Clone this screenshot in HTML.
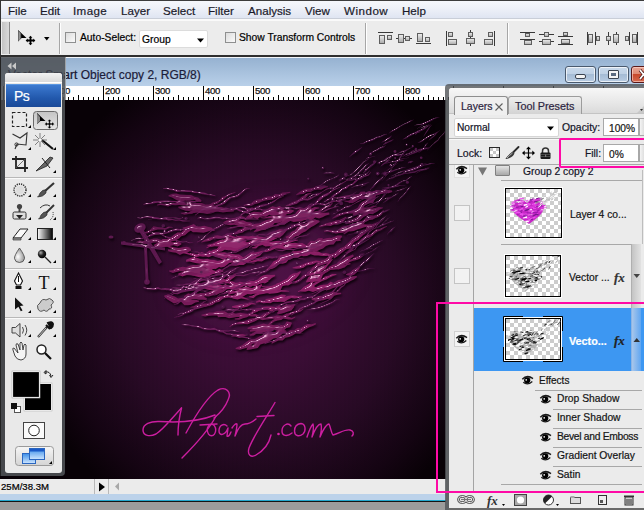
<!DOCTYPE html>
<html><head><meta charset="utf-8">
<style>
*{margin:0;padding:0;box-sizing:border-box}
html,body{width:644px;height:510px;overflow:hidden;background:#9c9c9c;font-family:"Liberation Sans",sans-serif;color:#000}
.a{position:absolute}
.t{position:absolute;white-space:nowrap;line-height:1;-webkit-text-stroke:0.2px currentColor}
/* menu */
#menu{left:0;top:0;width:644px;height:21px;background:linear-gradient(#3c3c3c 0,#3c3c3c 1px,#f5f7fb 1px,#eef1f8 8px,#dfe5f2 18px,#c9ced8 18px,#c9ced8 19px,#fafafa 19px,#fafafa 21px)}
#menu .t{font-size:11.6px;top:5px;color:#1a1a2a}
/* options */
#opts{left:0;top:21px;width:644px;height:36px;background:linear-gradient(#ececec 0,#ececec 34px,#2e2e2e 34px,#2e2e2e 36px)}
#opts .t{font-size:10.3px;color:#111}
.sep{position:absolute;top:23px;width:2px;height:31px;border-left:1px solid #a6a6a6;border-right:1px solid #fff}
.cb{position:absolute;width:11px;height:11px;border:1px solid #8e8f8f;background:linear-gradient(135deg,#dcdcdc,#fafafa)}
/* doc window */
#title{left:0;top:57px;width:644px;height:29px;background:linear-gradient(#f2f5f9 0,#f2f5f9 1px,#96b2d1 1px,#b9d0e9 29px)}
#ruler{left:0;top:86px;width:644px;height:14px;background:#fff}
#canvas{left:0;top:100px;width:446px;height:379px;background:repeating-linear-gradient(90deg,rgba(0,0,0,0.025) 0 2px,rgba(0,0,0,0) 2px 4px),radial-gradient(ellipse 235px 245px at 258px 200px,#440e3e 0%,#3a0d35 30%,#280a25 60%,#140412 86%,#080106 100%)}
#status{left:0;top:479px;width:446px;height:15px;background:#ebebeb}
#frameb{left:0;top:494px;width:446px;height:8px;background:linear-gradient(#bcd2ea 0,#bcd2ea 6px,#22a6cc 6px,#22a6cc 7px,#151515 7px)}
/* tools */
#tools{left:0;top:57px;width:65px;height:419px;background:rgba(78,82,86,0.88);border-left:1px solid #222;border-radius:0 0 4px 0}
#toolsbody{left:5px;top:73px;width:57px;height:400px;background:#e9e9e9;border-radius:3px}
/* layers panel */
#lp{left:445px;top:84px;width:210px;height:430px;background:rgba(80,84,88,0.8);border-radius:4px 0 0 0}
#lpbody{left:449px;top:88px;width:200px;height:430px;background:#ebebeb;border-radius:3px 0 0 0}
.lt{position:absolute;white-space:nowrap;line-height:1;font-size:10.3px;color:#111;-webkit-text-stroke:0.2px currentColor}
.pink{position:absolute;border:2px solid #ff0aa6}
</style></head><body>

<!-- MENU -->
<div id="menu" class="a">
  <div class="t" style="left:8px">File</div>
  <div class="t" style="left:40px">Edit</div>
  <div class="t" style="left:73px;letter-spacing:0.4px">Image</div>
  <div class="t" style="left:121px">Layer</div>
  <div class="t" style="left:163px">Select</div>
  <div class="t" style="left:208px">Filter</div>
  <div class="t" style="left:248px">Analysis</div>
  <div class="t" style="left:305px">View</div>
  <div class="t" style="left:344px;letter-spacing:0.5px">Window</div>
  <div class="t" style="left:402px">Help</div>
  <div class="a" style="left:0;top:0;width:1px;height:21px;background:#333"></div>
</div>

<!-- OPTIONS BAR -->
<div id="opts" class="a">
  <div class="a" style="left:0;top:0;width:1px;height:34px;background:#333"></div>
  <div class="a" style="left:2px;top:1px;width:8px;height:32px;background:linear-gradient(90deg,#c4c4c4,#dadada);border-right:1px solid #8a8a8a"></div>
</div>
<div class="sep" style="left:59px"></div>
<div class="cb" style="left:65px;top:32px"></div>
<div class="t" style="left:80px;top:33px;font-size:10.3px">Auto-Select:</div>
<div class="a" style="left:139px;top:30px;width:69px;height:18px;background:#fff;border:1px solid #dcdcdc;border-radius:2px"></div>
<div class="t" style="left:142px;top:35px;font-size:10.3px">Group</div>
<svg class="a" style="left:0;top:0" width="644" height="57" viewBox="0 0 644 57"><defs><linearGradient id="g1" x1="0" y1="0" x2="0" y2="1"><stop offset="0" stop-color="#f0f0f0"/><stop offset="1" stop-color="#a8a8a8"/></linearGradient></defs><line x1="378" y1="32.5" x2="393" y2="32.5" stroke="#3a3a3a" stroke-width="1"/><rect x="379.5" y="35.5" width="5" height="8" fill="url(#g1)" stroke="#5e5e5e" stroke-width="1"/><rect x="387.5" y="35.5" width="4" height="4" fill="url(#g1)" stroke="#5e5e5e" stroke-width="1"/><line x1="396" y1="38.5" x2="412" y2="38.5" stroke="#3a3a3a" stroke-width="1"/><rect x="398.5" y="34.5" width="5" height="8" fill="url(#g1)" stroke="#5e5e5e" stroke-width="1"/><rect x="405.5" y="36.5" width="4" height="4" fill="url(#g1)" stroke="#5e5e5e" stroke-width="1"/><line x1="416" y1="43.5" x2="431" y2="43.5" stroke="#3a3a3a" stroke-width="1"/><rect x="417.5" y="33.5" width="5" height="8" fill="url(#g1)" stroke="#5e5e5e" stroke-width="1"/><rect x="425.5" y="37.5" width="4" height="4" fill="url(#g1)" stroke="#5e5e5e" stroke-width="1"/><line x1="446.5" y1="31" x2="446.5" y2="46" stroke="#3a3a3a" stroke-width="1"/><rect x="448.5" y="32.5" width="4" height="4" fill="url(#g1)" stroke="#5e5e5e" stroke-width="1"/><rect x="448.5" y="39.5" width="8" height="5" fill="url(#g1)" stroke="#5e5e5e" stroke-width="1"/><line x1="470.5" y1="30" x2="470.5" y2="46" stroke="#3a3a3a" stroke-width="1"/><rect x="468.5" y="32.5" width="4" height="4" fill="url(#g1)" stroke="#5e5e5e" stroke-width="1"/><rect x="466.5" y="38.5" width="8" height="5" fill="url(#g1)" stroke="#5e5e5e" stroke-width="1"/><line x1="494.5" y1="31" x2="494.5" y2="46" stroke="#3a3a3a" stroke-width="1"/><rect x="488.5" y="32.5" width="4" height="4" fill="url(#g1)" stroke="#5e5e5e" stroke-width="1"/><rect x="484.5" y="39.5" width="8" height="5" fill="url(#g1)" stroke="#5e5e5e" stroke-width="1"/><line x1="520" y1="32.5" x2="535" y2="32.5" stroke="#3a3a3a" stroke-width="1"/><rect x="525.5" y="33.5" width="4" height="3" fill="url(#g1)" stroke="#5e5e5e" stroke-width="1"/><line x1="520" y1="39.5" x2="535" y2="39.5" stroke="#3a3a3a" stroke-width="1"/><rect x="524.5" y="40.5" width="7" height="4" fill="url(#g1)" stroke="#5e5e5e" stroke-width="1"/><line x1="539" y1="34.5" x2="554" y2="34.5" stroke="#3a3a3a" stroke-width="1"/><rect x="544.5" y="32.5" width="4" height="4" fill="url(#g1)" stroke="#5e5e5e" stroke-width="1"/><line x1="539" y1="41.5" x2="554" y2="41.5" stroke="#3a3a3a" stroke-width="1"/><rect x="542.5" y="39.5" width="8" height="5" fill="url(#g1)" stroke="#5e5e5e" stroke-width="1"/><rect x="563.5" y="32.5" width="4" height="3" fill="url(#g1)" stroke="#5e5e5e" stroke-width="1"/><line x1="558" y1="36.5" x2="573" y2="36.5" stroke="#3a3a3a" stroke-width="1"/><rect x="561.5" y="39.5" width="8" height="4" fill="url(#g1)" stroke="#5e5e5e" stroke-width="1"/><line x1="558" y1="44.5" x2="573" y2="44.5" stroke="#3a3a3a" stroke-width="1"/><line x1="587.5" y1="32" x2="587.5" y2="45" stroke="#3a3a3a" stroke-width="1"/><rect x="588.5" y="34.5" width="4" height="8" fill="url(#g1)" stroke="#5e5e5e" stroke-width="1"/><line x1="595.5" y1="32" x2="595.5" y2="45" stroke="#3a3a3a" stroke-width="1"/><rect x="596.5" y="36.5" width="3" height="4" fill="url(#g1)" stroke="#5e5e5e" stroke-width="1"/><line x1="608.5" y1="32" x2="608.5" y2="45" stroke="#3a3a3a" stroke-width="1"/><rect x="606.5" y="36.5" width="4" height="4" fill="url(#g1)" stroke="#5e5e5e" stroke-width="1"/><line x1="616.5" y1="32" x2="616.5" y2="45" stroke="#3a3a3a" stroke-width="1"/><rect x="613.5" y="34.5" width="5" height="8" fill="url(#g1)" stroke="#5e5e5e" stroke-width="1"/><rect x="625.5" y="36.5" width="3" height="4" fill="url(#g1)" stroke="#5e5e5e" stroke-width="1"/><line x1="629.5" y1="32" x2="629.5" y2="45" stroke="#3a3a3a" stroke-width="1"/><rect x="632.5" y="34.5" width="4" height="8" fill="url(#g1)" stroke="#5e5e5e" stroke-width="1"/><line x1="637.5" y1="32" x2="637.5" y2="45" stroke="#3a3a3a" stroke-width="1"/></svg><svg class="a" style="left:0;top:0" width="60" height="57" viewBox="0 0 60 57">
<defs><linearGradient id="mg" x1="0" y1="0" x2="1" y2="0"><stop offset="0" stop-color="#555"/><stop offset="0.5" stop-color="#a0a0a0"/><stop offset="1" stop-color="#222"/></linearGradient></defs>
<path d="M18 30 L26.5 38 L21.5 38 L18 41.5 Z" fill="#000"/>
<path d="M18 30.5 L21.5 34 L21.5 38 L18 41.5 Z" fill="url(#mg)"/>
<g transform="translate(30.5,40.5) scale(0.88)" fill="#000"><path d="M0 -5.5 L2.2 -3.2 L1 -3.2 L1 -1 L3.2 -1 L3.2 -2.2 L5.5 0 L3.2 2.2 L3.2 1 L1 1 L1 3.2 L2.2 3.2 L0 5.5 L-2.2 3.2 L-1 3.2 L-1 1 L-3.2 1 L-3.2 2.2 L-5.5 0 L-3.2 -2.2 L-3.2 -1 L-1 -1 L-1 -3.2 L-2.2 -3.2Z"/></g>
<path d="M44 37 L49.5 37 L46.75 40.5 Z" fill="#000"/>
</svg>
<svg class="a" style="left:196px;top:37px" width="9" height="6" viewBox="0 0 9 6"><path d="M1 1.5 L8 1.5 L4.5 5.5Z" fill="#000"/></svg>
<div class="sep" style="left:365px"></div>
<div class="sep" style="left:507px"></div>
<div class="cb" style="left:225px;top:32px"></div>
<div class="t" style="left:239px;top:33px;font-size:10.3px">Show Transform Controls</div>

<!-- DOCUMENT -->
<div id="title" class="a"></div>
<div class="t" style="left:8px;top:69px;font-size:12px;color:#1c1c3a">Vector Smart Object copy 2, RGB/8)</div>
<div id="ruler" class="a"></div>
<svg class="a" style="left:0;top:86px" width="644" height="14" viewBox="0 0 644 14"><g font-family="Liberation Sans" font-size="9.6" letter-spacing="-0.3" fill="#111" stroke="#111" stroke-width="0.25"><text x="5" y="8.3">0</text><text x="55" y="8.3">100</text><text x="105" y="8.3">200</text><text x="155" y="8.3">300</text><text x="205" y="8.3">400</text><text x="255" y="8.3">500</text><text x="305" y="8.3">600</text><text x="355" y="8.3">700</text><text x="405" y="8.3">800</text><text x="455" y="8.3">900</text><text x="505" y="8.3">1000</text><text x="555" y="8.3">1100</text><text x="605" y="8.3">1200</text></g><g fill="#000"><rect x="3" y="0" width="1" height="14"/><rect x="8" y="11" width="1" height="3"/><rect x="13" y="11" width="1" height="3"/><rect x="18" y="11" width="1" height="3"/><rect x="23" y="11" width="1" height="3"/><rect x="28" y="9" width="1" height="5"/><rect x="33" y="11" width="1" height="3"/><rect x="38" y="11" width="1" height="3"/><rect x="43" y="11" width="1" height="3"/><rect x="48" y="11" width="1" height="3"/><rect x="53" y="0" width="1" height="14"/><rect x="58" y="11" width="1" height="3"/><rect x="63" y="11" width="1" height="3"/><rect x="68" y="11" width="1" height="3"/><rect x="73" y="11" width="1" height="3"/><rect x="78" y="9" width="1" height="5"/><rect x="83" y="11" width="1" height="3"/><rect x="88" y="11" width="1" height="3"/><rect x="93" y="11" width="1" height="3"/><rect x="98" y="11" width="1" height="3"/><rect x="103" y="0" width="1" height="14"/><rect x="108" y="11" width="1" height="3"/><rect x="113" y="11" width="1" height="3"/><rect x="118" y="11" width="1" height="3"/><rect x="123" y="11" width="1" height="3"/><rect x="128" y="9" width="1" height="5"/><rect x="133" y="11" width="1" height="3"/><rect x="138" y="11" width="1" height="3"/><rect x="143" y="11" width="1" height="3"/><rect x="148" y="11" width="1" height="3"/><rect x="153" y="0" width="1" height="14"/><rect x="158" y="11" width="1" height="3"/><rect x="163" y="11" width="1" height="3"/><rect x="168" y="11" width="1" height="3"/><rect x="173" y="11" width="1" height="3"/><rect x="178" y="9" width="1" height="5"/><rect x="183" y="11" width="1" height="3"/><rect x="188" y="11" width="1" height="3"/><rect x="193" y="11" width="1" height="3"/><rect x="198" y="11" width="1" height="3"/><rect x="203" y="0" width="1" height="14"/><rect x="208" y="11" width="1" height="3"/><rect x="213" y="11" width="1" height="3"/><rect x="218" y="11" width="1" height="3"/><rect x="223" y="11" width="1" height="3"/><rect x="228" y="9" width="1" height="5"/><rect x="233" y="11" width="1" height="3"/><rect x="238" y="11" width="1" height="3"/><rect x="243" y="11" width="1" height="3"/><rect x="248" y="11" width="1" height="3"/><rect x="253" y="0" width="1" height="14"/><rect x="258" y="11" width="1" height="3"/><rect x="263" y="11" width="1" height="3"/><rect x="268" y="11" width="1" height="3"/><rect x="273" y="11" width="1" height="3"/><rect x="278" y="9" width="1" height="5"/><rect x="283" y="11" width="1" height="3"/><rect x="288" y="11" width="1" height="3"/><rect x="293" y="11" width="1" height="3"/><rect x="298" y="11" width="1" height="3"/><rect x="303" y="0" width="1" height="14"/><rect x="308" y="11" width="1" height="3"/><rect x="313" y="11" width="1" height="3"/><rect x="318" y="11" width="1" height="3"/><rect x="323" y="11" width="1" height="3"/><rect x="328" y="9" width="1" height="5"/><rect x="333" y="11" width="1" height="3"/><rect x="338" y="11" width="1" height="3"/><rect x="343" y="11" width="1" height="3"/><rect x="348" y="11" width="1" height="3"/><rect x="353" y="0" width="1" height="14"/><rect x="358" y="11" width="1" height="3"/><rect x="363" y="11" width="1" height="3"/><rect x="368" y="11" width="1" height="3"/><rect x="373" y="11" width="1" height="3"/><rect x="378" y="9" width="1" height="5"/><rect x="383" y="11" width="1" height="3"/><rect x="388" y="11" width="1" height="3"/><rect x="393" y="11" width="1" height="3"/><rect x="398" y="11" width="1" height="3"/><rect x="403" y="0" width="1" height="14"/><rect x="408" y="11" width="1" height="3"/><rect x="413" y="11" width="1" height="3"/><rect x="418" y="11" width="1" height="3"/><rect x="423" y="11" width="1" height="3"/><rect x="428" y="9" width="1" height="5"/><rect x="433" y="11" width="1" height="3"/><rect x="438" y="11" width="1" height="3"/><rect x="443" y="11" width="1" height="3"/><rect x="448" y="11" width="1" height="3"/><rect x="453" y="0" width="1" height="14"/><rect x="458" y="11" width="1" height="3"/><rect x="463" y="11" width="1" height="3"/><rect x="468" y="11" width="1" height="3"/><rect x="473" y="11" width="1" height="3"/><rect x="478" y="9" width="1" height="5"/><rect x="483" y="11" width="1" height="3"/><rect x="488" y="11" width="1" height="3"/><rect x="493" y="11" width="1" height="3"/><rect x="498" y="11" width="1" height="3"/><rect x="503" y="0" width="1" height="14"/><rect x="508" y="11" width="1" height="3"/><rect x="513" y="11" width="1" height="3"/><rect x="518" y="11" width="1" height="3"/><rect x="523" y="11" width="1" height="3"/><rect x="528" y="9" width="1" height="5"/><rect x="533" y="11" width="1" height="3"/><rect x="538" y="11" width="1" height="3"/><rect x="543" y="11" width="1" height="3"/><rect x="548" y="11" width="1" height="3"/><rect x="553" y="0" width="1" height="14"/><rect x="558" y="11" width="1" height="3"/><rect x="563" y="11" width="1" height="3"/><rect x="568" y="11" width="1" height="3"/><rect x="573" y="11" width="1" height="3"/><rect x="578" y="9" width="1" height="5"/><rect x="583" y="11" width="1" height="3"/><rect x="588" y="11" width="1" height="3"/><rect x="593" y="11" width="1" height="3"/><rect x="598" y="11" width="1" height="3"/><rect x="603" y="0" width="1" height="14"/><rect x="608" y="11" width="1" height="3"/><rect x="613" y="11" width="1" height="3"/><rect x="618" y="11" width="1" height="3"/><rect x="623" y="11" width="1" height="3"/><rect x="628" y="9" width="1" height="5"/><rect x="633" y="11" width="1" height="3"/><rect x="638" y="11" width="1" height="3"/><rect x="643" y="11" width="1" height="3"/></g></svg>
<div class="a" style="left:565px;top:66px;width:31px;height:17px;border:1px solid #4a5a6e;border-radius:3px;box-shadow:inset 0 0 0 1px rgba(255,255,255,.7);background:linear-gradient(#c9d9eb 0,#bfd1e5 45%,#a5bcd5 50%,#b8cce3 100%)"></div>
<div class="a" style="left:575px;top:74px;width:11px;height:5px;border:1px solid #3a4350;border-radius:2px;background:#f4f4f4"></div>
<div class="a" style="left:598px;top:66px;width:31px;height:17px;border:1px solid #4a5a6e;border-radius:3px;box-shadow:inset 0 0 0 1px rgba(255,255,255,.7);background:linear-gradient(#c9d9eb 0,#bfd1e5 45%,#a5bcd5 50%,#b8cce3 100%)"></div>
<div class="a" style="left:608px;top:70px;width:11px;height:9px;border:1px solid #3a4350;border-radius:1px;background:#f4f4f4"></div>
<div class="a" style="left:611px;top:73px;width:5px;height:3px;background:#5a6a80"></div>
<div class="a" style="left:631px;top:66px;width:40px;height:17px;border:1px solid #5a1818;border-radius:3px;box-shadow:inset 0 0 0 1px rgba(255,220,210,.6);background:linear-gradient(#e9a595 0,#de8a74 45%,#c8482c 50%,#d66a50 100%)"></div>
<svg class="a" style="left:638px;top:68px" width="6" height="13" viewBox="0 0 6 13"><path d="M2 2 L9 11 M9 2 L2 11" stroke="#4a1a1a" stroke-width="3.2"/><path d="M2 2 L9 11 M9 2 L2 11" stroke="#fff" stroke-width="1.8"/></svg>

<div id="canvas" class="a"></div>
<svg id="art" class="a" style="left:0;top:100px" width="446" height="379" viewBox="0 100 446 379">
<defs>
<filter id="bl" x="-50%" y="-50%" width="200%" height="200%"><feGaussianBlur stdDeviation="16"/></filter>
<filter id="gloss" x="-10%" y="-10%" width="120%" height="120%" color-interpolation-filters="sRGB">
<feGaussianBlur in="SourceAlpha" stdDeviation="0.9" result="b"/>
<feSpecularLighting in="b" surfaceScale="4" specularConstant="1.0" specularExponent="35" lighting-color="#f2c0e0" result="spec"><feDistantLight azimuth="240" elevation="45"/></feSpecularLighting>
<feComposite in="spec" in2="SourceAlpha" operator="in" result="specIn"/>
<feOffset in="SourceAlpha" dx="1" dy="1.5" result="off"/><feGaussianBlur in="off" stdDeviation="1" result="offb"/>
<feFlood flood-color="#0a0008" flood-opacity="0.9"/><feComposite in2="offb" operator="in" result="shadow"/>
<feMerge><feMergeNode in="shadow"/><feMergeNode in="SourceGraphic"/><feMergeNode in="specIn"/></feMerge>
</filter>
</defs>
<ellipse cx="262" cy="268" rx="80" ry="52" transform="rotate(-15 262 268)" fill="#5a1450" opacity="0.5" filter="url(#bl)"/>
<g filter="url(#gloss)"><g><path d="M266.5 271.2L269.5 269.3L273.1 268.6L276.1 266.7L278.7 263.6L282.7 263.8L286.1 262.7L288.6 259.7L292.0 258.6L295.3 257.2L297.8 254.1L301.2 253.0L304.7 252.2L304.2 250.9L300.2 250.9L296.5 251.3L292.5 251.2L289.8 253.8L287.1 256.5L282.9 256.0L279.3 256.7L276.9 259.9L273.6 261.2L271.2 264.5L268.6 267.5L265.9 269.9Z" fill="#8a1e64"/><path d="M255.7 242.1L259.4 242.4L263.4 243.5L266.9 242.6L270.3 241.6L273.5 239.3L277.0 238.8L276.9 238.3L273.1 237.7L269.7 239.1L266.2 239.8L262.7 240.6L259.1 241.1L255.5 241.6Z" fill="#8a1e64"/><path d="M218.1 245.1L221.8 245.3L225.6 246.1L229.2 245.9L232.7 245.1L236.4 245.5L239.7 243.9L243.0 242.2L246.5 241.5L246.2 240.1L242.2 238.4L238.9 239.9L235.1 239.1L231.7 240.2L227.9 239.5L224.5 240.7L220.8 240.3L217.9 244.1Z" fill="#8a1e64"/><path d="M269.6 237.4L274.6 237.8L279.5 237.7L283.0 235.0L285.9 231.4L285.2 230.0L279.8 229.0L275.8 230.8L272.0 232.8L269.0 236.3Z" fill="#761a58"/><path d="M333.6 268.5L338.5 269.4L342.4 268.3L344.8 264.4L348.1 262.2L350.6 258.5L353.9 256.2L353.0 254.5L349.3 255.9L345.7 257.6L342.6 260.1L339.1 262.0L336.0 264.6L333.2 267.7Z" fill="#761a58"/><path d="M231.9 220.8L235.4 223.6L239.0 225.2L242.7 225.6L246.4 226.4L250.1 226.7L253.8 227.1L257.3 229.4L261.2 227.2L264.9 226.9L265.1 225.2L261.5 223.5L257.8 223.4L254.0 224.1L250.4 222.4L246.7 222.0L243.1 220.3L239.4 220.5L235.8 219.4L232.0 219.7Z" fill="#761a58"/><path d="M250.1 230.4L253.5 228.8L257.2 228.0L261.5 229.1L264.7 227.0L268.2 225.5L271.5 223.5L275.2 222.9L279.0 222.7L282.5 221.2L286.3 221.0L289.6 218.9L293.1 217.5L296.7 216.6L296.4 215.5L292.4 215.4L288.8 216.4L284.5 215.0L280.6 215.0L277.2 216.8L273.6 217.7L270.2 219.3L266.4 219.9L263.0 221.5L259.8 223.6L256.3 225.0L252.9 226.7L249.8 229.4Z" fill="#761a58"/><path d="M290.9 225.4L294.8 226.2L298.5 225.9L302.3 226.2L306.1 226.1L309.9 226.3L313.4 224.6L316.9 223.4L316.8 222.7L313.0 222.7L309.4 223.5L305.7 223.8L302.0 224.6L298.1 223.8L294.5 224.8L290.8 224.9Z" fill="#761a58"/><path d="M345.1 253.1L348.9 252.5L351.9 250.5L354.3 247.6L357.2 245.6L360.0 243.3L362.4 240.5L365.5 238.8L369.1 237.8L372.2 236.0L374.7 233.4L377.7 231.5L381.1 230.2L384.1 228.3L387.2 226.6L386.8 225.9L383.3 227.0L380.4 229.1L376.4 229.5L373.5 231.5L370.8 234.0L367.3 235.0L364.3 237.0L361.4 239.1L358.7 241.4L355.8 243.5L352.9 245.6L350.8 248.8L348.0 251.0L344.9 252.7Z" fill="#64164e"/><path d="M301.2 291.5L305.1 291.7L308.8 290.8L313.0 292.0L316.6 290.8L320.5 290.3L324.1 288.8L327.8 288.0L331.8 288.1L335.4 286.6L338.8 284.1L338.4 282.1L334.7 283.2L330.6 281.8L327.2 284.5L323.3 284.8L319.5 285.4L316.0 287.3L311.6 284.8L307.9 285.7L304.2 286.9L300.8 289.9Z" fill="#8a1e64"/><path d="M284.7 222.5L288.1 221.0L292.0 220.6L295.8 219.8L299.4 218.9L303.3 218.4L306.3 215.9L309.7 214.3L312.7 211.9L315.7 209.2L319.3 208.2L319.0 207.5L314.7 207.0L311.3 208.5L308.2 210.7L304.4 211.5L300.6 212.0L297.8 215.1L294.4 216.6L290.8 217.8L287.1 218.6L284.0 220.9Z" fill="#761a58"/><path d="M271.8 301.5L276.1 301.8L279.1 299.1L283.2 299.1L285.9 295.7L285.6 295.0L281.3 294.6L277.8 296.1L274.0 297.1L271.4 300.6Z" fill="#8a1e64"/><path d="M168.2 251.2L172.1 252.3L175.9 252.8L179.9 254.9L183.6 253.2L187.4 252.4L191.1 250.6L191.0 249.0L187.0 247.1L183.3 249.3L179.4 248.1L175.7 249.3L171.9 249.8L168.0 249.3Z" fill="#761a58"/><path d="M234.9 319.5L239.3 319.7L243.1 318.2L247.0 317.2L250.6 315.1L254.2 313.0L258.0 311.5L257.7 310.5L253.5 310.3L250.0 313.0L246.2 314.5L242.0 314.8L238.7 318.0L234.6 318.5Z" fill="#761a58"/><path d="M215.2 299.2L218.8 298.2L222.6 298.6L226.2 297.8L229.9 297.2L233.7 298.7L237.4 299.5L241.1 298.5L244.8 299.1L248.6 299.7L248.5 298.9L244.8 297.4L241.0 296.0L237.3 296.8L233.6 295.6L229.9 295.4L226.2 295.0L222.5 296.3L218.8 296.8L215.1 298.7Z" fill="#8a1e64"/><path d="M261.9 286.7L265.8 287.7L269.6 288.6L273.4 288.5L277.1 287.8L280.8 286.4L284.4 285.2L288.2 285.4L291.8 283.5L295.6 283.2L299.1 280.9L299.0 280.1L295.4 281.3L291.7 282.1L288.0 283.1L284.1 282.3L280.5 283.7L276.9 285.3L273.1 285.4L269.4 286.2L265.6 286.4L261.8 286.0Z" fill="#8a1e64"/><path d="M168.4 196.2L172.0 197.4L175.4 199.5L178.9 200.9L182.8 200.4L186.4 200.8L190.2 200.7L194.1 199.8L197.5 201.7L201.2 202.0L201.5 200.2L198.2 197.6L194.6 196.7L191.1 194.9L187.3 194.9L183.6 194.8L179.9 194.6L176.3 193.5L172.6 193.7L168.6 195.2Z" fill="#64164e"/><path d="M207.6 256.3L210.8 254.1L215.0 254.1L218.0 251.5L222.0 250.8L225.1 248.6L228.6 246.9L232.1 245.4L235.9 244.4L238.7 241.5L242.3 240.1L241.6 238.8L237.7 239.4L233.9 240.4L229.9 240.9L226.3 242.3L223.1 244.5L219.4 245.6L216.8 249.0L213.0 249.9L209.8 252.0L206.9 254.8Z" fill="#8a1e64"/><path d="M332.4 218.8L335.8 217.6L339.1 216.3L342.4 214.7L345.9 214.0L349.5 213.6L353.1 213.4L356.6 213.1L359.8 211.2L363.3 210.2L366.6 208.8L370.3 209.3L373.5 207.3L376.9 206.3L376.8 205.7L373.1 205.7L369.9 207.3L366.3 207.4L362.7 207.6L359.4 209.5L356.1 210.9L352.6 211.3L349.0 211.7L345.4 211.7L342.1 213.1L338.7 214.2L335.4 215.8L332.3 218.1Z" fill="#64164e"/><path d="M235.8 348.9L239.9 349.7L243.5 348.8L247.1 347.8L250.3 345.4L253.6 343.5L257.4 343.3L260.6 340.8L264.2 339.9L267.5 337.8L270.8 335.9L270.6 335.1L266.8 335.3L262.9 335.3L259.4 336.5L256.0 338.4L252.6 339.8L248.8 340.2L245.6 342.5L242.4 345.0L239.0 346.4L235.5 347.9Z" fill="#761a58"/><path d="M156.9 205.6L160.6 204.9L164.3 205.6L168.1 206.6L171.8 205.1L175.5 205.2L179.2 204.9L183.0 205.6L186.7 205.3L190.4 204.9L194.1 205.8L197.9 206.1L201.6 205.9L201.6 204.9L197.8 204.9L194.1 203.8L190.3 202.6L186.6 203.5L182.9 202.4L179.1 201.5L175.5 203.1L171.7 202.8L168.0 203.8L164.3 203.8L160.6 203.2L156.9 204.8Z" fill="#64164e"/><path d="M298.2 292.0L301.8 291.0L304.5 288.4L308.1 287.3L311.2 285.4L313.5 282.1L316.1 279.3L319.9 278.5L322.3 275.4L325.1 272.9L327.9 270.5L331.0 268.7L334.0 266.5L337.1 264.5L336.8 264.0L333.2 265.1L329.8 266.6L327.0 269.1L323.7 270.6L321.3 273.6L318.4 275.9L315.0 277.4L312.5 280.3L309.8 282.9L306.9 285.2L303.7 287.0L301.1 289.7L297.8 291.3Z" fill="#8a1e64"/><path d="M252.0 248.2L256.1 248.5L258.9 246.1L262.4 245.1L265.4 243.1L268.4 240.9L271.7 239.4L274.7 237.4L277.7 235.3L281.1 234.1L280.7 233.2L276.8 233.1L273.7 235.0L270.1 235.8L266.9 237.4L263.9 239.5L260.7 241.2L258.2 244.5L255.2 246.5L251.7 247.6Z" fill="#8a1e64"/><path d="M226.5 235.9L230.1 237.3L233.8 238.2L237.5 239.5L241.2 240.1L245.0 238.7L248.7 239.1L252.4 239.1L256.1 239.5L259.8 240.4L263.5 240.7L267.2 240.4L271.0 240.0L271.0 239.3L267.3 238.7L263.6 238.1L259.9 237.2L256.2 236.3L252.5 235.7L248.8 236.8L245.1 236.2L241.3 236.4L237.6 237.4L233.9 236.5L230.2 235.0L226.5 235.1Z" fill="#8a1e64"/><path d="M227.5 295.1L231.2 294.0L235.1 293.3L239.0 292.6L242.7 291.4L246.2 289.4L245.9 288.3L242.0 289.0L238.2 290.1L234.4 291.0L230.4 291.1L227.3 294.5Z" fill="#8a1e64"/><path d="M223.5 248.1L227.4 249.9L231.2 250.5L235.1 251.7L238.8 249.5L242.6 249.7L242.6 248.9L238.7 246.9L234.9 247.0L231.1 247.4L227.3 247.5L223.5 246.9Z" fill="#8a1e64"/><path d="M265.2 327.2L268.4 325.7L271.3 323.6L274.3 321.4L277.7 320.5L281.3 319.9L284.3 317.8L287.5 316.4L290.5 314.4L293.8 313.1L297.4 312.6L300.8 311.6L303.6 309.1L303.4 308.6L300.2 310.2L296.6 310.7L293.1 311.5L289.8 312.9L286.3 313.7L283.2 315.3L280.4 317.7L276.7 318.0L273.5 319.6L270.5 321.7L268.0 324.7L265.0 326.8Z" fill="#761a58"/><path d="M182.1 253.1L185.6 253.7L189.1 254.7L192.6 256.1L196.0 257.2L199.7 256.3L203.2 256.8L206.9 255.9L210.5 255.4L214.1 255.5L217.7 255.4L221.2 256.4L224.8 255.6L228.3 256.7L231.8 256.8L231.9 256.2L228.4 255.3L225.0 253.1L221.4 254.1L217.8 253.7L214.2 254.0L210.8 252.2L207.1 253.2L203.5 253.5L200.0 253.4L196.3 254.2L192.8 253.2L189.2 253.3L185.8 252.1L182.2 252.3Z" fill="#8a1e64"/><path d="M258.9 253.5L262.3 251.8L266.3 252.1L269.9 251.1L273.3 249.5L276.9 248.3L280.5 247.2L283.8 245.2L287.2 243.5L290.8 242.5L294.4 241.3L298.0 240.5L297.8 239.7L293.9 239.6L290.0 239.7L286.5 241.3L283.1 243.1L279.9 245.4L276.3 246.3L272.6 247.1L269.2 248.9L265.8 250.5L261.9 250.7L258.6 252.6Z" fill="#8a1e64"/><path d="M192.9 285.8L196.6 286.3L200.3 287.9L204.1 288.5L207.8 289.7L211.6 290.3L215.3 289.8L219.0 290.0L222.8 289.5L226.6 287.1L226.6 286.0L222.8 285.6L219.1 284.2L215.4 285.7L211.6 285.2L207.9 285.3L204.1 285.1L200.4 283.4L196.7 282.3L192.9 284.0Z" fill="#8a1e64"/><path d="M347.0 223.7L350.7 223.2L354.1 222.0L357.8 221.5L360.9 219.6L363.6 216.9L366.8 215.4L369.9 213.5L373.8 213.4L377.0 211.8L379.9 209.6L383.2 208.1L382.9 207.5L378.7 207.1L375.2 207.9L371.6 208.7L367.9 209.2L365.2 211.8L362.4 214.5L358.8 215.2L355.9 217.5L352.7 219.1L349.8 221.3L346.4 222.3Z" fill="#64164e"/><path d="M206.6 248.2L210.1 246.7L213.8 246.0L217.2 244.5L220.6 242.6L224.4 242.3L227.8 240.3L231.5 239.7L235.2 239.3L235.1 238.7L231.1 238.2L227.1 237.5L223.7 239.7L220.0 240.0L216.5 241.7L213.1 243.5L209.8 245.5L206.4 247.4Z" fill="#8a1e64"/><path d="M159.5 245.2L163.3 246.5L167.2 246.8L170.9 248.5L174.8 249.3L178.7 249.7L182.6 249.0L186.7 248.2L190.5 248.6L190.6 248.0L186.8 246.7L182.8 247.3L178.8 248.0L174.9 247.5L171.1 246.5L167.4 244.9L163.5 244.7L159.5 244.8Z" fill="#761a58"/><path d="M307.7 273.8L310.9 271.9L314.0 270.0L316.6 267.2L320.0 265.7L323.7 264.5L327.3 263.4L330.0 260.8L332.4 257.7L335.2 255.4L338.1 253.0L341.3 251.2L340.7 250.4L337.0 251.4L333.8 253.3L329.9 254.2L327.7 257.3L324.6 259.4L321.0 260.6L317.6 262.2L315.2 265.3L312.3 267.5L309.8 270.4L306.9 272.6Z" fill="#761a58"/><path d="M297.4 254.6L301.7 255.1L304.8 253.0L308.6 252.2L312.3 251.4L316.5 251.6L319.7 249.7L323.1 248.4L326.0 245.9L329.5 244.7L333.6 244.5L336.1 241.3L339.5 239.7L342.2 236.7L341.5 235.4L337.5 235.4L334.1 236.9L330.7 238.3L327.9 241.1L324.0 241.6L320.9 243.6L316.5 243.0L313.1 244.4L309.6 245.7L307.1 249.1L303.0 249.2L300.0 251.3L296.9 253.4Z" fill="#761a58"/><path d="M223.3 222.8L227.2 222.8L231.0 222.6L234.8 222.4L238.1 220.4L241.4 218.7L245.0 217.7L244.7 216.9L240.5 215.9L237.2 217.6L234.1 220.1L230.1 219.8L226.5 220.6L223.1 222.3Z" fill="#761a58"/><path d="M319.5 227.0L323.0 226.3L326.5 225.4L330.5 226.0L333.8 224.6L337.5 224.3L340.9 223.2L343.8 221.0L346.4 217.7L345.9 216.7L342.8 218.5L339.6 220.1L336.0 220.4L332.6 221.7L329.2 222.6L325.6 223.4L322.4 224.9L319.1 226.1Z" fill="#761a58"/><path d="M190.5 307.6L194.4 307.8L198.0 307.1L201.7 306.8L205.5 306.7L209.0 305.8L212.5 304.9L215.5 302.6L219.0 301.9L222.0 299.5L224.8 296.8L224.6 296.3L221.3 297.6L218.0 299.1L214.5 300.1L211.3 301.6L208.1 303.4L204.3 303.4L200.9 304.8L197.0 304.4L193.8 306.2L190.3 307.0Z" fill="#761a58"/><path d="M224.2 293.3L227.9 292.9L231.4 291.3L235.0 290.1L238.7 289.8L242.6 291.1L246.2 290.2L249.9 290.1L253.7 290.4L257.3 289.8L261.1 290.5L264.8 289.5L268.5 289.8L272.3 290.0L272.2 289.4L268.4 288.6L264.6 287.9L260.9 288.4L257.1 287.4L253.5 288.4L249.6 287.6L245.8 286.3L242.2 288.0L238.5 287.7L234.7 287.4L231.2 289.6L227.6 290.7L224.1 292.6Z" fill="#8a1e64"/><path d="M250.0 335.8L253.9 335.6L257.0 333.2L261.0 333.3L264.5 332.1L268.4 331.7L272.1 331.0L275.2 328.8L278.5 327.1L282.2 326.2L281.8 325.1L277.7 325.0L273.8 325.2L270.0 325.5L266.7 327.3L263.2 328.8L259.2 328.7L256.1 330.9L252.9 333.0L249.6 334.7Z" fill="#761a58"/><path d="M223.6 223.6L227.1 224.7L230.7 225.2L234.3 224.7L237.8 225.8L241.3 226.6L244.8 227.6L248.2 228.8L248.3 228.1L244.9 226.0L241.4 224.6L237.9 223.7L234.4 223.0L230.9 222.8L227.2 223.6L223.7 223.1Z" fill="#761a58"/><path d="M292.7 268.2L296.5 268.8L300.0 268.5L303.5 267.7L306.5 265.2L310.0 264.9L313.4 263.9L316.7 262.3L320.1 261.7L320.0 261.0L316.2 260.4L312.8 261.3L309.3 261.9L305.9 262.9L302.7 264.4L299.3 265.5L296.0 266.6L292.5 267.5Z" fill="#8a1e64"/><path d="M222.6 290.2L226.5 289.3L230.7 289.0L233.7 286.4L237.3 284.8L237.0 284.0L232.6 283.9L229.3 286.0L225.9 287.9L222.4 289.6Z" fill="#8a1e64"/><path d="M249.3 297.3L253.4 298.2L256.2 295.7L259.6 294.6L263.1 293.9L266.6 293.3L269.9 291.9L273.3 291.0L276.2 288.7L279.4 287.2L282.4 285.0L285.8 284.1L289.2 283.1L288.9 282.2L285.3 282.4L281.5 282.2L278.5 284.4L274.8 284.5L271.7 286.4L268.6 288.2L265.5 290.1L262.2 291.4L258.7 291.9L255.6 293.8L252.5 295.8L249.0 296.3Z" fill="#8a1e64"/><path d="M186.1 261.7L189.6 261.6L193.1 262.5L196.6 263.2L200.1 263.8L203.6 263.3L207.1 263.2L210.6 263.8L214.1 266.0L217.6 264.8L221.1 265.4L224.7 264.8L228.2 263.2L231.7 261.7L231.8 260.4L228.3 260.0L224.8 259.0L221.2 260.2L217.7 261.0L214.2 259.9L210.7 259.7L207.2 258.8L203.7 259.4L200.2 259.1L196.7 257.7L193.2 257.0L189.7 258.2L186.1 259.8Z" fill="#8a1e64"/><path d="M136.1 242.5L139.6 242.7L143.2 243.7L146.7 243.9L150.2 243.2L153.8 242.4L157.3 242.4L160.8 243.3L164.4 243.7L167.9 244.5L167.9 243.6L164.3 241.9L160.8 239.7L157.2 238.6L153.7 238.5L150.2 239.5L146.7 240.1L143.1 240.9L139.6 240.5L136.1 241.9Z" fill="#64164e"/><path d="M197.8 254.9L201.5 255.8L205.2 256.2L208.8 257.2L212.7 255.4L216.4 255.9L219.9 258.2L223.5 259.7L227.5 257.4L231.0 259.3L234.8 258.7L238.4 260.1L242.1 261.1L245.8 261.2L245.9 260.2L242.5 256.8L239.0 254.6L235.2 254.6L231.6 253.7L227.9 253.2L224.3 252.2L220.5 252.4L216.8 252.2L213.0 252.1L209.5 250.6L205.4 253.6L201.8 252.1L197.9 253.9Z" fill="#8a1e64"/><path d="M169.2 271.4L172.9 273.1L176.3 272.1L179.8 271.3L183.3 271.4L186.6 269.8L190.3 270.8L193.8 270.1L197.1 268.7L200.5 267.6L204.1 268.1L207.5 267.4L210.8 265.3L214.3 264.8L217.6 263.1L217.4 261.8L214.0 262.7L210.5 262.7L207.0 263.4L203.4 263.1L200.1 264.5L196.6 265.1L193.1 265.0L189.6 265.7L186.3 267.3L182.7 266.7L179.2 267.4L175.8 268.2L172.6 270.2L169.1 270.6Z" fill="#761a58"/><path d="M357.5 238.2L361.2 236.9L364.0 234.4L367.0 231.9L370.1 229.8L373.7 228.3L376.0 225.0L378.8 222.3L378.4 221.7L374.8 223.2L371.0 224.4L367.0 225.3L365.4 229.7L361.4 230.6L358.8 233.4L357.0 237.6Z" fill="#64164e"/><path d="M246.0 262.2L250.1 262.6L254.1 262.4L257.7 261.3L261.9 261.6L265.1 259.6L268.9 258.7L268.7 258.3L264.6 257.9L260.9 258.9L257.0 259.3L253.3 260.3L249.7 261.5L245.8 261.8Z" fill="#8a1e64"/><path d="M326.2 290.6L329.8 289.5L333.2 288.1L336.8 287.0L340.5 286.1L343.7 284.0L347.3 283.0L350.6 281.1L353.9 279.4L357.1 277.1L356.6 275.9L352.7 276.3L349.1 277.3L345.4 277.9L342.0 279.6L338.2 280.1L334.9 282.0L331.6 283.9L328.9 287.3L325.8 289.7Z" fill="#761a58"/><path d="M344.4 201.4L348.3 202.2L352.4 203.3L355.9 201.5L359.3 199.3L363.0 199.0L366.9 199.2L370.6 198.4L373.9 196.1L377.6 195.2L381.2 194.0L384.9 193.3L388.7 193.2L392.3 191.9L392.0 190.5L388.1 190.1L384.2 189.5L380.6 190.7L376.7 190.3L373.0 191.2L369.5 193.0L366.1 195.1L362.4 195.7L358.8 196.8L355.2 197.9L351.7 199.7L348.1 200.8L344.2 200.4Z" fill="#64164e"/><path d="M194.6 289.5L198.3 289.6L201.8 288.4L205.3 287.4L208.9 287.2L212.3 285.6L216.0 285.7L219.2 283.2L222.8 282.7L226.3 281.9L229.8 280.8L232.9 278.3L236.0 275.7L235.6 274.1L232.0 274.9L228.8 276.7L225.7 279.6L221.7 278.2L218.3 279.6L214.7 280.3L210.9 279.8L207.7 282.0L204.6 284.6L201.2 286.2L197.9 287.6L194.2 288.0Z" fill="#8a1e64"/><path d="M224.7 283.5L228.4 283.2L232.0 285.2L235.7 285.7L239.3 285.0L243.0 285.9L246.6 285.0L250.3 286.4L253.9 284.0L257.6 283.8L261.2 282.5L264.9 283.5L268.5 281.4L268.5 280.7L264.9 280.4L261.2 280.3L257.6 279.8L253.9 281.0L250.3 280.9L246.6 282.6L243.0 283.4L239.3 282.5L235.7 282.7L232.0 281.3L228.4 281.2L224.7 282.3Z" fill="#8a1e64"/><path d="M279.9 311.2L284.1 310.9L287.8 308.7L291.8 307.6L295.4 305.3L295.0 304.0L290.9 304.8L286.4 304.4L282.5 305.9L279.6 310.5Z" fill="#761a58"/><path d="M244.8 220.0L248.3 219.1L251.7 218.2L255.0 216.5L258.7 216.8L262.2 216.4L266.0 216.8L269.2 214.8L273.0 215.4L276.6 215.6L280.2 215.2L284.0 216.1L287.2 214.0L290.8 213.6L293.9 211.2L293.7 210.2L289.8 209.3L286.4 210.4L282.7 209.8L279.4 211.7L275.7 211.0L271.9 210.5L268.3 210.6L264.6 210.3L261.4 212.5L257.7 212.1L254.0 211.8L250.6 212.8L247.6 216.0L244.6 219.1Z" fill="#761a58"/><path d="M246.8 350.0L250.6 349.6L254.2 348.8L257.8 348.0L260.4 344.6L263.9 343.6L267.4 342.6L270.5 340.5L273.7 338.6L277.3 337.9L280.4 335.7L283.2 333.0L286.5 331.3L286.1 330.4L281.9 329.5L278.1 329.8L275.1 332.1L271.7 333.6L267.5 332.8L264.5 335.1L261.5 337.4L258.9 340.8L255.5 342.1L252.9 345.6L248.8 344.9L246.5 349.1Z" fill="#761a58"/><path d="M289.8 220.8L293.8 222.0L297.4 221.4L301.1 221.4L304.5 219.9L308.4 220.8L312.0 220.0L315.2 217.6L319.1 218.4L322.6 217.2L325.9 215.4L329.5 214.5L329.1 212.5L325.4 212.8L321.7 212.6L317.6 210.9L314.1 211.6L310.3 211.3L306.8 212.7L303.7 215.5L300.1 216.0L296.3 215.8L293.1 218.3L289.5 219.3Z" fill="#761a58"/><path d="M166.4 240.9L170.6 241.1L174.5 240.6L177.7 238.1L181.2 236.3L184.9 235.3L188.0 232.6L191.3 230.3L195.0 229.2L194.7 228.3L190.4 227.9L186.6 228.8L183.1 230.6L180.2 233.8L176.2 234.0L173.0 236.6L169.8 239.1L166.0 239.8Z" fill="#761a58"/><path d="M243.7 205.7L247.7 205.8L251.6 205.8L254.9 204.0L258.6 203.3L262.0 201.5L265.5 200.5L269.3 199.9L273.1 199.5L276.4 197.8L279.8 196.2L283.5 195.4L286.8 193.6L290.5 192.7L290.1 191.8L286.4 192.3L282.5 192.5L279.2 194.3L275.2 194.1L272.0 196.3L268.1 196.4L264.4 197.2L261.1 198.9L257.3 199.4L253.8 200.7L250.8 203.4L247.0 203.7L243.5 205.1Z" fill="#64164e"/><path d="M164.2 296.5L167.4 299.4L170.7 301.5L174.0 303.6L177.7 302.4L181.3 301.9L184.4 305.2L188.0 305.3L191.6 304.7L195.4 302.6L199.0 301.8L199.1 300.8L195.7 299.8L192.2 299.5L188.8 298.3L185.3 297.6L181.7 298.0L178.1 298.5L174.8 296.6L171.4 295.5L168.0 294.5L164.3 295.6Z" fill="#761a58"/><path d="M200.7 272.0L204.2 271.4L207.9 271.1L211.4 270.5L214.2 267.8L217.3 265.9L220.6 264.5L220.4 263.9L216.8 264.4L213.6 266.1L210.6 268.1L206.9 268.3L203.5 269.3L200.4 271.3Z" fill="#8a1e64"/><path d="M178.4 207.9L181.9 209.5L185.5 210.8L189.0 210.9L192.6 210.5L196.2 209.7L199.7 211.5L203.3 210.3L206.8 212.4L210.4 212.2L213.9 212.2L217.5 211.4L221.1 210.4L224.6 211.1L228.2 211.5L228.2 210.5L224.7 208.1L221.1 206.8L217.6 207.0L214.0 208.0L210.4 208.0L206.9 205.2L203.4 205.9L199.8 205.0L196.2 205.9L192.7 204.6L189.1 205.9L185.5 206.1L182.0 206.5L178.4 206.4Z" fill="#64164e"/><path d="M286.5 238.7L290.8 239.0L294.3 237.5L296.7 234.0L300.7 233.7L303.8 231.6L306.4 228.4L310.1 227.5L313.5 226.0L316.7 224.1L319.8 221.8L319.0 220.4L314.4 219.5L310.7 220.6L307.4 222.3L304.3 224.3L301.1 226.3L297.3 227.0L294.9 230.6L291.4 232.0L289.0 235.3L285.5 236.8Z" fill="#761a58"/><path d="M210.4 269.1L214.0 269.0L217.0 266.6L221.0 267.5L224.4 266.8L227.4 264.6L230.1 261.3L229.8 260.3L226.1 260.4L222.8 261.7L219.0 261.2L216.1 263.7L213.0 265.7L210.1 268.3Z" fill="#8a1e64"/><path d="M190.5 213.6L194.1 213.0L197.6 212.4L201.0 211.4L204.4 210.4L207.4 208.3L210.8 207.1L213.5 204.5L217.1 204.0L220.0 201.6L223.1 199.9L225.9 197.2L228.9 195.4L232.2 194.0L235.5 192.7L235.2 192.0L231.9 193.1L228.4 194.1L225.4 195.9L222.0 197.1L219.5 200.3L216.1 201.5L212.7 202.4L209.7 204.5L206.4 205.8L203.9 208.9L200.3 209.5L197.1 211.1L193.7 212.1L190.2 212.9Z" fill="#64164e"/><path d="M248.8 287.0L252.2 285.7L256.2 286.2L259.2 284.0L262.7 283.0L265.9 281.4L269.3 280.2L272.1 277.7L275.3 276.0L274.9 274.8L271.0 274.9L267.1 274.8L263.5 275.2L260.3 277.0L257.5 279.7L254.3 281.3L250.9 282.4L248.2 285.4Z" fill="#8a1e64"/><path d="M279.7 257.1L283.5 257.8L287.1 257.4L291.0 258.4L294.5 257.5L298.1 257.5L301.4 255.7L304.8 254.5L308.3 253.8L307.9 252.3L304.3 252.5L300.5 252.1L297.3 254.1L293.7 254.4L289.7 252.9L286.3 254.0L282.9 254.9L279.4 255.7Z" fill="#8a1e64"/><path d="M159.5 242.6L163.8 243.4L168.1 244.0L171.5 241.4L175.4 240.4L179.0 238.5L182.3 235.0L186.2 234.0L185.8 232.6L181.6 232.4L177.5 232.5L174.0 234.7L170.6 237.5L166.8 239.0L162.7 238.9L159.2 241.4Z" fill="#761a58"/><path d="M306.5 282.5L310.9 281.8L315.7 281.8L320.2 281.2L322.6 275.8L322.2 274.8L317.4 274.8L312.9 275.4L308.7 276.7L306.0 281.5Z" fill="#8a1e64"/><path d="M229.6 327.1L232.7 325.2L236.3 324.3L240.1 324.2L243.9 324.1L247.8 324.3L251.2 322.8L254.6 321.6L257.7 319.6L261.3 318.7L264.7 317.5L267.7 315.1L270.9 313.0L270.7 312.5L266.8 312.6L263.6 314.3L260.3 316.0L257.0 317.4L253.4 318.3L249.8 319.0L246.5 320.6L243.0 321.4L239.2 321.7L235.8 322.9L232.3 324.1L229.4 326.6Z" fill="#761a58"/><path d="M253.3 217.2L257.4 219.3L260.4 216.7L263.8 215.8L267.3 215.1L270.6 213.7L273.8 212.0L277.0 210.2L280.8 210.7L284.1 209.3L283.9 208.5L279.7 206.1L276.3 207.2L272.5 206.3L269.2 207.9L266.0 209.7L263.1 212.7L259.7 213.7L256.3 214.6L253.1 216.3Z" fill="#761a58"/><path d="M283.7 240.1L287.8 240.0L291.7 239.5L294.8 236.7L298.6 235.7L301.8 233.1L305.4 231.6L308.6 229.0L311.8 226.5L311.6 225.8L307.9 227.2L304.5 229.2L301.3 231.7L297.9 233.6L294.3 235.2L291.0 237.5L287.4 239.0L283.5 239.7Z" fill="#761a58"/><path d="M223.0 287.8L227.1 287.8L231.2 287.0L235.2 286.1L239.3 287.5L243.3 287.3L243.3 286.8L239.3 285.1L235.3 284.5L231.2 285.1L227.1 285.9L223.0 287.3Z" fill="#8a1e64"/><path d="M346.2 275.1L350.8 275.9L354.5 274.5L357.5 271.5L360.1 267.6L359.6 266.4L356.0 267.9L352.7 270.1L349.5 272.7L345.8 274.2Z" fill="#761a58"/><path d="M229.5 297.6L233.5 298.3L237.3 297.9L240.7 295.9L244.3 295.1L248.0 294.0L251.8 293.8L255.6 293.7L259.2 292.7L263.2 292.8L266.7 291.6L270.2 290.0L269.9 288.8L266.0 289.0L262.1 289.0L258.4 289.5L254.1 288.1L250.4 288.5L247.0 290.5L243.4 291.6L239.8 292.5L236.1 293.2L233.0 296.1L229.1 296.3Z" fill="#8a1e64"/><path d="M349.1 203.3L353.0 202.2L356.4 200.2L359.5 197.7L362.8 195.5L365.7 192.7L364.9 191.4L360.6 191.8L357.9 194.9L353.8 195.7L350.9 198.6L348.5 202.3Z" fill="#64164e"/><path d="M287.9 256.1L291.6 255.6L295.5 255.9L299.2 254.7L303.1 256.3L306.9 256.0L310.6 254.3L314.5 255.6L318.4 255.6L322.2 256.0L326.0 256.0L329.8 255.5L329.7 254.0L325.8 252.9L322.0 253.2L318.1 251.4L314.2 251.3L310.4 251.4L306.6 251.0L302.8 250.9L298.9 250.8L295.2 252.6L291.5 253.4L287.8 254.7Z" fill="#8a1e64"/><path d="M201.4 315.5L205.1 316.6L209.0 315.8L212.9 315.4L216.7 315.4L220.4 317.1L224.3 316.6L228.2 316.2L232.0 316.3L235.9 315.3L236.0 314.0L232.3 312.4L228.4 313.6L224.7 311.3L220.9 311.2L217.1 311.3L213.1 312.4L209.3 312.6L205.3 313.7L201.4 314.8Z" fill="#761a58"/><path d="M251.8 319.9L255.5 320.7L259.0 319.1L262.7 320.2L266.3 319.5L269.9 319.1L273.5 318.7L277.2 319.1L280.8 317.6L284.5 318.8L288.2 319.4L291.8 319.4L295.3 317.4L295.2 316.6L291.7 318.0L288.0 316.6L284.3 316.0L280.6 315.5L276.9 315.4L273.4 316.4L269.7 316.5L266.2 317.4L262.6 318.1L258.9 317.1L255.3 318.5L251.7 318.9Z" fill="#761a58"/><path d="M270.1 247.7L273.6 247.3L277.3 248.4L280.9 248.8L284.5 249.2L288.1 249.2L291.6 247.9L295.2 247.9L298.8 247.6L302.4 248.4L306.0 248.2L309.6 248.2L313.2 248.5L313.2 247.8L309.5 245.9L305.9 244.9L302.2 243.0L298.7 243.6L295.0 242.7L291.4 243.0L287.9 243.6L284.4 246.1L280.7 244.3L277.1 244.9L273.5 245.0L270.0 246.6Z" fill="#8a1e64"/><path d="M252.4 311.0L256.2 311.6L260.0 310.6L263.8 309.8L267.5 309.6L271.3 311.4L275.1 310.1L278.8 310.8L282.6 311.0L286.4 309.8L286.4 308.4L282.7 307.8L278.9 306.0L275.1 307.1L271.4 306.4L267.6 306.5L263.8 306.7L260.0 308.2L256.2 308.5L252.5 309.7Z" fill="#8a1e64"/><path d="M236.2 236.4L240.0 237.7L243.9 237.8L247.7 238.6L251.5 238.2L255.4 239.2L259.2 239.2L263.1 239.5L266.9 239.4L270.7 241.0L274.6 239.5L274.6 238.8L270.8 239.5L266.9 238.2L263.1 236.9L259.3 236.6L255.5 236.1L251.6 236.4L247.7 236.5L243.9 236.5L240.1 236.2L236.2 235.8Z" fill="#8a1e64"/><path d="M307.7 245.8L312.2 246.8L315.7 244.0L319.4 242.2L322.7 238.9L322.5 237.9L318.3 238.3L314.8 240.9L310.5 240.8L307.2 244.2Z" fill="#761a58"/><path d="M201.0 267.5L204.6 267.1L208.5 269.0L212.0 268.6L215.7 269.1L219.1 266.9L222.6 265.7L226.1 264.9L229.4 262.7L233.0 262.5L236.5 261.0L236.2 259.3L232.8 260.5L229.0 259.3L225.3 259.0L221.9 260.7L218.3 261.4L214.8 262.0L211.3 263.1L207.7 263.2L204.3 265.1L200.9 266.7Z" fill="#8a1e64"/><path d="M277.2 225.6L280.7 224.7L284.6 224.5L287.5 222.5L290.5 220.6L293.5 218.9L296.8 217.6L300.8 217.6L303.1 214.4L305.8 212.0L308.6 209.9L311.7 208.3L310.9 206.8L306.9 206.8L303.7 208.4L300.0 208.8L297.2 211.0L295.0 214.3L291.3 214.8L287.8 215.7L286.0 219.7L282.6 220.8L279.6 222.7L276.3 223.9Z" fill="#761a58"/><path d="M231.7 265.6L235.9 265.7L239.7 265.0L243.7 264.9L246.9 262.7L250.3 261.0L253.7 259.2L256.9 257.1L260.3 255.4L263.0 251.9L262.6 251.1L258.8 251.7L255.0 252.5L250.8 252.2L247.6 254.4L244.5 256.7L241.1 258.6L237.8 260.5L233.9 260.9L231.1 264.1Z" fill="#8a1e64"/><path d="M231.6 233.9L235.5 234.3L239.1 233.2L242.8 232.5L246.0 230.0L249.6 229.0L253.3 228.2L253.2 227.7L249.3 227.2L245.5 227.2L242.0 228.8L238.4 230.0L235.2 232.7L231.5 233.2Z" fill="#761a58"/><path d="M309.6 217.1L312.8 215.0L316.6 213.9L319.9 212.0L323.1 209.9L326.4 208.1L330.1 206.8L332.7 203.5L332.3 202.8L329.2 205.1L325.4 206.2L322.1 208.0L319.0 210.3L315.8 212.4L311.7 212.8L309.1 216.2Z" fill="#64164e"/><path d="M232.1 307.6L236.1 308.4L240.0 308.0L243.9 307.5L247.8 306.4L251.7 304.3L255.7 304.6L255.6 303.8L251.6 302.4L247.7 303.3L243.8 303.7L239.9 304.5L236.0 305.3L232.0 306.2Z" fill="#8a1e64"/><path d="M344.0 234.6L347.0 232.7L349.9 230.6L353.2 229.1L357.1 228.7L359.7 226.2L363.2 225.1L365.3 221.7L368.4 219.9L372.5 219.7L375.5 217.9L379.0 216.8L381.8 214.6L383.9 211.1L383.3 210.1L380.6 212.4L377.6 214.5L374.0 215.4L369.8 215.2L366.6 216.8L364.0 219.5L361.2 221.6L358.3 223.8L354.6 224.5L351.0 225.5L347.9 227.3L346.1 231.2L343.4 233.5Z" fill="#64164e"/><path d="M296.3 195.3L299.8 194.3L303.5 193.9L306.7 191.9L310.5 192.0L313.8 190.2L317.4 189.4L321.2 189.7L324.6 188.0L328.1 187.1L327.9 186.2L324.0 185.7L320.2 185.5L316.6 185.9L313.2 187.7L309.7 188.5L306.0 188.8L302.6 190.1L299.3 192.1L296.1 194.5Z" fill="#64164e"/><path d="M184.0 297.0L187.6 299.3L191.5 299.1L195.3 299.1L199.0 299.7L202.8 299.7L206.6 300.1L206.8 298.0L203.1 296.6L199.5 293.8L195.7 293.4L191.9 294.3L188.1 293.5L184.1 295.9Z" fill="#761a58"/><path d="M256.0 302.8L259.5 302.0L263.2 303.2L266.7 303.0L270.3 303.3L273.7 301.6L277.3 301.9L280.8 301.7L284.4 301.9L287.8 299.8L291.2 298.1L294.8 298.4L298.3 297.9L301.8 297.2L301.7 296.0L298.2 296.3L294.6 295.5L291.0 295.6L287.5 296.0L284.0 297.1L280.6 298.8L276.9 297.1L273.5 298.3L270.0 299.3L266.5 300.2L263.0 300.9L259.4 300.0L256.0 301.6Z" fill="#8a1e64"/><path d="M178.4 274.7L182.4 276.5L186.0 275.3L189.7 274.6L193.6 275.8L197.4 276.7L201.3 277.8L205.0 277.0L208.7 276.4L212.3 274.3L216.0 273.5L219.7 272.9L223.3 271.4L223.3 270.5L219.3 268.7L215.8 270.9L211.9 269.8L208.2 270.7L204.4 270.6L200.7 270.5L196.8 269.8L193.0 269.2L189.3 270.2L185.6 270.4L182.0 272.2L178.3 273.4Z" fill="#8a1e64"/><path d="M302.6 290.9L306.4 290.3L309.7 288.5L313.1 286.8L316.1 284.4L319.4 282.5L322.7 280.7L326.3 279.6L329.5 277.4L332.9 276.0L336.5 274.8L336.3 274.1L332.1 274.1L328.8 275.8L325.0 276.6L321.9 278.9L318.8 281.1L315.2 282.2L311.8 283.9L309.1 287.1L305.7 288.7L302.3 290.2Z" fill="#8a1e64"/><path d="M269.5 293.8L272.8 292.0L276.7 290.9L280.6 290.1L282.6 286.0L286.4 284.9L289.7 283.0L292.9 280.8L296.0 278.5L298.6 275.5L300.9 272.0L300.4 271.1L297.0 272.9L293.0 273.6L289.7 275.6L287.1 278.7L283.6 280.2L280.3 282.2L276.5 283.4L274.6 287.5L270.4 288.1L268.4 292.0Z" fill="#8a1e64"/><path d="M260.5 217.9L264.1 218.5L267.6 218.3L271.2 218.2L274.8 218.1L278.4 219.2L282.0 218.6L285.5 218.8L289.0 217.5L292.6 218.0L296.2 218.3L299.7 217.1L303.1 215.6L306.6 214.8L306.6 214.4L303.0 214.3L299.5 215.5L296.0 216.1L292.4 215.7L288.9 216.0L285.2 215.5L281.8 217.0L278.2 216.1L274.5 215.6L271.0 215.6L267.5 216.8L264.0 217.4L260.4 217.2Z" fill="#761a58"/><path d="M277.5 314.2L281.2 313.8L284.6 312.8L288.1 311.6L291.5 310.6L294.2 306.9L293.9 305.8L290.4 306.7L287.3 308.9L283.6 309.3L279.9 309.6L277.1 312.8Z" fill="#761a58"/><path d="M201.3 242.5L205.5 241.5L209.8 240.9L213.7 238.8L217.9 237.7L217.7 237.1L213.1 236.8L208.9 237.8L205.0 239.6L201.2 242.0Z" fill="#761a58"/><path d="M324.2 231.7L327.9 231.6L331.9 232.6L335.8 233.4L339.4 232.9L343.1 232.8L346.5 231.3L350.3 231.6L353.9 231.1L357.3 229.6L360.8 228.4L364.3 227.3L367.9 226.5L371.3 225.2L371.2 224.6L367.4 224.4L363.6 224.2L360.1 224.9L356.8 227.0L353.0 227.1L349.4 227.5L345.9 228.4L342.5 229.9L338.9 230.9L335.2 230.8L331.4 230.4L327.6 230.3L324.0 230.8Z" fill="#761a58"/><path d="M237.5 298.4L240.9 297.5L244.1 296.1L247.0 294.1L251.1 294.6L254.2 292.9L257.6 292.0L259.9 288.5L262.2 285.2L261.6 284.0L258.5 285.5L255.1 286.5L252.0 288.2L248.1 288.2L244.9 289.5L242.0 291.6L239.4 294.3L237.1 297.7Z" fill="#8a1e64"/><path d="M190.1 299.2L193.8 298.6L197.7 298.8L201.5 298.5L204.9 296.3L208.8 296.4L212.5 295.6L216.3 295.1L219.7 293.3L223.4 292.3L226.6 289.4L226.5 288.6L222.9 290.0L218.7 288.7L215.1 289.6L211.4 290.7L207.9 292.2L204.2 293.2L200.3 293.1L197.0 295.6L193.4 296.6L189.8 298.1Z" fill="#761a58"/><path d="M249.9 331.7L253.9 331.5L257.9 331.5L261.4 329.2L265.4 329.6L269.5 329.7L272.7 326.3L272.3 324.8L268.6 326.1L264.6 326.0L260.6 326.1L256.9 327.2L253.3 328.9L249.6 330.2Z" fill="#761a58"/><path d="M359.7 213.7L364.5 214.7L368.5 213.8L373.1 214.2L375.7 209.5L375.4 208.6L371.1 208.8L367.0 209.6L362.6 209.5L359.1 212.1Z" fill="#64164e"/><path d="M175.7 203.3L179.5 202.5L183.2 201.2L186.7 199.1L190.8 199.7L194.6 199.1L194.5 198.5L190.4 197.4L186.3 196.7L182.7 198.3L179.2 200.6L175.6 202.3Z" fill="#64164e"/><path d="M247.6 329.1L251.6 329.5L255.6 330.4L259.6 329.7L263.5 328.4L267.5 329.7L271.5 328.3L275.4 326.9L275.4 325.9L271.4 324.4L267.4 324.4L263.5 323.4L259.5 324.8L255.6 325.8L251.6 326.1L247.6 327.7Z" fill="#761a58"/><path d="M254.0 232.1L257.9 231.4L261.6 230.3L265.6 229.7L268.7 227.4L272.4 226.2L274.9 222.6L274.4 221.7L270.7 222.8L267.0 223.9L264.2 226.8L260.6 228.2L256.6 228.8L253.7 231.5Z" fill="#761a58"/><path d="M285.8 206.2L289.5 205.7L292.9 204.6L296.7 204.1L299.5 201.6L302.5 199.4L305.7 197.9L308.3 194.7L311.7 193.6L311.3 192.7L307.6 193.3L304.5 195.2L301.4 197.0L298.6 199.7L295.3 201.0L291.9 202.2L288.7 203.9L285.5 205.6Z" fill="#64164e"/><path d="M185.7 274.9L189.7 275.3L193.7 275.7L197.6 274.4L201.7 274.7L205.6 273.7L209.5 272.4L209.3 270.9L205.3 271.1L201.4 272.1L197.3 270.8L193.4 272.0L189.3 271.0L185.5 273.5Z" fill="#761a58"/><path d="M231.5 336.6L235.3 336.4L239.3 337.9L243.0 336.8L246.8 335.8L246.7 335.0L242.8 334.1L238.9 334.0L235.1 333.9L231.4 335.9Z" fill="#761a58"/><path d="M311.8 299.9L315.9 301.0L319.7 300.7L323.5 300.3L327.0 298.9L330.9 298.8L334.0 295.7L337.7 294.8L341.3 294.0L341.0 292.7L337.2 292.8L332.9 291.4L329.4 292.7L325.7 293.7L322.5 296.1L318.6 296.0L315.0 297.5L311.4 298.6Z" fill="#761a58"/><path d="M309.9 276.6L313.1 275.0L316.6 274.2L320.2 274.2L323.8 273.8L327.1 272.2L330.2 270.1L333.7 269.7L337.3 269.3L340.6 267.9L344.2 267.8L347.2 265.2L350.6 264.2L350.3 263.1L346.8 263.7L343.6 265.3L340.0 265.6L336.7 267.2L333.2 267.9L329.6 268.1L326.2 269.0L323.2 271.4L319.6 271.6L315.8 271.3L312.8 273.7L309.6 275.7Z" fill="#761a58"/><path d="M217.7 317.2L221.5 316.9L225.3 317.1L229.0 318.2L232.8 317.8L236.6 316.9L240.4 317.0L244.1 317.3L247.9 316.1L251.7 316.5L255.5 316.5L259.2 316.4L259.2 315.8L255.5 313.7L251.7 314.6L247.9 313.9L244.2 313.4L240.4 312.8L236.6 313.5L232.8 314.0L229.1 315.9L225.3 314.4L221.5 315.0L217.7 316.2Z" fill="#761a58"/><path d="M334.1 258.6L337.3 256.4L340.2 254.0L343.2 251.7L346.2 249.3L350.6 248.5L352.1 244.4L354.8 241.7L358.3 239.9L360.9 237.1L363.3 234.0L362.5 233.0L358.5 234.3L355.4 236.5L352.1 238.4L349.8 241.6L346.9 244.1L344.1 246.8L340.3 248.2L337.2 250.4L334.9 253.7L333.5 257.9Z" fill="#761a58"/><path d="M219.0 288.2L222.5 288.0L226.3 288.9L229.9 289.0L233.5 288.9L236.9 287.3L240.5 287.4L243.9 285.4L247.5 285.4L251.3 286.7L254.6 284.0L257.9 282.1L261.5 282.1L261.4 280.7L257.6 280.0L254.2 281.3L250.7 282.2L247.1 282.2L243.5 282.6L239.8 281.8L236.5 284.5L232.9 284.6L229.5 286.0L225.7 284.3L222.3 285.9L218.8 287.3Z" fill="#8a1e64"/><path d="M329.3 267.3L333.1 267.6L336.8 267.3L339.8 265.4L342.9 263.6L346.9 264.4L349.8 262.1L353.1 260.8L356.6 260.1L359.8 258.7L362.7 256.5L362.4 255.8L358.8 256.1L355.4 257.1L352.4 259.0L349.0 260.1L345.4 260.3L342.1 261.5L338.5 261.9L335.9 264.9L332.6 266.1L329.0 266.7Z" fill="#761a58"/><path d="M218.1 252.1L221.5 251.4L224.8 249.7L228.5 250.3L231.9 248.7L235.6 249.5L239.0 248.3L242.7 248.9L246.0 247.3L249.3 245.3L252.5 243.5L256.1 243.1L255.9 242.0L252.2 241.3L248.7 242.2L245.4 243.6L241.6 242.4L238.2 243.8L234.8 244.8L231.3 245.6L227.8 246.0L224.3 246.5L220.9 247.5L217.8 250.6Z" fill="#8a1e64"/><path d="M187.5 207.5L191.1 207.1L194.6 206.7L198.2 207.5L201.8 209.1L205.3 209.2L208.9 210.0L212.4 210.9L216.0 211.2L219.6 211.9L223.1 212.6L226.7 212.0L230.3 211.7L233.8 211.5L233.8 209.9L230.3 209.8L226.7 209.4L223.1 208.5L219.6 207.3L216.0 206.3L212.5 204.6L208.9 204.4L205.3 204.5L201.8 203.0L198.2 203.1L194.6 202.9L191.1 204.6L187.5 206.3Z" fill="#64164e"/><path d="M143.3 233.1L147.2 233.5L150.6 231.4L154.3 230.5L157.9 229.4L161.8 229.4L165.7 229.7L169.2 227.9L172.9 227.5L172.8 226.9L168.9 226.5L165.3 228.0L161.4 227.5L157.4 226.9L153.4 226.3L150.3 229.7L146.8 231.6L143.1 232.4Z" fill="#64164e"/><path d="M207.4 245.7L211.2 246.7L214.8 246.2L218.4 246.6L222.1 246.7L225.8 247.2L229.4 246.6L233.1 246.6L236.7 246.2L240.2 245.3L243.8 244.9L247.5 245.1L251.0 243.9L250.9 243.0L247.2 242.6L243.4 241.3L239.6 239.7L236.0 240.3L232.6 242.8L228.9 242.5L225.1 241.1L221.7 242.9L217.8 241.2L214.5 243.8L210.9 244.1L207.3 245.0Z" fill="#8a1e64"/><path d="M154.2 246.1L158.3 247.8L162.1 247.2L166.0 246.7L169.8 246.1L173.6 245.2L177.6 246.4L181.4 244.5L181.2 242.7L177.2 241.8L173.3 242.2L169.4 242.0L165.7 243.4L161.7 242.5L157.8 242.5L154.1 244.8Z" fill="#761a58"/><path d="M237.1 251.8L240.2 249.8L243.6 248.5L247.3 247.8L250.2 245.3L253.8 244.5L257.2 243.1L260.1 240.5L263.4 239.0L262.9 237.9L258.8 237.8L255.3 239.0L251.8 240.2L248.7 242.1L245.2 243.3L242.4 245.9L239.1 247.5L236.6 250.7Z" fill="#8a1e64"/><path d="M190.7 272.1L194.4 273.3L198.1 272.8L201.8 272.5L205.5 271.7L209.2 271.2L209.2 270.1L205.4 268.1L201.6 267.3L197.9 266.0L194.3 268.5L190.6 271.0Z" fill="#761a58"/><path d="M293.9 282.8L297.8 282.0L301.0 279.9L304.1 277.8L307.2 275.7L311.4 275.3L315.0 273.9L318.8 273.0L322.0 270.9L325.2 268.9L327.6 265.6L330.3 262.8L332.7 259.4L332.3 258.8L329.3 261.0L326.8 264.3L323.6 266.2L320.3 268.1L317.0 269.9L313.9 272.2L309.8 272.6L306.1 273.9L302.8 275.7L300.2 278.7L296.9 280.5L293.5 282.2Z" fill="#8a1e64"/><path d="M180.8 213.4L184.5 214.7L188.3 214.1L192.0 213.7L195.7 212.1L199.5 212.9L203.2 213.3L207.0 214.1L210.7 213.4L214.5 212.6L214.5 212.2L210.7 212.3L207.0 211.6L203.2 209.8L199.5 209.3L195.7 209.1L192.0 210.3L188.3 212.4L184.5 212.6L180.8 212.8Z" fill="#64164e"/><path d="M244.3 244.0L247.8 246.0L251.4 244.7L254.9 245.9L258.4 244.9L262.0 244.8L265.5 246.5L269.0 246.2L272.5 245.9L276.1 245.7L279.6 244.5L283.2 244.4L286.7 243.9L290.2 242.8L290.3 241.9L286.8 240.7L283.2 241.3L279.7 240.9L276.2 240.9L272.6 241.6L269.1 242.0L265.6 241.3L262.0 241.5L258.5 241.4L254.9 242.8L251.4 242.7L247.9 242.7L244.4 242.9Z" fill="#8a1e64"/><path d="M275.3 330.3L280.3 331.6L283.7 330.5L286.5 328.1L290.1 327.2L291.9 323.2L291.4 322.3L286.8 321.5L284.5 324.7L281.0 325.8L277.3 326.6L274.7 329.2Z" fill="#761a58"/><path d="M182.6 228.6L186.1 229.8L189.6 229.8L192.9 232.3L196.5 232.2L200.1 232.4L203.6 232.7L207.3 231.7L210.9 230.6L214.5 231.1L214.6 230.1L211.3 227.4L207.7 226.8L204.3 225.7L200.6 226.5L197.1 226.6L193.7 224.0L190.0 225.5L186.4 226.7L182.7 227.5Z" fill="#761a58"/><path d="M265.5 299.7L269.6 300.9L273.3 299.3L277.4 300.5L281.2 299.4L285.1 299.4L289.0 298.8L288.9 298.0L285.0 298.3L281.0 297.8L277.1 297.7L273.1 297.8L269.3 298.5L265.4 299.1Z" fill="#8a1e64"/><path d="M213.9 236.5L217.5 238.0L221.2 238.5L224.9 238.3L228.5 239.1L232.2 239.1L232.2 238.1L228.6 237.3L224.9 235.4L221.3 236.0L217.6 235.2L213.9 235.8Z" fill="#761a58"/><path d="M353.7 215.9L357.6 214.5L360.7 212.2L363.1 208.9L364.9 205.0L368.7 203.5L373.2 202.9L375.0 198.9L376.3 194.4L379.1 191.7L378.5 191.0L374.7 192.5L371.7 195.0L368.8 197.5L365.9 200.1L362.2 201.8L359.4 204.4L357.4 208.2L354.6 210.8L352.7 214.6Z" fill="#64164e"/><path d="M271.8 343.8L275.2 342.1L278.5 340.5L282.6 340.4L285.4 337.7L289.2 337.0L292.6 335.6L295.7 333.4L300.0 333.8L303.0 331.3L306.0 329.1L309.3 327.3L312.8 326.0L316.1 324.3L315.5 323.1L311.9 324.2L307.7 323.9L304.4 325.6L301.3 327.8L297.2 327.9L294.3 330.3L290.1 330.2L287.4 333.1L284.1 334.9L280.5 335.9L277.5 338.2L274.2 340.1L271.4 342.8Z" fill="#761a58"/><path d="M258.0 294.1L261.9 293.6L265.8 293.0L269.7 293.8L273.6 293.4L277.5 293.1L281.4 291.8L285.3 291.7L289.1 291.5L289.2 290.9L285.3 290.3L281.4 290.0L277.5 290.2L273.6 290.9L269.7 291.6L265.8 291.8L261.9 291.7L258.0 293.6Z" fill="#8a1e64"/><path d="M312.5 242.7L316.4 243.9L320.0 243.8L323.4 243.0L326.9 242.6L330.2 240.7L333.8 240.7L337.5 241.2L341.0 240.7L340.7 239.5L336.9 238.1L333.3 238.2L329.6 237.8L326.1 238.2L322.7 239.2L319.1 239.3L315.7 240.5L312.4 241.7Z" fill="#761a58"/></g><g fill="#6a1c58"><path d="M166.2 290.3L169.7 289.6L173.1 288.3L176.7 288.9L180.3 288.8L183.7 287.7L187.4 288.5L190.9 288.6L194.6 289.6L198.1 289.1L201.5 287.7L204.9 286.0L208.3 284.7L211.9 285.2L215.5 285.4L219.0 284.4L222.5 283.9L226.0 283.3L225.9 282.8L222.4 282.9L218.8 283.1L215.4 284.2L211.8 283.8L208.1 282.6L204.7 284.0L201.3 285.4L197.9 287.1L194.4 287.8L190.8 287.6L187.2 286.7L183.6 285.8L180.2 287.6L176.6 287.3L173.1 287.2L169.6 288.9L166.2 289.9Z"/><path d="M197.4 218.4L201.0 218.2L204.6 219.3L208.2 219.3L211.9 218.9L215.5 218.3L219.2 218.3L222.8 219.3L226.4 218.6L230.0 219.7L233.7 219.1L237.3 219.0L241.0 219.0L244.6 219.1L248.2 219.5L251.8 219.5L255.5 219.5L259.1 219.8L259.1 219.6L255.5 218.6L251.9 218.2L248.3 217.9L244.6 218.0L241.0 217.8L237.4 217.4L233.7 217.9L230.1 218.6L226.5 217.3L222.8 217.9L219.2 216.9L215.6 216.7L212.0 217.2L208.3 218.4L204.6 218.6L201.0 217.1L197.4 218.1Z"/><path d="M162.9 189.0L166.5 188.7L169.8 190.1L173.4 190.2L176.7 191.9L180.3 191.5L183.9 191.8L187.4 191.9L191.0 191.9L194.4 192.9L198.0 192.9L201.4 193.9L204.9 194.5L208.4 195.1L211.9 195.4L215.4 196.2L215.5 195.5L212.0 194.6L208.5 194.2L205.2 192.8L201.7 192.2L198.2 191.9L194.7 191.2L191.3 190.5L187.7 190.2L184.2 189.9L180.5 190.5L177.0 189.8L173.6 189.0L170.1 188.6L166.6 187.7L163.0 188.4Z"/><path d="M252.1 343.5L255.5 341.5L258.6 339.2L261.8 337.0L264.6 334.2L267.9 332.2L271.8 331.3L275.3 329.6L279.1 328.5L279.0 328.3L275.0 329.1L271.2 330.3L267.3 331.1L264.0 333.2L261.3 336.3L258.2 338.6L254.9 340.5L251.9 343.1Z"/><path d="M286.2 205.8L290.0 205.8L293.5 204.6L296.9 202.9L300.3 201.2L303.9 200.3L307.8 200.4L311.2 198.9L314.5 196.8L317.9 195.4L321.1 193.1L321.0 192.7L317.5 194.0L314.2 195.9L310.8 197.5L307.4 199.1L303.5 198.9L299.7 199.0L296.6 201.6L293.1 202.9L289.8 204.9L286.0 205.2Z"/><path d="M295.8 201.5L299.2 200.2L302.8 199.4L306.5 199.0L309.7 196.9L312.9 194.9L316.6 194.4L320.1 193.6L323.3 191.6L326.5 189.8L330.0 188.5L333.9 188.6L337.0 186.5L340.3 185.0L343.5 182.9L346.7 181.0L350.1 179.5L353.8 179.3L356.9 176.9L356.8 176.7L353.6 178.6L349.9 179.0L346.5 180.3L343.3 182.3L340.0 184.0L336.7 185.5L333.5 187.4L329.7 187.7L326.2 188.8L323.1 191.0L319.9 193.0L316.3 193.8L312.7 194.3L309.5 196.4L306.3 198.4L302.6 198.6L299.0 199.6L295.7 201.2Z"/><path d="M249.1 248.5L252.0 246.3L255.4 244.8L258.9 243.7L261.8 241.6L265.3 240.3L268.8 239.2L271.9 237.4L275.3 236.1L278.1 233.5L281.7 232.6L284.7 230.7L288.4 229.8L291.7 228.4L294.2 225.4L297.7 224.3L300.6 222.0L300.3 221.5L297.3 223.5L293.8 224.5L290.9 226.8L287.5 228.1L283.9 229.2L281.0 231.4L277.5 232.4L274.4 234.3L271.3 236.3L268.1 238.0L264.5 238.8L261.3 240.5L258.2 242.4L254.8 243.7L251.5 245.2L248.9 248.0Z"/><path d="M197.0 242.4L200.3 240.9L203.4 238.8L206.0 235.8L208.8 233.4L211.9 231.3L214.9 229.2L218.4 227.9L221.5 226.0L224.6 224.0L228.3 223.2L231.4 221.2L234.5 219.3L237.7 217.5L241.3 216.4L241.2 216.2L237.4 216.8L234.2 218.6L230.9 220.2L227.8 222.2L224.3 223.4L220.9 224.7L217.8 226.7L214.4 228.1L211.3 230.1L208.5 232.7L205.7 235.3L202.9 237.9L200.1 240.3L196.8 242.1Z"/><path d="M274.1 309.3L277.1 307.2L280.3 305.6L283.5 304.2L286.9 303.3L290.4 302.5L294.0 302.2L297.6 301.7L300.8 300.3L304.5 300.1L307.6 298.3L311.2 297.9L314.4 296.4L317.3 294.1L320.3 292.2L323.5 290.6L326.6 288.9L326.4 288.3L323.1 289.4L319.7 290.6L316.9 293.2L314.0 295.5L310.6 296.3L307.2 297.2L303.8 298.2L300.1 298.3L296.9 299.7L293.5 300.9L289.9 301.1L286.3 301.5L283.1 302.9L279.9 304.6L276.8 306.3L274.0 308.9Z"/><path d="M295.1 283.3L298.7 282.1L301.6 279.5L304.9 277.6L307.9 275.2L310.9 272.8L314.0 270.7L317.6 269.3L320.8 267.2L324.1 265.5L323.9 265.0L320.3 266.3L316.7 267.6L313.5 269.6L309.9 270.8L307.2 273.8L304.1 276.1L301.0 278.4L298.0 280.8L294.9 282.8Z"/><path d="M226.3 268.1L229.3 266.0L232.9 265.1L236.8 264.9L239.4 262.0L242.6 260.2L245.8 258.7L248.6 256.0L251.2 253.2L254.3 251.2L254.0 250.7L250.8 252.3L248.0 254.9L245.2 257.3L241.9 258.9L238.7 260.6L235.7 262.6L232.1 263.6L228.6 264.7L226.0 267.5Z"/><path d="M306.6 309.7L310.7 309.6L314.7 309.3L318.5 308.4L322.3 307.6L325.9 306.1L329.4 304.6L332.8 302.8L336.0 300.3L339.7 299.4L339.7 299.2L335.7 299.7L332.5 302.1L328.9 303.5L325.4 304.9L321.8 306.3L318.2 307.6L314.3 308.2L310.5 309.0L306.5 309.4Z"/><path d="M260.7 230.3L264.0 229.2L267.5 228.8L270.8 227.6L274.1 226.4L277.7 226.0L280.9 224.5L284.5 224.4L287.5 222.3L290.7 220.7L293.8 218.9L297.4 218.7L301.0 218.6L304.7 218.6L307.9 217.0L311.1 215.7L314.3 213.9L314.2 213.8L310.9 214.8L307.6 216.0L304.4 217.6L300.7 217.5L297.0 217.1L293.5 217.9L290.5 219.9L287.2 221.2L284.1 223.2L280.5 223.1L277.3 224.7L273.7 225.0L270.5 226.6L267.2 227.7L263.8 228.4L260.6 230.1Z"/><path d="M240.6 260.0L244.1 260.6L247.6 259.6L251.1 260.0L254.6 259.4L258.1 260.0L261.6 258.6L265.1 258.1L268.6 258.0L272.2 258.4L275.7 257.5L279.2 257.5L282.7 257.7L286.2 258.5L289.7 257.7L293.2 258.1L296.7 257.8L300.2 259.0L303.8 258.7L303.8 258.4L300.2 258.2L296.7 257.0L293.2 257.2L289.7 256.4L286.2 257.5L282.7 256.0L279.2 256.4L275.6 256.4L272.1 256.6L268.6 256.0L265.1 256.5L261.6 257.1L258.1 258.0L254.6 258.3L251.1 259.0L247.6 258.6L244.1 260.1L240.6 259.6Z"/><path d="M171.2 278.8L174.7 277.4L178.2 275.9L181.7 274.4L185.3 273.3L188.7 271.4L192.6 271.1L196.1 269.6L199.4 267.6L203.0 266.7L206.6 265.4L206.5 265.1L202.9 266.3L199.1 266.8L195.7 268.6L192.3 270.4L188.3 270.2L185.0 272.2L181.4 273.4L178.1 275.4L174.6 277.0L171.1 278.6Z"/><path d="M251.7 332.8L255.4 333.5L259.1 334.0L262.8 333.3L266.5 333.7L270.2 334.6L273.9 334.8L277.5 333.9L281.2 333.6L284.9 333.8L288.6 333.1L292.2 333.5L295.9 332.1L299.6 333.1L303.3 333.9L303.3 333.7L299.6 332.7L295.9 331.4L292.2 332.5L288.5 331.8L284.9 332.8L281.2 332.7L277.5 333.0L273.8 333.9L270.2 333.6L266.5 332.6L262.8 332.7L259.1 333.3L255.4 332.8L251.7 332.4Z"/><path d="M230.1 207.9L233.8 208.4L237.4 208.5L241.1 207.8L244.7 208.9L248.3 210.9L252.0 209.7L255.6 210.2L259.3 209.7L262.9 210.6L266.6 211.3L270.3 210.2L273.9 210.7L277.6 210.5L277.6 209.9L274.0 209.7L270.4 208.7L266.7 209.6L263.0 209.4L259.4 208.3L255.7 208.8L252.1 207.6L248.4 208.4L244.8 207.4L241.2 206.5L237.5 207.3L233.8 207.7L230.1 207.5Z"/><path d="M190.2 251.8L193.8 252.3L197.6 252.4L200.9 254.2L204.7 254.0L208.5 253.7L211.9 255.6L215.3 257.0L218.9 257.9L222.6 258.1L226.0 259.8L229.7 260.0L233.2 260.9L236.8 261.9L240.7 261.1L244.1 262.7L247.7 263.2L251.5 263.2L255.0 264.3L255.1 263.9L251.6 262.3L248.0 262.0L244.3 261.6L240.9 260.0L237.1 260.2L233.5 259.4L230.0 258.1L226.2 258.6L222.9 256.6L219.1 256.6L215.7 255.1L212.2 253.8L208.7 252.5L204.9 253.2L201.2 252.9L197.7 251.5L193.9 251.8L190.2 251.6Z"/><path d="M302.5 212.4L305.3 209.8L308.4 207.7L312.1 206.6L315.4 204.8L318.2 202.1L321.0 199.5L324.0 197.1L327.3 195.4L330.2 192.9L333.3 190.8L336.6 189.0L340.1 187.5L339.9 187.1L336.2 188.2L332.6 189.5L329.7 192.0L326.3 193.5L322.8 195.1L319.7 197.2L317.1 200.3L314.6 203.5L311.4 205.3L307.6 206.2L304.7 208.9L302.2 211.9Z"/><path d="M262.1 314.6L265.7 313.7L269.3 312.6L273.2 312.5L276.4 310.2L280.0 309.1L283.5 307.8L286.7 305.5L290.6 305.3L294.3 304.7L298.0 303.8L297.9 303.6L294.2 304.2L290.4 304.7L286.4 304.6L283.2 306.9L279.7 308.2L276.1 309.3L272.9 311.3L269.0 311.5L265.6 313.1L262.0 314.2Z"/><path d="M224.0 243.1L227.7 242.1L231.5 241.5L235.4 241.8L239.3 243.0L242.9 241.0L246.7 240.4L250.5 240.2L254.3 239.4L257.9 237.3L257.8 237.0L254.1 238.3L250.3 238.5L246.6 239.3L242.8 240.0L239.1 241.1L235.3 240.7L231.4 240.3L227.6 240.7L224.0 242.8Z"/><path d="M320.2 304.0L324.0 302.6L327.5 301.0L331.0 299.3L333.5 296.4L335.8 293.2L338.8 290.9L341.3 287.9L344.4 285.7L346.6 282.5L349.8 280.5L353.1 278.5L356.6 276.9L356.5 276.7L352.7 278.0L349.1 279.6L345.8 281.5L343.8 285.0L340.3 286.7L338.1 290.1L335.2 292.4L333.1 295.8L330.3 298.4L327.1 300.5L323.4 301.9L320.0 303.7Z"/><path d="M270.2 208.8L273.8 209.8L277.5 210.5L281.2 209.6L284.9 208.6L288.5 209.3L292.2 208.1L295.9 209.2L299.6 208.7L303.2 208.6L306.9 208.9L306.9 208.4L303.2 207.9L299.6 207.0L295.9 208.0L292.2 206.8L288.5 207.6L284.9 207.2L281.2 207.4L277.5 208.9L273.8 208.4L270.2 208.4Z"/><path d="M217.1 296.8L220.2 294.5L224.0 294.2L227.5 293.0L230.8 291.3L234.2 289.7L237.7 288.6L240.7 286.0L244.0 284.4L247.2 282.4L250.4 280.4L254.2 280.0L254.0 279.6L250.1 279.8L246.7 281.2L243.6 283.4L240.2 284.8L237.0 286.8L233.8 288.6L230.4 290.2L226.9 291.4L223.6 293.0L220.0 293.9L217.0 296.4Z"/><path d="M324.4 202.1L327.8 200.6L330.8 198.4L333.9 196.6L336.9 194.4L340.1 192.6L342.6 189.6L346.4 188.7L349.1 186.1L352.7 184.9L355.5 182.5L358.2 179.9L361.1 177.5L364.9 176.7L368.6 175.6L370.9 172.5L370.7 172.1L368.1 174.8L364.1 175.4L360.4 176.5L357.6 178.9L354.6 181.0L352.1 183.9L348.5 185.1L345.3 187.1L341.9 188.5L339.2 191.2L336.1 193.1L333.0 195.1L330.4 197.8L327.1 199.5L324.1 201.7Z"/><path d="M193.4 278.5L197.1 279.2L200.7 279.3L204.2 278.0L207.8 277.7L211.4 276.4L215.0 276.2L218.5 275.4L222.1 275.2L225.8 276.1L229.5 276.9L233.1 276.3L236.7 276.0L240.3 276.0L244.0 276.3L247.5 275.0L251.0 273.6L254.6 273.8L258.1 272.3L261.7 272.0L261.7 271.7L258.1 271.6L254.5 272.6L250.9 272.9L247.4 274.1L243.9 275.0L240.2 274.8L236.6 274.8L233.0 275.2L229.4 275.1L225.7 274.4L222.0 274.1L218.4 273.5L214.9 275.3L211.3 275.5L207.8 276.7L204.2 277.1L200.6 278.2L197.0 278.7L193.4 278.1Z"/><path d="M330.7 199.6L334.1 198.2L337.8 198.5L341.3 197.9L344.9 197.9L348.4 196.9L351.8 195.5L355.5 195.8L359.0 195.3L362.7 195.4L366.1 194.0L369.6 193.4L373.2 193.2L376.6 192.3L380.1 191.4L383.6 190.5L387.0 189.2L390.3 187.6L390.3 187.3L386.8 188.5L383.4 189.7L379.9 190.4L376.2 190.2L372.9 191.9L369.1 191.1L365.7 192.4L362.4 193.7L358.8 194.1L355.2 194.6L351.6 194.4L348.1 195.3L344.5 195.8L341.0 196.4L337.6 197.4L333.9 197.3L330.6 199.0Z"/><path d="M204.0 206.9L207.6 207.5L211.2 208.2L214.9 207.8L218.4 208.6L221.9 209.7L225.6 209.5L229.3 209.6L232.8 210.4L236.5 209.8L240.0 211.4L243.5 212.6L247.0 213.5L250.5 214.4L254.1 214.9L257.9 214.1L257.9 213.8L254.2 214.0L250.7 213.2L247.2 211.8L243.7 210.9L240.2 209.6L236.7 208.3L233.0 208.6L229.4 208.4L225.9 207.4L222.1 208.2L218.6 207.1L215.0 206.5L211.3 207.5L207.7 206.5L204.1 206.5Z"/><path d="M240.5 214.6L243.8 213.1L246.8 210.9L250.6 210.7L254.3 210.1L257.1 207.5L260.3 205.8L264.1 205.5L267.6 204.6L271.1 203.5L274.3 201.8L277.2 199.3L280.5 197.7L283.9 196.6L283.8 196.3L280.2 197.1L276.9 198.5L274.0 201.0L270.7 202.4L267.4 203.9L263.7 204.4L260.0 205.0L256.8 206.7L253.9 209.1L250.2 209.7L246.5 210.3L243.6 212.6L240.3 214.3Z"/><path d="M225.7 315.9L228.7 314.1L232.4 313.5L235.1 311.1L238.3 309.6L241.0 307.2L243.8 305.0L247.5 304.3L250.4 302.4L253.8 301.2L253.7 300.9L250.2 302.0L246.9 303.2L243.3 304.0L240.4 306.1L237.6 308.4L234.5 310.0L231.9 312.6L228.4 313.6L225.5 315.6Z"/><path d="M213.5 239.6L217.0 239.1L220.6 238.7L223.9 236.9L227.1 235.0L230.7 234.7L234.2 233.8L237.7 233.2L241.1 231.8L244.5 230.9L248.0 229.9L251.4 229.0L251.4 228.7L247.9 229.3L244.3 229.9L240.9 231.1L237.4 231.7L234.0 232.9L230.4 233.2L226.8 233.5L223.6 235.4L220.3 237.5L216.9 238.3L213.4 239.3Z"/><path d="M164.1 298.8L167.3 296.9L170.9 296.1L174.0 293.9L177.9 294.2L181.3 292.8L184.8 291.9L188.0 290.0L191.5 288.7L194.7 286.8L198.2 285.8L201.8 285.1L205.0 283.2L208.5 282.1L212.0 281.1L215.7 280.8L218.9 278.8L218.7 278.3L215.5 280.1L211.7 280.2L208.1 281.0L204.6 282.1L201.2 283.3L197.7 284.4L194.1 285.0L190.8 286.7L187.7 288.8L184.2 289.8L180.8 291.1L177.4 292.6L173.7 293.1L170.6 295.2L167.0 295.8L164.0 298.4Z"/><path d="M252.8 334.2L256.4 333.2L260.0 333.6L263.6 333.7L267.2 332.7L270.8 333.4L274.4 333.9L277.9 333.7L281.5 333.3L285.1 332.9L288.7 334.0L292.3 333.1L295.8 331.7L299.4 330.4L299.4 329.9L295.8 331.0L292.3 331.9L288.7 332.3L285.1 331.2L281.5 332.3L277.9 332.0L274.3 332.0L270.7 331.4L267.1 331.7L263.6 332.8L260.0 332.6L256.4 332.6L252.8 333.8Z"/><path d="M148.1 232.9L151.7 233.1L155.4 232.9L158.9 233.6L162.1 235.4L165.3 237.3L168.7 238.3L172.3 238.8L175.5 240.7L178.8 242.1L182.3 242.6L186.1 242.0L189.4 243.3L193.2 242.8L193.3 242.5L189.6 242.6L186.2 241.5L182.6 241.5L179.1 240.7L175.8 239.4L172.5 237.9L169.0 237.0L165.6 236.3L162.3 234.5L159.1 232.8L155.5 232.4L151.9 232.4L148.2 232.7Z"/><path d="M143.3 204.8L146.8 204.3L150.4 204.0L153.9 203.3L157.4 202.8L161.0 202.4L164.5 202.2L168.1 201.9L171.6 202.1L175.2 202.1L178.8 202.3L182.4 203.3L185.9 202.6L189.5 202.5L193.0 202.5L196.6 202.1L200.0 200.5L200.0 200.1L196.5 201.2L192.9 200.8L189.4 201.3L185.8 201.5L182.3 201.3L178.7 200.7L175.1 201.0L171.6 201.0L168.0 200.4L164.4 200.5L160.9 200.7L157.3 201.2L153.8 201.3L150.3 202.9L146.8 203.1L143.3 204.2Z"/><path d="M137.0 217.8L140.5 218.8L144.0 217.7L147.5 217.3L151.0 217.9L154.6 218.7L158.1 219.2L161.6 219.5L165.1 219.4L168.7 220.4L172.2 220.0L175.7 220.7L179.2 220.6L182.7 221.4L186.2 221.5L189.8 221.2L189.8 220.8L186.2 220.6L182.7 220.3L179.2 219.6L175.7 219.7L172.2 219.0L168.6 218.8L165.1 217.7L161.6 218.6L158.1 217.4L154.5 216.9L151.0 216.3L147.5 216.3L144.0 216.7L140.5 218.1L137.0 217.5Z"/><path d="M224.4 226.1L227.1 223.3L231.0 222.9L233.7 220.1L237.5 219.5L240.2 216.8L243.1 214.2L246.3 212.6L250.0 211.8L253.2 209.9L256.3 207.8L260.1 207.3L263.7 206.2L267.2 205.1L270.6 203.6L273.9 201.9L276.9 199.8L279.7 197.3L282.9 195.4L286.4 194.2L290.1 193.3L290.0 193.2L286.3 193.9L282.5 194.6L279.3 196.4L276.6 199.2L273.3 200.7L270.2 202.9L266.9 204.4L263.2 205.2L259.5 206.0L255.9 207.1L252.7 208.8L249.4 210.5L245.7 211.3L242.5 213.2L239.8 215.9L237.1 218.6L233.4 219.5L230.6 222.1L226.9 222.9L224.2 225.7Z"/><path d="M173.8 304.7L177.8 304.3L180.7 301.7L184.2 300.3L187.4 298.3L190.3 295.6L194.0 294.8L196.8 291.9L200.2 290.4L203.6 288.8L206.8 286.8L210.2 285.2L213.6 283.6L217.5 283.1L220.5 280.7L220.3 280.2L217.0 281.9L213.1 282.4L209.7 284.0L206.3 285.7L202.7 286.9L199.4 288.6L196.0 290.2L193.0 292.5L189.8 294.5L186.9 297.2L183.5 298.8L180.3 300.8L177.2 303.1L173.7 304.4Z"/><path d="M249.0 328.9L252.8 328.6L256.5 329.2L260.3 329.2L264.0 329.7L267.8 330.0L271.6 330.3L275.4 330.1L279.2 329.2L283.0 329.5L283.0 329.2L279.3 328.7L275.4 329.7L271.6 329.7L267.9 329.1L264.1 329.0L260.4 328.1L256.6 328.2L252.8 328.1L249.0 328.6Z"/><path d="M131.4 240.6L134.9 239.5L138.3 238.5L142.1 239.1L145.4 237.5L148.9 236.7L152.4 235.4L155.9 234.7L159.5 234.4L163.1 234.5L166.6 233.5L170.0 232.3L173.4 230.9L177.0 230.4L180.6 230.5L184.1 229.8L187.7 229.9L191.1 228.2L194.5 227.0L198.1 226.4L198.0 225.8L194.4 226.4L190.9 226.9L187.5 228.6L183.9 228.8L180.4 229.3L176.6 228.5L173.2 229.6L169.7 230.6L166.4 232.3L162.8 232.9L159.1 232.4L155.5 232.6L152.0 233.4L148.8 235.5L145.3 236.4L141.9 238.0L138.2 237.8L134.8 238.9L131.4 240.2Z"/><path d="M251.9 236.3L255.8 237.0L259.1 235.0L262.9 235.3L266.8 235.6L270.2 234.2L273.7 233.0L277.4 232.7L281.1 232.7L284.7 231.7L288.0 229.8L291.4 227.9L294.9 226.9L298.2 225.1L301.7 223.7L305.2 222.4L308.6 220.7L312.3 220.5L315.8 219.4L315.7 219.0L312.1 219.6L308.4 219.8L304.9 221.4L301.5 222.6L298.0 223.8L294.5 225.2L291.1 226.8L287.8 228.8L284.3 230.2L280.9 231.6L277.1 231.2L273.3 231.3L269.8 232.6L266.5 234.7L262.7 234.4L259.0 234.3L255.6 236.1L251.8 236.1Z"/><path d="M276.3 216.8L280.1 217.8L283.7 218.3L287.1 217.0L290.7 217.2L294.2 216.1L297.6 215.0L301.0 213.6L304.5 213.1L308.2 213.5L311.8 213.8L315.4 213.9L318.8 212.6L322.4 212.3L325.8 211.2L329.2 209.5L332.6 208.2L336.1 207.3L339.6 206.6L339.5 206.4L335.9 206.3L332.5 207.5L329.0 207.9L325.6 209.4L322.3 211.4L318.7 211.7L315.3 212.7L311.6 211.8L308.0 212.3L304.4 211.6L300.8 212.0L297.4 213.4L293.9 214.2L290.5 215.6L286.9 215.5L283.6 217.3L279.9 216.8L276.3 216.3Z"/><path d="M232.8 274.3L236.4 274.0L239.9 273.2L243.6 273.0L246.9 271.4L250.4 270.8L253.8 269.6L257.4 269.1L260.7 267.9L264.2 266.9L267.5 265.6L267.4 265.3L263.9 266.1L260.5 267.3L257.1 268.1L253.5 268.7L250.1 270.0L246.5 270.3L243.3 272.0L239.7 272.4L236.2 273.3L232.7 274.0Z"/><path d="M311.6 293.9L315.2 292.9L318.4 291.4L321.9 290.4L325.7 289.9L328.8 288.0L331.7 285.7L334.8 284.0L338.5 283.3L342.1 282.5L345.0 280.1L348.0 278.1L351.0 275.9L353.7 273.2L357.2 272.1L360.1 269.8L359.9 269.6L357.0 271.8L353.3 272.4L350.6 275.0L347.7 277.5L344.5 279.0L341.6 281.4L338.2 282.6L334.4 283.1L331.4 285.0L328.2 286.8L325.2 288.9L321.6 289.6L318.1 290.6L314.9 292.3L311.5 293.6Z"/><path d="M195.1 215.4L198.2 213.6L201.1 211.4L204.3 209.8L208.0 209.1L211.9 208.8L215.5 207.9L218.6 206.1L222.0 204.8L225.2 203.2L227.9 200.5L230.8 198.3L234.4 197.5L237.9 196.4L240.8 194.1L243.4 191.5L246.3 189.2L249.9 188.3L249.7 187.9L245.9 188.5L242.9 190.5L240.1 192.9L237.2 195.1L233.8 196.3L230.2 197.1L227.0 198.9L224.1 201.0L221.3 203.4L217.8 204.4L214.5 206.0L211.0 207.0L207.4 207.9L203.6 208.2L200.4 209.9L197.8 212.8L194.9 215.0Z"/><path d="M143.4 287.9L147.0 289.2L150.6 289.6L154.2 289.9L157.9 288.9L161.5 289.8L165.1 290.0L168.7 290.2L172.4 291.7L176.0 292.1L179.6 291.6L183.2 291.7L186.8 291.4L190.5 291.0L194.1 290.5L197.7 290.8L201.3 291.3L205.0 291.3L208.6 291.1L208.6 290.7L205.0 290.5L201.3 290.4L197.7 289.3L194.1 288.8L190.5 289.0L186.8 290.3L183.2 289.1L179.6 290.1L176.0 289.6L172.4 289.2L168.7 288.3L165.1 287.9L161.5 288.7L157.9 287.0L154.2 288.3L150.6 288.3L147.0 288.0L143.4 287.3Z"/><path d="M174.1 317.5L177.9 316.9L181.6 315.9L184.9 313.9L188.1 311.5L191.6 310.0L195.5 309.6L199.1 308.4L202.8 307.6L206.4 306.3L210.1 305.5L210.0 305.1L206.2 305.7L202.5 306.7L198.6 306.8L195.1 308.5L191.3 308.9L187.9 310.7L184.6 312.8L181.3 314.9L177.8 316.4L174.1 317.3Z"/><path d="M178.3 293.8L181.4 291.8L185.0 290.9L188.6 290.1L192.5 289.7L195.6 287.9L198.9 286.3L202.4 285.1L205.4 283.2L208.6 281.3L208.5 281.0L205.1 282.4L201.7 283.7L198.6 285.6L195.2 287.0L191.6 288.0L187.9 288.6L184.6 290.2L180.9 290.9L178.1 293.5Z"/><path d="M332.9 214.2L336.2 213.1L339.2 211.1L342.5 209.8L345.5 207.7L349.1 207.2L352.1 205.3L355.3 203.6L358.5 202.1L361.5 200.3L364.7 198.7L368.0 197.4L371.2 196.1L374.4 194.4L377.6 193.0L381.1 192.3L381.1 192.1L377.5 192.6L374.2 194.0L370.8 195.1L367.6 196.5L364.4 198.0L361.2 199.7L358.0 201.0L355.0 203.1L351.8 204.7L348.7 206.2L345.1 206.8L342.2 209.1L339.0 210.5L336.1 212.7L332.8 214.0Z"/><path d="M332.5 233.6L335.9 232.3L339.0 230.4L342.3 228.9L345.8 227.9L349.2 226.5L352.7 225.9L356.1 224.4L359.6 223.6L362.9 222.2L366.5 221.6L369.7 219.8L373.1 218.4L373.0 218.0L369.5 218.9L366.2 220.4L362.5 220.9L359.0 221.6L355.6 222.9L352.0 223.7L348.7 225.2L345.2 225.9L341.8 227.1L338.6 229.2L335.5 231.2L332.3 233.2Z"/><path d="M201.3 327.2L204.8 328.7L208.4 329.5L212.2 329.5L215.8 330.0L219.2 332.1L222.9 332.6L226.3 334.4L230.0 334.7L233.6 335.6L237.2 336.5L240.8 337.4L244.4 338.1L248.1 338.6L251.6 340.1L255.3 340.1L258.9 341.2L259.0 340.8L255.4 339.6L251.7 339.3L248.3 337.3L244.7 336.8L241.1 335.9L237.4 335.2L233.9 334.1L230.2 333.5L226.6 332.9L223.1 331.1L219.4 330.9L215.9 329.3L212.3 328.4L208.6 328.6L204.9 328.2L201.4 326.9Z"/><path d="M334.9 217.3L337.8 214.8L341.6 214.3L345.3 213.4L349.0 212.4L352.9 212.0L356.1 210.1L359.1 208.0L362.5 206.6L365.8 205.0L369.1 203.3L372.2 201.3L375.2 199.2L378.0 196.6L377.7 196.2L374.7 198.4L371.8 200.5L368.4 202.0L365.3 204.1L362.1 205.8L358.7 207.2L355.5 209.0L352.1 210.4L348.5 211.6L344.8 212.5L341.0 213.1L337.4 214.0L334.7 216.9Z"/><path d="M177.8 314.9L181.2 313.6L185.1 313.6L188.8 313.0L192.2 311.6L195.1 308.9L198.5 307.7L201.5 305.1L204.3 302.3L207.5 300.2L207.3 299.9L204.1 301.6L200.8 303.4L197.7 305.6L194.6 307.7L191.6 309.9L188.0 310.7L184.7 312.4L180.9 312.7L177.7 314.5Z"/><path d="M180.4 300.8L183.3 298.7L186.8 297.7L190.5 297.0L193.6 295.0L196.5 292.9L199.4 290.5L202.2 288.1L205.0 285.7L208.4 284.4L212.0 283.4L214.9 281.3L218.3 279.9L222.3 279.8L225.0 277.2L227.8 274.7L230.5 272.2L233.8 270.8L236.8 268.6L240.0 267.0L239.8 266.7L236.3 267.6L233.2 269.5L229.8 270.7L227.2 273.5L224.1 275.4L221.1 277.6L217.7 278.7L213.8 279.2L210.8 281.1L207.2 282.1L204.2 284.0L201.5 286.8L198.4 288.6L195.4 290.7L192.7 293.3L189.8 295.5L186.3 296.5L183.0 298.0L180.1 300.3Z"/><path d="M333.4 268.9L335.4 265.7L338.1 263.2L340.5 260.4L343.0 257.8L345.7 255.3L348.6 253.0L352.0 251.3L355.5 249.6L357.4 246.3L360.5 244.3L362.1 240.7L364.8 238.2L367.5 235.7L369.4 232.4L372.3 230.1L375.5 228.2L377.7 225.1L380.2 222.5L383.0 220.1L385.0 217.0L384.9 216.8L382.6 219.7L379.8 222.1L376.9 224.3L375.1 227.8L371.6 229.4L368.8 231.8L366.7 234.9L363.8 237.1L361.5 240.0L359.6 243.3L356.5 245.4L354.9 249.0L351.3 250.5L347.7 252.1L345.0 254.6L342.4 257.1L340.1 260.0L337.5 262.6L335.1 265.3L333.3 268.7Z"/><path d="M264.4 344.3L267.8 342.9L271.4 342.0L275.2 341.8L278.2 339.5L281.8 338.6L284.9 336.5L288.3 335.2L291.5 333.5L295.2 333.0L299.1 332.8L302.4 331.2L302.2 330.8L298.5 331.5L294.8 331.9L291.0 332.4L287.6 333.7L284.3 335.2L280.9 336.5L277.5 337.7L274.7 340.4L270.9 340.9L267.4 341.8L264.2 343.7Z"/><path d="M181.5 324.8L185.1 325.5L188.8 325.5L192.4 326.5L196.0 327.0L199.6 327.7L203.1 329.2L206.7 329.8L210.3 330.0L214.0 329.7L217.6 330.4L221.2 331.2L224.8 331.6L228.5 331.4L232.2 330.5L235.8 331.5L239.3 332.2L239.4 331.8L235.9 330.5L232.3 329.9L228.6 330.4L224.9 330.3L221.3 330.0L217.7 329.5L214.2 327.8L210.4 329.0L206.8 328.2L203.2 328.0L199.7 326.1L196.1 325.7L192.4 325.7L188.9 324.6L185.2 324.6L181.6 324.6Z"/><path d="M226.9 228.5L230.4 228.7L234.1 228.0L237.8 226.9L241.4 226.9L244.9 227.9L248.4 229.3L252.0 228.5L255.6 228.6L259.2 228.2L259.3 227.9L255.7 227.6L252.1 227.2L248.5 228.1L245.0 226.8L241.5 225.8L237.9 225.9L234.2 226.5L230.5 227.6L226.9 228.2Z"/><path d="M291.3 315.4L294.4 313.6L297.8 312.2L300.4 309.5L303.6 307.7L307.4 306.9L310.5 305.0L314.0 303.7L317.1 301.8L320.5 300.4L323.2 297.9L325.9 295.4L329.6 294.4L332.9 292.7L335.3 289.8L337.8 286.9L340.2 283.8L343.9 282.8L346.8 280.6L346.6 280.4L343.5 282.2L339.8 283.1L337.1 285.8L334.7 288.8L332.1 291.4L329.0 293.4L325.4 294.5L322.1 296.0L319.4 298.6L316.1 300.2L313.2 302.5L310.0 304.1L306.5 305.4L303.0 306.6L299.6 308.1L297.1 311.0L293.9 312.7L291.0 315.0Z"/><path d="M175.7 285.2L179.5 285.5L183.2 285.6L186.7 284.7L190.2 284.2L193.6 282.6L197.0 280.8L200.5 279.9L204.3 280.5L208.1 281.2L211.4 279.1L215.0 278.7L218.6 278.8L222.1 277.5L225.5 276.0L228.8 273.9L232.3 273.1L235.6 271.3L235.6 271.1L232.1 272.2L228.7 273.4L225.3 275.2L221.8 276.0L218.5 277.7L214.7 277.5L211.1 278.0L207.7 279.4L204.0 279.3L200.3 279.0L196.7 279.6L193.4 281.2L190.1 283.2L186.4 283.4L182.9 284.4L179.3 284.7L175.7 284.9Z"/><path d="M167.2 295.3L170.6 294.1L174.0 292.6L177.5 291.6L180.8 289.9L184.0 288.0L187.8 287.5L190.9 285.4L194.6 284.8L197.8 282.7L201.1 281.2L204.5 279.9L208.3 279.3L211.4 277.1L215.0 276.2L218.3 274.5L222.1 274.2L225.4 272.7L228.6 270.8L228.5 270.5L225.1 271.8L221.7 273.3L217.8 273.3L214.4 274.8L210.9 276.0L207.8 278.1L204.0 278.4L200.6 279.7L197.0 280.8L193.9 282.9L190.3 283.8L187.4 286.4L183.5 286.5L180.3 288.5L177.0 290.2L173.5 291.4L170.4 293.5L167.1 295.0Z"/><path d="M221.6 254.9L225.4 255.0L228.8 253.5L232.3 252.7L236.1 252.7L239.4 251.3L242.7 249.5L245.9 247.7L249.0 245.6L252.6 244.8L256.0 243.5L259.0 241.1L262.2 239.3L265.5 237.7L269.0 236.7L272.5 235.7L276.0 234.9L279.3 233.3L282.7 231.9L282.6 231.6L279.0 232.4L275.7 234.0L272.2 234.7L268.6 235.6L265.2 236.7L261.9 238.2L258.6 239.8L255.4 241.8L252.2 243.6L248.5 243.9L245.4 246.1L242.1 247.7L238.8 249.3L235.8 251.7L231.9 251.4L228.5 252.6L225.1 254.0L221.5 254.6Z"/><path d="M176.6 290.6L180.3 290.5L184.1 291.4L187.7 290.6L191.5 291.1L195.0 289.7L198.7 288.6L202.5 289.6L206.0 288.2L209.7 288.0L213.5 289.2L217.2 288.7L220.7 286.9L224.4 286.7L228.1 286.8L231.8 285.8L235.4 284.6L239.0 283.9L242.8 284.7L242.8 284.5L239.0 283.6L235.3 284.2L231.7 284.9L228.0 285.6L224.3 285.7L220.7 286.2L217.1 287.6L213.4 287.9L209.6 287.2L206.0 287.4L202.3 288.2L198.6 287.7L195.0 288.9L191.4 290.5L187.6 289.5L184.0 290.7L180.2 290.0L176.6 290.2Z"/><path d="M147.9 219.7L151.4 219.3L155.0 218.5L158.5 219.1L162.0 218.7L165.6 218.2L169.1 218.4L172.7 217.9L176.2 218.2L179.7 218.9L183.3 217.8L183.3 217.5L179.7 218.2L176.2 217.5L172.7 217.4L169.1 217.4L165.6 217.0L162.0 217.9L158.5 218.5L155.0 217.7L151.4 218.9L147.9 219.5Z"/><path d="M308.0 206.2L311.2 204.5L314.9 205.1L318.3 204.2L322.1 205.2L325.7 205.2L328.9 203.5L332.3 202.6L335.7 201.6L339.5 202.5L342.5 200.0L345.9 198.9L349.4 198.8L352.8 197.7L356.5 198.1L360.0 198.0L363.4 197.1L366.8 196.3L366.8 195.9L363.3 196.4L359.8 196.9L356.2 197.0L352.5 196.4L349.2 197.4L345.6 197.4L342.3 198.9L339.0 200.2L335.5 200.6L331.9 200.8L328.7 202.5L325.5 204.1L321.7 203.3L318.1 203.3L314.7 203.9L311.0 203.4L307.8 205.6Z"/><path d="M255.7 276.3L258.9 274.8L262.0 273.2L265.5 272.2L268.6 270.6L271.3 268.1L275.0 267.5L277.9 265.3L280.7 263.2L284.2 262.1L287.1 260.1L290.8 259.6L293.5 257.0L297.3 256.6L300.2 254.7L303.7 253.7L307.1 252.6L310.6 251.6L313.7 249.9L313.5 249.6L310.2 250.8L306.4 251.2L303.4 253.0L299.4 253.1L296.6 255.3L293.0 255.9L290.2 258.3L286.6 259.0L283.6 260.8L279.8 261.2L276.9 263.4L274.1 265.8L270.8 266.9L267.9 269.1L264.7 270.7L261.4 271.8L258.6 274.3L255.5 276.0Z"/><path d="M217.4 272.5L221.0 271.9L223.9 269.6L226.9 267.8L230.0 265.9L233.2 264.5L236.8 263.8L239.9 262.0L243.2 260.9L246.1 258.6L249.1 256.7L252.5 255.6L255.6 253.7L255.5 253.5L252.2 255.0L248.8 256.0L245.7 257.8L242.6 259.5L239.4 261.0L236.4 263.0L232.8 263.4L229.7 265.2L226.4 266.4L223.4 268.6L220.6 271.0L217.3 272.2Z"/><path d="M245.8 258.6L249.5 258.0L253.1 257.2L256.3 255.4L259.8 254.5L262.9 252.5L266.0 250.4L269.3 248.7L272.5 246.9L276.0 246.1L279.2 244.3L282.3 242.2L286.1 241.9L289.7 241.3L293.6 241.0L296.5 238.7L299.8 237.0L303.4 236.4L307.1 235.6L310.0 233.3L309.9 233.0L306.8 234.9L303.1 235.6L299.4 236.1L296.0 237.4L293.0 239.5L289.2 240.0L285.5 240.4L281.7 240.8L278.6 242.7L275.5 244.7L272.1 246.0L268.9 247.9L265.6 249.3L262.5 251.4L259.3 253.2L255.8 254.3L252.9 256.6L249.3 257.5L245.7 258.1Z"/><path d="M220.9 310.8L224.6 310.5L228.3 310.4L232.1 310.7L235.8 310.5L239.5 310.7L243.2 310.1L247.0 310.8L250.7 309.7L254.4 310.2L258.1 310.1L261.8 309.9L265.6 309.4L269.3 309.0L273.0 309.4L276.8 310.4L276.7 309.9L273.0 308.6L269.3 308.2L265.6 307.9L261.8 308.3L258.1 309.1L254.4 308.7L250.7 308.4L246.9 309.1L243.2 309.1L239.5 309.7L235.8 309.0L232.0 309.3L228.3 309.2L224.6 310.0L220.9 310.5Z"/><path d="M275.2 249.8L278.9 250.9L282.6 251.2L286.1 249.9L289.8 249.9L293.4 250.2L297.0 249.1L300.6 248.5L304.3 248.1L307.9 247.9L311.5 247.9L315.2 247.6L318.8 247.5L322.5 247.5L322.4 247.0L318.8 246.9L315.1 246.0L311.5 246.4L307.8 246.9L304.2 246.8L300.5 247.0L297.0 248.1L293.4 249.1L289.7 248.1L286.0 248.8L282.5 249.8L278.8 249.8L275.1 249.3Z"/></g><g fill="#4e1646"><path d="M403.2 172.9L406.5 171.4L410.2 170.9L413.7 170.0L417.0 168.7L420.1 166.7L423.2 164.6L426.6 163.5L426.5 163.3L422.9 163.9L419.5 165.2L416.3 166.9L413.0 168.3L409.5 169.2L406.2 170.7L403.1 172.6Z"/><path d="M387.1 234.8L389.1 232.6L391.8 231.2L393.5 228.7L395.6 226.6L395.5 226.4L392.9 227.9L390.8 230.1L388.6 232.0L386.9 234.5Z"/><path d="M363.3 208.3L366.7 206.8L370.1 205.1L373.6 204.0L377.0 202.4L380.5 201.1L383.9 199.5L387.3 198.2L390.8 196.9L390.8 196.8L387.1 197.5L383.7 199.1L380.3 200.6L376.7 201.4L373.3 203.1L369.8 204.4L366.5 206.2L363.2 208.0Z"/><path d="M380.6 226.2L383.0 223.9L385.3 221.5L387.7 219.2L390.2 217.0L390.1 216.9L387.4 218.8L385.0 221.2L382.5 223.3L380.5 226.1Z"/><path d="M364.2 234.7L367.4 232.8L370.0 230.0L373.0 227.8L375.7 225.2L378.5 222.7L381.3 220.1L384.4 217.9L387.1 215.3L387.0 215.2L384.1 217.6L381.0 219.8L378.0 222.0L375.4 224.7L372.6 227.3L369.5 229.5L367.1 232.4L364.0 234.6Z"/><path d="M423.7 136.4L425.9 133.5L428.1 130.5L430.0 127.3L432.3 124.5L432.2 124.4L429.4 126.8L427.3 129.8L425.3 132.9L423.5 136.2Z"/><path d="M427.2 150.4L429.9 147.7L432.5 145.0L435.6 142.7L438.5 140.2L440.6 137.0L443.4 134.4L445.5 131.3L445.4 131.1L443.0 134.1L440.3 136.8L438.0 139.8L435.0 142.2L432.2 144.7L429.5 147.4L427.1 150.3Z"/><path d="M381.7 181.2L384.2 178.5L386.6 175.6L389.2 173.0L391.2 169.8L393.5 166.8L395.6 163.7L397.7 160.5L397.5 160.4L395.3 163.4L393.0 166.3L390.9 169.4L388.6 172.4L386.1 175.2L384.0 178.3L381.6 181.1Z"/><path d="M333.2 178.5L335.1 178.2L336.6 177.2L338.1 176.2L339.2 174.5L339.1 174.3L337.7 175.5L336.1 176.4L334.5 177.2L333.0 178.3Z"/><path d="M414.9 135.0L416.3 134.2L417.4 133.0L419.0 132.6L420.5 132.1L420.4 132.0L418.7 132.0L416.9 132.0L415.8 133.2L414.9 134.9Z"/><path d="M349.3 157.3L352.5 154.7L356.1 152.6L359.3 150.0L362.2 147.2L362.0 146.9L358.6 149.2L354.8 150.9L352.0 154.0L349.1 157.0Z"/><path d="M346.9 235.4L350.4 234.5L354.0 234.0L357.7 233.5L361.3 232.9L364.6 231.5L368.0 230.1L371.5 228.9L375.1 228.4L375.1 228.2L371.4 228.6L367.8 229.4L364.5 231.1L361.1 232.2L357.4 232.7L353.9 233.5L350.3 234.1L346.8 235.2Z"/><path d="M386.2 181.0L389.5 179.1L393.2 178.2L396.5 176.4L400.2 175.6L403.6 173.9L406.9 172.1L410.3 170.5L413.7 168.9L413.6 168.7L410.1 170.0L406.5 171.0L403.3 173.0L399.8 174.5L396.1 175.4L392.9 177.3L389.3 178.4L386.1 180.7Z"/><path d="M381.6 188.3L385.7 188.2L389.6 187.7L393.6 187.5L397.5 186.8L401.3 185.6L405.3 185.2L405.3 185.0L401.2 184.9L397.3 185.6L393.4 186.4L389.4 186.7L385.5 187.3L381.6 187.9Z"/><path d="M380.1 174.3L383.4 172.6L386.8 171.1L389.7 168.8L393.0 167.1L395.8 164.7L399.0 162.8L398.9 162.7L395.5 164.2L392.6 166.5L389.4 168.3L386.5 170.7L383.1 172.2L380.0 174.2Z"/><path d="M349.5 179.9L352.7 177.9L355.6 175.6L358.6 173.5L361.5 171.3L364.1 168.6L366.5 165.7L369.1 163.1L369.0 162.9L365.7 164.8L363.2 167.5L360.5 170.0L358.0 172.8L355.1 175.0L351.9 177.0L349.3 179.6Z"/><path d="M365.1 159.8L367.3 158.3L370.0 157.8L372.5 157.0L375.1 156.4L375.0 156.2L372.3 156.6L369.7 157.1L367.1 157.8L365.1 159.7Z"/><path d="M389.4 187.9L393.0 187.0L396.4 185.9L399.4 183.7L402.4 181.7L406.0 180.8L409.1 178.8L411.9 176.4L411.7 176.1L408.6 178.0L405.6 179.9L402.0 180.9L398.7 182.4L395.8 184.5L392.5 186.1L389.3 187.6Z"/><path d="M417.8 143.0L421.5 141.9L424.7 139.7L428.0 137.8L431.2 135.6L434.8 134.3L437.9 131.9L437.7 131.6L434.4 133.4L430.7 134.5L427.4 136.5L424.3 138.8L421.1 141.0L417.7 142.7Z"/><path d="M337.8 200.0L339.8 199.8L341.8 200.1L343.7 199.5L345.6 198.9L345.6 198.7L343.6 199.0L341.7 199.5L339.7 199.0L337.8 199.8Z"/><path d="M407.9 163.4L409.3 162.8L411.0 163.2L412.2 161.7L413.7 161.6L413.7 161.4L411.9 160.8L410.5 161.5L408.9 161.6L407.8 163.1Z"/><path d="M360.2 187.2L361.9 187.0L363.0 185.9L364.5 185.5L365.9 184.9L365.9 184.7L364.3 185.1L362.6 185.3L361.5 186.4L360.1 187.1Z"/><path d="M419.6 128.6L422.6 127.5L425.5 126.4L428.4 125.1L430.8 123.3L430.8 123.2L428.1 124.8L425.2 125.9L422.3 127.1L419.5 128.5Z"/><path d="M315.8 186.8L318.6 186.9L321.5 187.4L324.2 186.4L327.0 186.1L327.0 185.9L324.1 185.2L321.4 186.1L318.6 186.3L315.7 186.5Z"/><path d="M397.9 201.7L400.4 198.4L403.7 195.8L406.3 192.5L408.9 189.3L411.3 185.8L411.2 185.7L408.2 188.6L405.7 192.0L403.1 195.2L400.0 198.0L397.6 201.5Z"/><path d="M361.4 200.0L365.1 198.6L368.9 197.4L372.6 196.1L375.9 194.0L379.5 192.6L382.7 190.2L386.2 188.3L389.6 186.4L389.5 186.2L385.9 187.9L382.3 189.4L378.9 191.3L375.2 192.8L372.2 195.3L368.3 196.3L364.7 197.8L361.3 199.8Z"/><path d="M354.1 248.3L357.6 246.2L361.1 244.3L364.6 242.2L368.0 240.1L371.3 237.7L371.1 237.4L367.5 239.3L364.0 241.3L360.4 243.2L357.1 245.4L354.0 248.1Z"/><path d="M334.6 224.9L338.6 224.4L342.4 223.1L346.4 222.7L350.0 220.7L353.9 219.7L357.9 219.1L361.8 218.2L361.7 217.8L357.6 218.2L353.7 218.9L349.7 219.6L346.0 221.2L342.0 221.7L338.3 223.3L334.6 224.7Z"/><path d="M414.3 125.6L418.2 124.9L422.1 124.4L425.7 122.9L429.3 121.6L432.8 119.8L436.3 118.2L440.0 117.1L439.9 116.9L436.0 117.4L432.3 118.7L429.0 120.6L425.3 122.0L421.7 123.4L418.0 124.4L414.2 125.3Z"/><path d="M415.7 173.7L419.4 171.8L423.1 170.1L427.0 168.6L430.6 166.5L430.5 166.4L426.7 168.1L422.8 169.4L419.1 171.2L415.7 173.6Z"/><path d="M383.0 144.9L385.8 144.0L388.4 142.4L391.1 141.5L393.6 139.6L393.5 139.3L390.7 140.3L388.1 141.5L385.4 142.6L382.9 144.5Z"/><path d="M356.1 259.2L359.2 257.4L362.5 256.2L365.7 254.6L368.8 253.0L372.0 251.4L375.1 249.7L377.7 247.2L380.9 245.6L380.8 245.4L377.5 246.9L374.7 249.0L371.7 250.9L368.5 252.4L365.4 254.2L362.1 255.5L358.9 257.0L356.0 259.0Z"/><path d="M379.7 200.1L383.0 197.8L385.6 194.9L387.9 191.8L390.4 188.9L390.2 188.7L387.5 191.4L385.1 194.5L382.3 197.2L379.6 199.9Z"/><path d="M334.3 206.0L337.7 204.3L340.8 202.1L344.2 200.3L347.5 198.5L350.8 196.5L353.7 194.1L356.8 191.8L356.7 191.6L353.3 193.3L350.2 195.7L346.9 197.4L343.8 199.7L340.3 201.2L337.2 203.5L334.2 205.9Z"/><path d="M391.6 156.3L395.3 155.1L399.0 153.6L402.4 151.8L406.3 150.9L409.7 148.8L413.2 146.9L413.1 146.8L409.5 148.3L406.0 150.2L402.1 150.8L398.6 152.7L395.0 154.3L391.5 156.1Z"/><path d="M348.0 180.7L351.9 180.8L355.7 179.6L359.6 179.6L363.4 179.1L363.4 178.9L359.5 178.8L355.5 178.3L351.7 179.3L347.9 180.4Z"/><path d="M407.1 172.0L410.7 171.2L414.2 170.3L417.5 168.7L420.9 167.3L424.0 165.4L427.7 164.9L431.2 163.9L434.8 163.2L434.7 162.9L431.0 163.3L427.4 164.1L423.8 164.8L420.5 166.2L417.2 167.8L413.9 169.4L410.6 170.8L407.0 171.7Z"/><path d="M351.4 188.0L354.9 186.7L358.7 186.0L362.3 185.2L365.9 183.9L369.3 182.2L369.3 182.0L365.6 182.9L361.9 183.8L358.4 185.1L354.6 185.8L351.3 187.6Z"/><path d="M365.1 201.5L369.3 201.0L373.0 199.3L376.9 198.1L380.3 195.7L380.2 195.4L376.5 197.0L372.6 198.4L368.6 199.4L364.9 201.2Z"/><path d="M370.7 153.4L373.9 151.9L377.2 150.6L380.2 148.7L383.5 147.4L386.3 145.0L386.2 144.9L383.1 146.6L379.6 147.5L376.8 149.6L373.5 151.0L370.5 153.0Z"/><path d="M360.0 144.1L363.7 143.8L366.9 142.2L370.4 141.3L373.8 140.0L376.9 138.1L380.5 137.3L383.7 135.5L387.0 134.2L386.9 133.8L383.4 134.8L380.1 136.2L376.5 136.8L373.3 138.6L369.9 139.8L366.5 141.1L363.4 142.9L359.9 143.7Z"/><path d="M405.3 156.7L408.7 155.4L412.1 154.2L415.6 152.9L418.9 151.5L422.4 150.3L425.8 149.2L429.3 148.1L429.2 147.7L425.5 148.1L422.0 149.1L418.6 150.2L415.2 151.6L411.8 152.8L408.5 154.8L405.2 156.4Z"/><path d="M347.0 251.8L350.2 249.7L353.4 247.6L356.7 245.6L360.0 243.7L363.1 241.4L366.1 238.9L368.9 236.1L368.8 235.9L365.7 238.3L362.7 240.7L359.5 242.8L356.0 244.4L352.6 246.3L349.6 248.7L346.8 251.4Z"/><path d="M381.7 174.4L385.0 173.3L388.6 172.9L392.1 172.0L395.3 170.4L398.7 169.5L402.0 168.3L405.5 167.6L405.4 167.3L401.8 167.5L398.4 168.7L395.0 169.6L391.6 170.6L388.3 171.8L384.7 172.3L381.6 174.1Z"/><path d="M339.4 181.5L341.0 180.6L342.6 179.7L344.3 179.0L345.9 178.3L345.7 177.9L343.5 177.7L341.9 178.5L340.2 179.2L339.2 181.1Z"/><path d="M428.8 140.4L431.9 138.3L434.8 135.9L437.3 133.1L439.9 130.5L439.8 130.3L437.0 132.8L434.1 135.2L431.3 137.6L428.7 140.3Z"/><path d="M353.8 233.1L357.1 232.7L360.3 231.5L363.5 230.4L366.8 229.8L366.7 229.5L363.3 229.5L360.1 230.7L356.9 231.6L353.7 232.7Z"/><path d="M384.1 163.8L387.8 163.3L391.3 162.3L395.1 162.0L398.4 160.3L401.9 159.2L405.6 158.6L409.2 157.7L409.1 157.5L405.5 158.2L401.7 158.5L398.2 159.6L394.7 160.9L391.1 161.4L387.6 162.6L384.0 163.5Z"/><path d="M417.2 166.6L419.2 166.8L420.4 165.3L421.7 164.2L423.3 163.5L423.1 163.1L421.1 163.0L420.0 164.6L418.6 165.7L417.1 166.4Z"/><path d="M323.6 173.4L326.4 173.8L329.1 173.5L331.8 173.6L334.5 173.5L334.5 173.1L331.7 172.3L329.0 172.5L326.3 172.5L323.6 172.9Z"/><path d="M392.7 166.0L395.5 163.4L398.4 160.9L400.7 157.9L402.7 154.7L405.2 151.8L407.7 148.9L407.5 148.8L404.5 151.2L402.0 154.0L399.6 157.0L397.8 160.4L395.0 163.0L392.4 165.7Z"/><path d="M372.8 194.0L376.4 193.1L379.8 191.6L383.3 190.3L386.8 189.1L390.5 188.3L394.0 187.2L397.4 185.3L397.3 185.2L393.8 186.5L390.3 187.7L386.6 188.2L383.0 189.3L379.6 190.9L376.2 192.4L372.7 193.8Z"/><path d="M377.3 163.5L380.8 162.2L384.4 161.2L387.3 158.8L390.5 157.0L393.4 154.6L393.2 154.3L390.1 156.3L386.7 157.6L383.7 159.9L380.2 161.2L377.2 163.3Z"/><path d="M337.0 222.4L340.5 220.9L344.1 219.5L347.8 218.6L351.4 217.4L354.9 215.8L358.7 215.0L362.4 214.1L365.8 212.4L365.8 212.2L362.1 213.3L358.4 214.1L354.7 215.1L351.0 216.2L347.4 217.4L343.8 218.7L340.3 220.3L336.9 222.3Z"/><path d="M388.8 133.5L391.8 131.7L395.1 130.2L398.2 128.3L401.2 126.3L404.3 124.6L407.7 123.3L410.8 121.4L413.9 119.6L413.7 119.4L410.3 120.7L407.3 122.6L404.0 124.1L400.8 125.7L397.7 127.5L394.6 129.3L391.5 131.1L388.7 133.3Z"/><path d="M374.1 228.9L377.5 227.8L380.9 226.4L384.3 225.2L387.5 223.5L390.8 222.2L394.1 220.7L394.0 220.4L390.5 221.5L387.1 222.7L383.6 223.8L380.4 225.3L377.2 227.1L374.0 228.8Z"/><path d="M384.4 163.6L387.6 161.8L389.8 159.0L392.3 156.5L394.9 154.0L394.6 153.7L391.3 155.4L389.2 158.4L386.7 160.8L384.1 163.3Z"/><path d="M395.4 161.7L397.6 161.5L399.7 161.2L402.0 161.3L404.0 160.6L403.9 160.2L401.7 160.2L399.5 160.3L397.3 160.6L395.3 161.3Z"/><path d="M382.9 203.3L386.2 201.3L389.4 199.1L392.8 197.1L396.2 195.3L399.1 192.6L399.0 192.4L395.7 194.4L392.3 196.4L388.6 197.7L385.7 200.4L382.8 203.0Z"/><path d="M381.8 142.4L384.8 141.3L387.3 139.7L390.0 138.2L391.8 135.7L391.6 135.5L389.3 137.3L386.5 138.7L384.1 140.4L381.6 142.2Z"/><path d="M360.4 251.3L364.0 250.6L367.4 249.2L370.4 247.2L373.7 245.6L376.9 243.9L380.1 242.1L383.2 240.0L383.1 239.8L379.7 241.2L376.6 243.1L373.1 244.2L370.1 246.3L366.8 248.0L363.7 250.0L360.3 251.2Z"/><path d="M355.7 182.2L358.6 179.8L362.1 178.4L365.2 176.4L367.8 173.6L370.1 170.5L370.0 170.3L367.0 172.6L364.4 175.3L361.2 177.2L358.2 179.4L355.5 181.9Z"/><path d="M418.5 152.9L421.6 151.1L423.9 148.3L426.1 145.5L428.3 142.6L428.1 142.4L425.5 144.8L423.4 147.8L421.2 150.7L418.3 152.7Z"/><path d="M375.0 205.9L377.8 203.7L380.1 201.0L382.2 198.2L384.3 195.4L386.1 192.2L388.3 189.5L388.0 189.2L385.6 191.8L383.5 194.6L381.6 197.7L379.3 200.3L377.3 203.2L374.9 205.8Z"/><path d="M346.1 244.4L349.2 242.1L352.3 239.9L355.6 237.8L358.8 235.8L361.9 233.5L364.7 230.8L364.6 230.6L361.7 233.1L358.4 235.2L355.1 237.2L351.9 239.2L348.9 241.7L345.9 244.2Z"/><path d="M308.3 192.1L311.8 191.0L314.8 189.1L318.0 187.4L321.1 185.6L323.9 183.4L326.9 181.4L330.3 180.1L333.4 178.4L333.3 178.2L329.8 179.3L326.6 180.8L323.5 182.7L320.6 184.7L317.4 186.4L314.3 188.1L311.5 190.5L308.1 191.8Z"/><path d="M365.3 249.3L367.3 249.5L369.1 249.0L371.1 249.3L372.7 248.2L372.7 248.0L370.9 248.4L369.0 248.6L367.2 249.0L365.3 249.2Z"/><path d="M379.6 213.5L382.3 212.9L385.1 212.2L387.5 210.9L389.8 209.4L389.7 209.2L386.9 209.7L384.4 210.8L381.8 211.8L379.4 213.3Z"/><path d="M358.1 256.9L359.8 256.4L361.3 255.5L363.0 255.1L364.5 254.1L364.3 253.6L362.5 253.6L360.8 253.8L359.2 254.7L357.9 256.4Z"/><path d="M343.9 179.9L347.5 179.5L350.9 178.2L354.2 176.8L357.7 175.9L361.4 175.6L364.8 174.2L368.2 172.9L368.1 172.7L364.6 173.4L361.1 174.6L357.5 175.1L354.0 175.9L350.6 177.2L347.3 178.9L343.8 179.8Z"/><path d="M363.4 173.1L366.3 170.9L368.9 168.4L371.8 166.3L374.7 164.1L376.6 160.9L376.2 160.6L373.5 162.9L370.5 165.0L368.1 167.7L365.1 169.7L363.1 172.8Z"/><path d="M391.6 176.2L395.1 174.7L398.6 173.1L402.2 171.9L405.8 170.8L409.4 169.4L413.0 168.2L416.6 166.9L420.3 165.7L420.2 165.5L416.5 166.4L412.8 167.4L409.2 168.7L405.6 170.0L401.9 171.0L398.4 172.6L394.9 174.2L391.5 176.1Z"/><path d="M380.7 166.4L383.2 165.0L385.6 163.3L387.9 161.7L390.4 160.3L390.3 160.1L387.3 160.7L385.0 162.3L382.5 163.8L380.6 166.2Z"/><path d="M391.1 156.6L394.4 156.1L397.8 156.0L401.0 155.3L404.2 154.4L404.1 154.0L400.7 154.2L397.2 154.3L394.1 155.2L390.9 156.2Z"/><path d="M411.0 151.8L415.2 151.2L419.2 149.9L423.3 148.9L427.3 147.6L431.4 146.9L431.3 146.7L427.1 147.2L423.1 148.3L419.0 149.1L415.1 150.7L411.0 151.5Z"/><path d="M350.0 272.3L353.6 272.0L357.3 272.1L360.7 271.2L364.3 270.8L367.6 269.4L371.1 268.8L374.6 268.2L374.6 268.0L371.0 268.2L367.4 268.5L364.1 269.8L360.6 270.6L357.1 271.2L353.5 271.5L350.0 272.1Z"/><path d="M370.0 189.6L373.4 187.5L375.9 184.5L378.7 181.7L381.7 179.2L384.0 176.0L383.7 175.8L380.8 178.3L377.7 180.7L374.9 183.5L372.5 186.6L369.8 189.4Z"/><path d="M394.8 192.0L397.7 190.7L400.8 190.4L403.7 189.2L406.3 187.4L406.3 187.2L403.4 188.5L400.6 189.7L397.5 190.2L394.8 191.9Z"/><path d="M417.5 128.4L421.3 126.3L425.1 124.0L429.0 122.1L432.9 120.2L432.8 119.9L428.7 121.4L424.8 123.4L421.1 125.7L417.5 128.2Z"/><path d="M402.4 157.0L405.7 155.1L409.3 154.0L412.5 151.8L415.6 149.6L415.5 149.3L412.0 150.8L408.8 153.0L405.3 154.3L402.2 156.7Z"/><path d="M350.1 175.1L353.4 173.2L356.4 170.8L358.9 167.9L361.6 165.1L364.0 162.2L367.3 160.2L370.2 157.7L370.1 157.5L367.0 159.8L363.7 161.7L361.0 164.5L358.4 167.2L355.7 170.0L352.9 172.6L350.0 175.0Z"/><path d="M402.7 139.5L406.1 138.4L409.1 136.6L412.3 135.1L415.4 133.4L418.6 131.9L421.9 130.7L425.1 129.1L427.8 126.8L430.8 124.8L430.7 124.6L427.5 126.1L424.3 127.7L421.3 129.4L417.9 130.6L414.8 132.2L411.5 133.6L408.4 135.2L405.6 137.5L402.6 139.2Z"/><path d="M399.6 175.0L403.4 174.3L407.2 173.8L411.0 173.2L414.9 172.8L418.3 170.9L422.2 170.4L426.0 169.9L429.5 167.9L429.4 167.7L425.7 168.8L421.8 169.1L418.1 169.8L414.5 171.2L410.7 171.8L407.0 172.9L403.2 173.4L399.5 174.7Z"/><path d="M337.8 180.6L341.4 179.1L344.9 177.6L348.4 175.8L352.1 174.6L352.0 174.4L348.1 175.1L344.5 176.7L341.0 178.3L337.7 180.4Z"/><path d="M353.1 271.8L355.8 269.5L358.7 267.6L361.9 265.9L364.2 263.1L367.4 261.6L369.7 258.8L371.9 255.9L374.4 253.3L374.2 253.1L371.4 255.2L368.6 257.4L366.1 259.9L363.2 261.9L360.6 264.3L357.8 266.4L355.3 269.0L352.9 271.5Z"/><circle cx="292.1" cy="254.2" r="1.9"/><circle cx="332.8" cy="199.7" r="1.9"/><circle cx="322.9" cy="167.9" r="1.2"/><circle cx="350.9" cy="198.4" r="1.1"/><circle cx="388.5" cy="185.0" r="1.1"/><circle cx="385.0" cy="173.9" r="1.9"/><circle cx="300.1" cy="329.0" r="0.8"/><circle cx="377.7" cy="173.6" r="1.8"/><circle cx="406.6" cy="144.8" r="1.0"/><circle cx="354.1" cy="245.4" r="1.6"/><circle cx="316.6" cy="277.8" r="1.0"/><circle cx="307.5" cy="320.7" r="1.2"/><circle cx="297.1" cy="263.3" r="0.9"/><circle cx="186.0" cy="218.4" r="1.7"/><circle cx="395.0" cy="151.5" r="1.4"/><circle cx="294.2" cy="238.5" r="1.2"/><circle cx="221.4" cy="278.9" r="0.8"/><circle cx="368.1" cy="217.1" r="1.9"/><circle cx="279.4" cy="324.8" r="1.2"/><circle cx="421.2" cy="157.8" r="1.3"/><circle cx="280.6" cy="238.8" r="1.1"/><circle cx="241.1" cy="308.5" r="1.1"/><circle cx="163.3" cy="225.8" r="1.8"/><circle cx="407.4" cy="182.2" r="1.5"/><circle cx="337.5" cy="210.2" r="1.2"/><circle cx="308.3" cy="178.7" r="1.0"/><circle cx="164.7" cy="231.7" r="1.7"/><circle cx="341.2" cy="203.4" r="1.9"/><circle cx="379.3" cy="163.2" r="1.0"/><circle cx="415.9" cy="149.0" r="1.2"/><circle cx="228.6" cy="235.6" r="0.8"/><circle cx="307.8" cy="220.6" r="1.8"/><circle cx="317.1" cy="242.2" r="1.4"/><circle cx="390.8" cy="165.3" r="1.3"/><circle cx="214.8" cy="294.6" r="1.0"/><circle cx="345.8" cy="174.4" r="1.9"/><circle cx="370.5" cy="154.0" r="1.6"/><circle cx="344.4" cy="272.2" r="1.8"/><circle cx="412.8" cy="146.2" r="1.1"/><circle cx="305.4" cy="227.9" r="1.4"/><circle cx="252.9" cy="223.6" r="1.0"/><circle cx="374.5" cy="161.8" r="1.6"/><circle cx="199.0" cy="237.5" r="1.0"/><circle cx="395.1" cy="157.9" r="1.0"/><circle cx="201.3" cy="272.1" r="1.4"/><circle cx="222.9" cy="306.9" r="1.9"/><circle cx="346.6" cy="222.6" r="1.7"/><circle cx="246.5" cy="334.8" r="1.3"/><circle cx="293.4" cy="282.2" r="1.2"/></g><g fill="#5c184e"><ellipse cx="140" cy="228" rx="6" ry="4.5" transform="rotate(-25 140 228)"/><path d="M138 229.5 L142 227 L162 262 L159 264.5Z"/><path d="M121 241.5 L165 247.5 L165 250.5 L121 244.5Z"/><path d="M144 248 L147 248 L148.5 280 L145.5 280Z"/><circle cx="147" cy="282" r="2.8"/><ellipse cx="111" cy="237" rx="2.5" ry="1.6"/><circle cx="124" cy="243" r="2"/></g></g>
</svg>
<div id="status" class="a"></div>
<div class="t" style="left:1px;top:482px;font-size:9.6px">25M/38.3M</div>
<div class="a" style="left:94px;top:479px;width:1px;height:15px;background:#b8b8b8"></div>
<div class="a" style="left:108px;top:479px;width:1px;height:15px;background:#b8b8b8"></div>
<svg class="a" style="left:98px;top:482px" width="8" height="10" viewBox="0 0 8 10"><path d="M1 0.5 L7 5 L1 9.5Z" fill="#000"/></svg>
<svg class="a" style="left:114px;top:482px" width="6" height="9" viewBox="0 0 6 9"><path d="M5 0.5 L1 4.5 L5 8.5Z" fill="#a8a8a8"/></svg>
<svg class="a" style="left:0;top:380px" width="446" height="90" viewBox="0 380 446 90">
<g fill="none" stroke="#cc1ea0" stroke-width="1.4" stroke-linecap="round" stroke-linejoin="round">
<path d="M181.5 408 C172 418 163 430 156 434 C150 437 143 436 143 430 C143 424 150 421 160 421.5 C175 422.5 195 423 215 415"/>
<path d="M181.5 408 C179 418 178 428 178 435"/>
<path d="M186 433 C193 420 205 398 218 390 C226 386 232 392 228 400 C225 408 219 414 214 418"/>
<path d="M216 416 C210 428 196 444 182 458"/>
<path d="M200 425 L217 424"/>
<ellipse cx="211.5" cy="430" rx="4.2" ry="5.8"/>
<path d="M227 426 C224 423 219 425 219 431 C219 436 225 436 228 428 L227 436 C229 437 230 434 231 432"/>
<path d="M232 428 C234 425 236 423 237 424 C237 428 236 432 235 436 C238 428 241 424 245 424 C248 424 251 423 256 419"/>
<path d="M275 402.5 C266 418 254 435 249 448 C247 455 251 458 256 455 C263 451 269 444 271 435"/>
<path d="M257 416.5 L274 415.5"/>
<path d="M291 426 C288 422 282 425 282 431 C282 436 287 437 292 433"/>
<path d="M301 423.5 C296 424 294.5 428 294.5 431 C294.5 436 299 437 303 434 C306 431 306 424 301 423.5"/>
<path d="M307 437 C309 431 311 426 313 424 C314 428 313 433 312 437 C315 429 318 424 321 424 C322 428 321 433 320 437 C323 429 327 424 329 424 C331 428 331 433 333 435 C340 433 345 429 350 430 C354 431 354 434 352 436"/>
</g>
<circle cx="278.5" cy="434" r="1.3" fill="#d822a8"/>
</svg>
<div id="frameb" class="a"></div>

<!-- TOOLS PANEL -->
<div id="tools" class="a"></div>
<div class="t" style="left:8px;top:69px;font-size:12px;color:rgba(30,30,50,.3)">Vector Smart</div>
<div id="toolsbody" class="a"></div>
<div class="a" style="left:65px;top:57px;width:1px;height:43px;background:#9ea2a6"></div>
<div class="a" style="left:5px;top:73px;width:57px;height:10px;border-radius:3px 3px 0 0;background:linear-gradient(#f2f2f2,#d8d8d8)"></div>
<div class="a" style="left:5px;top:82px;width:57px;height:1px;background:#fff"></div>
<div class="a" style="left:6px;top:84px;width:55px;height:23px;background:linear-gradient(#3c7ad0,#2258ac 60%,#1a4a98);border-top:1px solid #5a96e0"></div>
<div class="t" style="left:14px;top:89px;font-size:14px;letter-spacing:-0.6px;color:#fff">Ps</div>
<svg class="a" style="left:7px;top:62px" width="10" height="8" viewBox="0 0 10 8"><path d="M0.5 4 L4.5 0.5 L4.5 7.5Z M5 4 L9 0.5 L9 7.5Z" fill="#c8c8c8"/></svg>
<svg class="a" style="left:0;top:0" width="66" height="480" viewBox="0 0 66 480"><defs><linearGradient id="tb" x1="0" y1="0" x2="0" y2="1"><stop offset="0" stop-color="#c4c4c4"/><stop offset="1" stop-color="#e6e6e6"/></linearGradient><linearGradient id="gr" x1="0" y1="0" x2="1" y2="0"><stop offset="0" stop-color="#fff"/><stop offset="1" stop-color="#000"/></linearGradient><radialGradient id="dr" cx="0.35" cy="0.6" r="0.7"><stop offset="0" stop-color="#fff"/><stop offset="1" stop-color="#888"/></radialGradient><radialGradient id="db" cx="0.35" cy="0.35" r="0.7"><stop offset="0" stop-color="#aaa"/><stop offset="0.5" stop-color="#222"/><stop offset="1" stop-color="#000"/></radialGradient><linearGradient id="win" x1="0" y1="0" x2="0" y2="1"><stop offset="0" stop-color="#3a8ee8"/><stop offset="1" stop-color="#cfe6ff"/></linearGradient><linearGradient id="smb" x1="0" y1="0" x2="0" y2="1"><stop offset="0" stop-color="#f6f6f6"/><stop offset="1" stop-color="#d4d4d4"/></linearGradient></defs><rect x="12.5" y="112.5" width="14" height="14" fill="none" stroke="#222" stroke-width="1.2" stroke-dasharray="3 2"/><path d="M28 128 L31 125 L31 128Z" fill="#000"/><rect x="33.5" y="111.5" width="24" height="18" rx="3" fill="url(#tb)" stroke="#6a6a6a"/><path d="M37 113 L45.5 121 L40.5 121 L37 124Z" fill="#000"/><path d="M37 113.5 L40 117 L40 121 L37 124Z" fill="#888"/><g transform="translate(49.5,124) scale(1.1)" fill="#000" stroke="#fff" stroke-width="0.5"><path d="M0 -4.5 L2.2 -2.3 L0.8 -2.3 L0.8 -0.8 L2.3 -0.8 L2.3 -2.2 L4.5 0 L2.3 2.2 L2.3 0.8 L0.8 0.8 L0.8 2.3 L2.2 2.3 L0 4.5 L-2.2 2.3 L-0.8 2.3 L-0.8 0.8 L-2.3 0.8 L-2.3 2.2 L-4.5 0 L-2.3 -2.2 L-2.3 -0.8 L-0.8 -0.8 L-0.8 -2.3 L-2.2 -2.3Z"/></g><path d="M12.5 134 L20 138 L27 133 L26 145 L17 144 L15 149" fill="none" stroke="#333" stroke-width="1.1"/><circle cx="16.5" cy="144.5" r="1.6" fill="none" stroke="#333"/><path d="M28 150 L31 147 L31 150Z" fill="#000"/><path d="M42 140 L53 149" stroke="#111" stroke-width="2.2"/><path d="M40 133 L40 147 M33 140 L47 140 M35 135 L45 145 M45 135 L35 145" stroke="#666" stroke-width="0.8"/><circle cx="40" cy="140" r="1.5" fill="#fff"/><path d="M53 150 L56 147 L56 150Z" fill="#000"/><path d="M16 156 L16 168 L28 168 M12 159 L25 159 L25 172" fill="none" stroke="#222" stroke-width="1.8"/><path d="M16 168 L25 159" stroke="#555" stroke-width="0.8"/><path d="M36 171 L44 163 L50 157 L53 158 L47 166 Z" fill="#666" stroke="#222" stroke-width="0.8"/><path d="M42 158 L50 168" stroke="#222" stroke-width="1"/><path d="M53 173 L56 170 L56 173Z" fill="#000"/><rect x="5" y="177" width="57" height="1" fill="#b8b8b8"/><rect x="5" y="178" width="57" height="1" fill="#fafafa"/><circle cx="20" cy="190" r="6" fill="none" stroke="#333" stroke-width="1.6" stroke-dasharray="1.2 1"/><circle cx="20" cy="190" r="4" fill="#ddd"/><path d="M28 197 L31 194 L31 197Z" fill="#000"/><path d="M54 183 L45 191" stroke="#333" stroke-width="2.2"/><path d="M46 190 Q43 189 40 193 Q39 196 37.5 197 Q43 197 46 193Z" fill="#555" stroke="#222" stroke-width="0.6"/><path d="M53 197 L56 194 L56 197Z" fill="#000"/><circle cx="19.5" cy="206.5" r="2.6" fill="#444"/><rect x="18.5" y="208" width="2" height="4" fill="#444"/><rect x="13" y="212" width="13" height="7" rx="1.5" fill="#ddd" stroke="#333"/><path d="M16 215 L23 215 L19.5 219Z" fill="#222"/><path d="M28 220 L31 217 L31 220Z" fill="#000"/><path d="M54 205 L46 213" stroke="#333" stroke-width="2"/><path d="M47 212 Q44 211 41 215 Q40 218 38.5 219 Q44 219 47 215Z" fill="#555" stroke="#222" stroke-width="0.6"/><path d="M40 208 Q45 203 50 206" fill="none" stroke="#333" stroke-width="1"/><path d="M53 212 Q54 217 50 220" fill="none" stroke="#333" stroke-width="1" stroke-dasharray="1 1"/><path d="M53 220 L56 217 L56 220Z" fill="#000"/><path d="M13 238 L20 229 L28 229 L21 238Z" fill="#fafafa" stroke="#222"/><path d="M13 238 L21 238 L21 240 L13 240Z" fill="#999" stroke="#222" stroke-width="0.6"/><path d="M28 240 L31 237 L31 240Z" fill="#000"/><rect x="37.5" y="228.5" width="15" height="11" fill="url(#gr)" stroke="#222"/><path d="M53 240 L56 237 L56 240Z" fill="#000"/><path d="M19.5 248 Q14 256 14.5 258.5 Q15 262.5 19.5 262.5 Q24 262.5 24.5 258.5 Q25 256 19.5 248Z" fill="url(#dr)" stroke="#444" stroke-width="0.8"/><path d="M28 263 L31 260 L31 263Z" fill="#000"/><circle cx="42" cy="254" r="4.2" fill="url(#db)"/><path d="M45 257 L51 263" stroke="#222" stroke-width="1.3"/><path d="M53 263 L56 260 L56 263Z" fill="#000"/><rect x="5" y="268" width="57" height="1" fill="#b8b8b8"/><rect x="5" y="269" width="57" height="1" fill="#fafafa"/><path d="M18.5 273 L22.5 281 L20.5 285 L16.5 285 L14.5 281Z" fill="#fff" stroke="#111" stroke-width="1.1"/><path d="M18.5 276 L18.5 282" stroke="#111"/><rect x="15.5" y="286" width="6" height="3" fill="#111"/><path d="M28 290 L31 287 L31 290Z" fill="#000"/><text x="38.5" y="288.5" font-family="Liberation Serif" font-size="18" fill="#111">T</text><path d="M53 290 L56 287 L56 290Z" fill="#000"/><path d="M15 297.5 L23.5 305.5 L20 306 L22.5 310.5 L20.8 311.3 L18.4 306.8 L15 309.5Z" fill="#111"/><path d="M28 313 L31 310 L31 313Z" fill="#000"/><path d="M38 309 Q36 305 40 303 Q42 298 46 300 Q50 297 52 300 Q55 302 51 305 Q53 309 49 309 Q47 313 44 310 Q40 313 38 309Z" fill="#ccc" stroke="#555" stroke-width="1"/><path d="M53 313 L56 310 L56 313Z" fill="#000"/><rect x="5" y="317" width="57" height="1" fill="#b8b8b8"/><rect x="5" y="318" width="57" height="1" fill="#fafafa"/><path d="M12 327.5 L15.5 327.5 L20 323.5 L20 337 L15.5 333 L12 333Z" fill="#ddd" stroke="#333" stroke-width="0.9"/><path d="M22.5 327 Q24.5 330 22.5 333.5 M25 325 Q28.5 330 25 335.5" fill="none" stroke="#444" stroke-width="1"/><path d="M28 337 L31 334 L31 337Z" fill="#000"/><path d="M38 337 L47 327" stroke="#333" stroke-width="2.2"/><path d="M38.5 336.5 L46 328" stroke="#eee" stroke-width="0.8"/><path d="M46 325 L50 329 M48 323 Q52 321 53 324 Q53 327 51 328Z" stroke="#111" stroke-width="2" fill="#111"/><path d="M53 337 L56 334 L56 337Z" fill="#000"/><path d="M13 350 Q12 348 14 348 L18 353 L16 345 Q16 343 18 344 L20 350 L20 343 Q21 341 22 343 L23 350 L24 345 Q25 343 26 345 L26 354 Q26 359 21 360 Q17 360 15 356Z" fill="#f4f4f4" stroke="#333" stroke-width="0.9"/><circle cx="41.5" cy="349.5" r="4.5" fill="#fff" stroke="#222" stroke-width="1.5"/><path d="M45 353 L51 359" stroke="#111" stroke-width="2.2"/><rect x="24.5" y="383.5" width="27" height="27" fill="#000" stroke="#fff" stroke-width="1"/><rect x="24" y="383" width="28" height="28" fill="none" stroke="#aaa" stroke-width="0.5"/><rect x="12.5" y="371.5" width="27" height="26" fill="#000" stroke="#fff" stroke-width="1.2"/><rect x="12" y="371" width="28" height="27" fill="none" stroke="#999" stroke-width="0.5"/><path d="M45 372 Q50 371 51 376 M49.5 375 L51 377.5 L53 375 M44 372.5 L46 370.5 L46 374Z" fill="none" stroke="#222" stroke-width="1"/><rect x="14.5" y="406.5" width="6" height="6" fill="#fff" stroke="#555"/><rect x="11" y="403" width="6" height="6" fill="#111"/><rect x="23.5" y="422.5" width="21" height="16" fill="#fafafa" stroke="#444"/><circle cx="34" cy="430.5" r="5.3" fill="#fff" stroke="#222" stroke-width="1"/><rect x="15.5" y="446.5" width="38" height="19" rx="3" fill="url(#smb)" stroke="#9a9a9a"/><rect x="22.5" y="453.5" width="13" height="10" fill="url(#win)" stroke="#2a66c0"/><rect x="29.5" y="448.5" width="15" height="11" fill="url(#win)" stroke="#2a66c0"/><rect x="30" y="449" width="14" height="2.5" fill="#1a5ac8"/><path d="M49 464 L52 461 L52 464Z" fill="#000"/></svg>
<!-- LAYERS PANEL -->
<div id="lp" class="a"></div>
<div id="lpbody" class="a"></div>
<div class="a" style="left:449px;top:88px;width:195px;height:26px;border-radius:3px 0 0 0;background:linear-gradient(#f7f7f7,#e6e6e6 60%,#d9d9d9)"></div>
<div class="a" style="left:449px;top:113px;width:195px;height:1px;background:#c4c4c4"></div>
<div class="a" style="left:508px;top:96px;width:74px;height:18px;border:1px solid #9c9c9c;border-bottom:none;border-radius:3px 3px 0 0;background:linear-gradient(#eeeeee,#d3d3d3)"></div>
<div class="a" style="left:454px;top:96px;width:54px;height:19px;border:1px solid #8e8e8e;border-bottom:none;border-radius:3px 3px 0 0;background:#efefef"></div>
<div class="lt" style="left:461px;top:101px;font-size:10.5px;color:#2c2440">Layers</div>
<svg class="a" style="left:495px;top:103px" width="8" height="8" viewBox="0 0 8 8"><path d="M0.5 0.5 L7.5 7.5 M7.5 0.5 L0.5 7.5" stroke="#606060" stroke-width="1.1"/></svg>
<div class="lt" style="left:515px;top:101px;font-size:10.8px;color:#2c2440">Tool Presets</div>
<svg class="a" style="left:636px;top:104px" width="8" height="10" viewBox="0 0 8 10"><path d="M1 9 L8 2 L8 9Z" fill="#c8c8c8"/><path d="M4 5 L7 5 L5.5 7Z" fill="#333"/></svg>
<div class="a" style="left:454px;top:118px;width:105px;height:19px;background:#fff;border:1px solid #d6d6d6;border-radius:2px"></div>
<div class="lt" style="left:457px;top:123px;font-size:10.2px;color:#141428">Normal</div>
<svg class="a" style="left:546px;top:125px" width="9" height="7" viewBox="0 0 9 7"><path d="M1 1.5 L8 1.5 L4.5 5.5Z" fill="#000"/></svg>
<div class="lt" style="left:562px;top:123px;font-size:10.4px;color:#141428">Opacity:</div>
<div class="a" style="left:603px;top:118px;width:36px;height:18px;background:#fff;border:1px solid #a8a8a8"></div>
<div class="lt" style="left:609px;top:124px;font-size:10.2px;color:#141414">100%</div>
<div class="a" style="left:639px;top:118px;width:8px;height:18px;background:linear-gradient(90deg,#f4f4f4,#d4d4d4);border:1px solid #a8a8a8"></div>
<div class="a" style="left:449px;top:138px;width:195px;height:1px;background:#b4b4b4"></div>
<div class="a" style="left:449px;top:139px;width:195px;height:1px;background:#f8f8f8"></div>
<div class="lt" style="left:457px;top:148px;font-size:10.5px;color:#141428">Lock:</div>
<svg class="a" style="left:488px;top:146px" width="64" height="14" viewBox="0 0 64 14"><rect x="1.5" y="1.5" width="10" height="10" fill="#fff" stroke="#2a2a2a"/><rect x="2" y="2" width="3" height="3" fill="#c8c8c8"/><rect x="8" y="2" width="3" height="3" fill="#c8c8c8"/><rect x="5" y="5" width="3" height="3" fill="#c8c8c8"/><rect x="2" y="8" width="3" height="3" fill="#c8c8c8"/><rect x="8" y="8" width="3" height="3" fill="#c8c8c8"/><path d="M30.5 1 L24.5 7" stroke="#2a2a2a" stroke-width="1.8" stroke-linecap="round"/><path d="M25.5 5.5 C28 7.5 25 10.5 21 12.2 C18.5 13.2 17 13.3 18 12 C19.5 10 22 7 25.5 5.5Z" fill="#3a3a3a"/><path d="M24.5 7 C22.5 8.5 20.5 10.5 19 12" stroke="#cfcfcf" stroke-width="0.8" fill="none"/><g stroke="#000" stroke-width="1.2"><path d="M40.5 2.5 L40.5 11.5 M35.5 7 L45.5 7"/></g><g fill="#000"><path d="M40.5 0.5 L43 3.2 L38 3.2Z M40.5 13.5 L43 10.8 L38 10.8Z M34 7 L36.7 4.5 L36.7 9.5Z M47 7 L44.3 4.5 L44.3 9.5Z"/></g><path d="M54.5 7 L54.5 5 Q54.5 2 57.5 2 Q60.5 2 60.5 5 L60.5 7" fill="none" stroke="#333" stroke-width="1.5"/><rect x="52.5" y="6.5" width="10" height="6.5" rx="1" fill="#1a1a1a"/><rect x="53" y="8.3" width="9" height="0.6" fill="#666"/><rect x="53" y="10.3" width="9" height="0.6" fill="#666"/><rect x="57" y="8.5" width="1.2" height="2.5" fill="#777"/></svg>
<div class="lt" style="left:585px;top:149px;font-size:10.3px;color:#141428">Fill:</div>
<div class="a" style="left:603px;top:144px;width:36px;height:18px;background:#fff;border:1px solid #a8a8a8"></div>
<div class="lt" style="left:609px;top:150px;font-size:10.2px;color:#141414">0%</div>
<div class="a" style="left:639px;top:144px;width:8px;height:18px;background:linear-gradient(90deg,#f4f4f4,#d4d4d4);border:1px solid #a8a8a8"></div>
<div class="a" style="left:449px;top:164px;width:195px;height:1px;background:#a8a8a8"></div>
<div class="a" style="left:473px;top:165px;width:1px;height:327px;background:#a4a4a4"></div>
<div class="a" style="left:454px;top:165px;width:16px;height:13px;background:#f4f4f4;border:1px solid #e0e0e0;border-top:none"></div>
<svg class="a" style="left:455px;top:165px" width="14" height="11" viewBox="0 0 14 11"><path d="M1.3 4.2 Q6 -0.6 12 3.6" fill="none" stroke="#1a1a1a" stroke-width="1.5"/><path d="M2.3 4.4 Q6 1.6 10.8 3.8" fill="none" stroke="#999" stroke-width="0.6"/><circle cx="6.2" cy="5.3" r="3.1" fill="#000"/><circle cx="5.2" cy="4.9" r="0.8" fill="#fff"/><path d="M2.3 7.2 Q6.5 10.8 11.3 6.4" fill="none" stroke="#1a1a1a" stroke-width="1.3"/></svg>
<svg class="a" style="left:477px;top:167px" width="11" height="9" viewBox="0 0 11 9"><path d="M1 0.5 L10 0.5 L5.5 8.5Z" fill="#777"/></svg>
<div class="a" style="left:495px;top:165px;width:15px;height:11px;border:1px solid #808080;background:linear-gradient(#e4e4e4,#a8a8a8);border-radius:1px"></div>
<div class="lt" style="left:523px;top:167px;font-size:10.3px;color:#141428">Group 2 copy 2</div>
<div class="a" style="left:501px;top:180px;width:141px;height:1px;background:#a8a8a8"></div>
<div class="a" style="left:642px;top:170px;width:1px;height:74px;background:#bdbdbd"></div>
<div class="a" style="left:454px;top:205px;width:16px;height:16px;background:#f2f2f2;border:1px solid #c4c4c4"></div>
<div class="a" style="left:505px;top:188px;width:57px;height:50px;border:1px solid #000;box-shadow:0 0 0 1px #fff;background:conic-gradient(#fff 0 25%,#cccccc 0 50%,#fff 0 75%,#cccccc 0) 0 0/8px 8px;"></div>
<svg class="a" style="left:507px;top:190px" width="53" height="46" viewBox="0 0 53 46"><g fill="none" stroke-linecap="round"><path d="M5.0 17.0 C5.0 9.0 14.0 7.0 20.0 13.0 C25.0 7.0 37.0 7.0 37.0 17.0 C37.0 24.0 27.0 30.0 22.0 34.0 C15.0 29.0 5.0 24.0 5.0 17.0Z" fill="#c828c8"/><path d="M18.9 17.3L20.5 16.4" stroke="#ffffff" stroke-width="1.3"/><path d="M18.5 23.6L20.9 23.4" stroke="#d838d8" stroke-width="1.3"/><path d="M15.4 26.9L17.8 25.9" stroke="#a018b0" stroke-width="1.2"/><path d="M35.1 11.9L37.1 12.0" stroke="#e878e8" stroke-width="1.2"/><path d="M34.6 17.6L37.0 17.4" stroke="#f050f0" stroke-width="0.6"/><path d="M15.9 20.2L17.4 20.3" stroke="#f050f0" stroke-width="0.9"/><path d="M28.7 11.7L32.3 11.8" stroke="#a018b0" stroke-width="0.9"/><path d="M4.2 20.9L7.9 19.9" stroke="#d838d8" stroke-width="0.9"/><path d="M28.8 22.9L30.3 22.5" stroke="#a018b0" stroke-width="1.3"/><path d="M7.2 21.0L10.5 20.3" stroke="#ffffff" stroke-width="1.3"/><path d="M29.7 8.7L32.1 8.3" stroke="#7a1890" stroke-width="1.3"/><path d="M8.7 12.3L12.4 11.2" stroke="#ffffff" stroke-width="1.2"/><path d="M13.9 18.9L15.8 18.2" stroke="#f050f0" stroke-width="1.0"/><path d="M12.7 14.7L15.4 13.9" stroke="#ffffff" stroke-width="0.6"/><path d="M30.4 20.5L33.7 20.3" stroke="#7a1890" stroke-width="0.8"/><path d="M24.6 8.7L28.0 8.9" stroke="#ffffff" stroke-width="1.0"/><path d="M15.4 25.7L17.2 25.0" stroke="#f050f0" stroke-width="1.3"/><path d="M11.7 11.2L13.3 10.3" stroke="#7a1890" stroke-width="0.7"/><path d="M9.1 17.7L12.0 16.8" stroke="#a018b0" stroke-width="1.4"/><path d="M18.5 14.7L22.2 13.4" stroke="#f050f0" stroke-width="1.2"/><path d="M3.8 19.6L6.9 18.6" stroke="#a018b0" stroke-width="1.2"/><path d="M25.4 14.4L28.3 13.5" stroke="#f050f0" stroke-width="1.1"/><path d="M11.4 10.4L14.6 9.0" stroke="#a018b0" stroke-width="1.3"/><path d="M32.6 12.1L35.2 11.6" stroke="#f050f0" stroke-width="1.1"/><path d="M7.3 19.9L11.2 20.1" stroke="#f050f0" stroke-width="1.0"/><path d="M22.6 23.2L25.2 22.7" stroke="#d838d8" stroke-width="0.8"/><path d="M25.0 21.8L27.3 21.6" stroke="#f050f0" stroke-width="1.2"/><path d="M5.8 20.3L7.4 20.2" stroke="#d838d8" stroke-width="1.3"/><path d="M22.9 16.9L26.6 16.8" stroke="#d838d8" stroke-width="0.8"/><path d="M22.7 20.9L24.6 19.9" stroke="#f050f0" stroke-width="1.1"/><path d="M26.6 17.9L28.2 17.7" stroke="#a018b0" stroke-width="0.8"/><path d="M24.3 22.5L26.7 21.2" stroke="#f050f0" stroke-width="1.2"/><path d="M31.8 9.1L34.2 9.0" stroke="#a018b0" stroke-width="0.8"/><path d="M25.4 8.5L27.1 8.3" stroke="#a018b0" stroke-width="0.6"/><path d="M15.3 24.6L17.3 24.2" stroke="#a018b0" stroke-width="0.8"/><path d="M19.9 18.7L23.5 17.5" stroke="#a018b0" stroke-width="1.0"/><path d="M25.2 26.1L26.8 25.4" stroke="#e878e8" stroke-width="0.6"/><path d="M5.4 15.4L7.4 15.0" stroke="#e878e8" stroke-width="1.1"/><path d="M12.0 20.1L15.7 19.0" stroke="#e878e8" stroke-width="1.0"/><path d="M16.6 15.8L18.4 15.0" stroke="#d838d8" stroke-width="1.0"/><path d="M25.7 17.9L28.6 16.4" stroke="#d838d8" stroke-width="1.2"/><path d="M21.1 19.7L24.7 19.6" stroke="#ffffff" stroke-width="0.9"/><path d="M20.4 19.7L21.8 19.1" stroke="#a018b0" stroke-width="1.3"/><path d="M24.7 18.3L28.1 16.7" stroke="#d838d8" stroke-width="1.0"/><path d="M21.9 29.9L25.0 28.5" stroke="#e878e8" stroke-width="0.7"/><path d="M18.6 31.2L21.8 31.0" stroke="#e878e8" stroke-width="1.3"/><path d="M12.0 21.5L14.5 20.4" stroke="#a018b0" stroke-width="1.4"/><path d="M28.4 16.0L31.4 16.1" stroke="#f050f0" stroke-width="1.0"/><path d="M21.9 22.1L25.7 21.1" stroke="#e878e8" stroke-width="1.2"/><path d="M8.9 22.5L12.3 21.0" stroke="#d838d8" stroke-width="0.8"/><path d="M29.6 16.3L32.1 16.2" stroke="#7a1890" stroke-width="0.9"/><path d="M17.8 27.5L19.6 26.7" stroke="#ffffff" stroke-width="0.7"/><path d="M4.2 16.2L7.9 16.4" stroke="#a018b0" stroke-width="1.2"/><path d="M25.9 16.2L27.7 15.2" stroke="#d838d8" stroke-width="1.4"/><path d="M12.1 10.1L14.3 9.5" stroke="#a018b0" stroke-width="0.6"/><path d="M20.0 22.8L23.6 22.9" stroke="#a018b0" stroke-width="1.2"/><path d="M16.2 28.0L19.8 27.4" stroke="#ffffff" stroke-width="1.1"/><path d="M10.4 24.7L13.8 22.8" stroke="#a018b0" stroke-width="0.9"/><path d="M28.4 25.3L30.8 24.2" stroke="#f050f0" stroke-width="1.3"/><path d="M11.4 14.8L12.9 14.4" stroke="#e878e8" stroke-width="1.1"/><path d="M15.2 24.7L17.5 24.3" stroke="#f050f0" stroke-width="1.3"/><path d="M5.2 12.4L7.2 11.8" stroke="#e878e8" stroke-width="1.3"/><path d="M22.2 26.5L23.9 26.4" stroke="#a018b0" stroke-width="1.2"/><path d="M20.1 30.5L22.5 30.6" stroke="#e878e8" stroke-width="1.1"/><path d="M27.8 21.2L30.3 20.7" stroke="#e878e8" stroke-width="0.7"/><path d="M17.7 14.5L21.2 14.2" stroke="#f050f0" stroke-width="1.0"/><path d="M3.5 16.9L6.6 16.0" stroke="#e878e8" stroke-width="1.1"/><path d="M35.4 18.1L39.3 17.6" stroke="#d838d8" stroke-width="0.7"/><path d="M25.5 18.5L26.9 18.1" stroke="#a018b0" stroke-width="0.9"/><path d="M22.4 12.4L25.2 11.3" stroke="#a018b0" stroke-width="0.9"/><path d="M20.2 15.7L23.6 14.2" stroke="#e878e8" stroke-width="0.9"/><path d="M18.7 25.1L21.4 24.8" stroke="#e878e8" stroke-width="1.2"/><path d="M20.4 26.7L23.9 26.5" stroke="#d838d8" stroke-width="0.7"/><path d="M19.3 18.3L21.9 17.7" stroke="#d838d8" stroke-width="0.7"/><path d="M33.1 20.9L35.7 20.7" stroke="#e878e8" stroke-width="1.0"/><path d="M13.1 11.2L16.3 10.9" stroke="#e878e8" stroke-width="0.9"/><path d="M19.0 31.5L21.3 31.6" stroke="#ffffff" stroke-width="1.2"/><path d="M24.1 29.7L25.7 29.2" stroke="#7a1890" stroke-width="0.9"/><path d="M33.0 15.0L35.4 13.7" stroke="#d838d8" stroke-width="0.8"/><path d="M10.9 12.4L13.8 11.2" stroke="#ffffff" stroke-width="1.1"/><path d="M20.8 18.4L23.9 17.2" stroke="#d838d8" stroke-width="0.8"/><path d="M5.2 13.8L7.1 13.7" stroke="#ffffff" stroke-width="1.2"/><path d="M23.2 9.9L25.9 9.8" stroke="#7a1890" stroke-width="1.1"/><path d="M13.2 12.7L16.7 12.1" stroke="#d838d8" stroke-width="0.8"/><path d="M14.9 19.8L17.2 19.2" stroke="#d838d8" stroke-width="0.8"/><path d="M11.3 22.9L13.2 22.9" stroke="#e878e8" stroke-width="0.7"/><path d="M23.3 18.1L26.8 17.4" stroke="#f050f0" stroke-width="0.6"/><path d="M26.8 11.6L28.3 10.9" stroke="#d838d8" stroke-width="1.3"/><path d="M27.4 14.8L30.3 13.5" stroke="#f050f0" stroke-width="0.7"/><path d="M25.0 10.8L27.6 10.0" stroke="#f050f0" stroke-width="0.8"/><path d="M21.9 24.8L25.0 24.6" stroke="#ffffff" stroke-width="0.6"/><path d="M28.2 21.8L31.6 20.5" stroke="#a018b0" stroke-width="1.4"/><path d="M25.8 26.0L28.9 24.6" stroke="#7a1890" stroke-width="1.3"/><path d="M27.8 27.1L29.3 27.0" stroke="#d838d8" stroke-width="1.3"/><path d="M27.5 11.8L30.9 11.2" stroke="#7a1890" stroke-width="1.1"/><path d="M21.4 30.0L24.2 28.5" stroke="#f050f0" stroke-width="1.0"/><path d="M31.5 11.8L34.3 10.9" stroke="#ffffff" stroke-width="0.8"/><path d="M15.3 8.7L16.9 7.8" stroke="#e878e8" stroke-width="0.9"/><path d="M8.2 23.2L10.6 22.4" stroke="#f050f0" stroke-width="1.2"/><path d="M25.3 22.3L27.9 22.5" stroke="#ffffff" stroke-width="1.0"/><path d="M18.1 20.6L20.1 20.1" stroke="#7a1890" stroke-width="1.4"/><path d="M22.8 10.4L24.6 9.8" stroke="#a018b0" stroke-width="0.7"/><path d="M13.5 24.1L16.6 24.0" stroke="#f050f0" stroke-width="0.7"/><path d="M11.0 20.6L13.6 20.5" stroke="#7a1890" stroke-width="0.8"/><path d="M31.9 21.4L33.9 20.4" stroke="#f050f0" stroke-width="0.7"/><path d="M32.0 15.7L35.7 15.6" stroke="#7a1890" stroke-width="1.3"/><path d="M26.0 27.9L27.9 27.4" stroke="#f050f0" stroke-width="1.2"/><path d="M3.8 18.9L5.9 17.9" stroke="#ffffff" stroke-width="1.1"/><path d="M19.1 10.8L21.0 10.3" stroke="#e878e8" stroke-width="1.2"/><path d="M12.8 22.0L14.3 22.1" stroke="#7a1890" stroke-width="1.2"/><path d="M6.2 17.2L8.6 16.9" stroke="#e878e8" stroke-width="0.9"/><path d="M16.2 25.2L20.1 25.3" stroke="#7a1890" stroke-width="0.8"/><path d="M10.6 22.4L13.0 22.5" stroke="#f050f0" stroke-width="1.3"/><path d="M17.0 15.3L19.6 14.6" stroke="#ffffff" stroke-width="1.4"/><path d="M26.3 18.5L28.7 18.4" stroke="#f050f0" stroke-width="0.9"/><path d="M14.3 11.9L16.0 11.6" stroke="#e878e8" stroke-width="1.1"/><path d="M25.9 22.6L28.9 22.7" stroke="#a018b0" stroke-width="1.3"/><path d="M11.8 20.4L15.5 20.6" stroke="#a018b0" stroke-width="0.6"/><path d="M19.5 28.5L22.5 27.6" stroke="#f050f0" stroke-width="1.1"/><path d="M13.3 8.9L14.9 8.9" stroke="#ffffff" stroke-width="1.2"/><path d="M30.6 12.6L33.0 12.6" stroke="#f050f0" stroke-width="0.8"/><path d="M12.8 8.2L16.4 8.5" stroke="#f050f0" stroke-width="1.1"/><path d="M7.7 12.4L10.5 12.3" stroke="#7a1890" stroke-width="0.6"/><path d="M28.4 24.6L31.1 24.6" stroke="#7a1890" stroke-width="1.4"/><path d="M10.5 21.2L13.3 20.6" stroke="#d838d8" stroke-width="1.1"/><path d="M22.4 25.0L25.5 23.3" stroke="#d838d8" stroke-width="0.6"/><path d="M14.4 15.7L16.2 15.5" stroke="#d838d8" stroke-width="1.3"/><path d="M21.2 18.0L24.3 16.8" stroke="#d838d8" stroke-width="1.1"/><path d="M28.1 13.4L29.8 12.5" stroke="#ffffff" stroke-width="0.8"/><path d="M21.1 15.8L22.6 15.0" stroke="#f050f0" stroke-width="0.8"/><path d="M4.8 13.7L7.6 12.9" stroke="#f050f0" stroke-width="0.9"/><path d="M29.2 10.2L32.2 8.8" stroke="#d838d8" stroke-width="1.2"/><path d="M13.0 12.3L16.6 10.9" stroke="#e878e8" stroke-width="1.3"/><path d="M35.4 15.6L38.1 15.7" stroke="#d838d8" stroke-width="1.3"/><path d="M14.0 16.6L15.9 16.3" stroke="#7a1890" stroke-width="1.2"/><path d="M7.4 19.1L9.8 19.2" stroke="#f050f0" stroke-width="0.8"/><path d="M17.4 23.7L19.5 23.7" stroke="#d838d8" stroke-width="0.8"/><path d="M5.1 12.4L7.6 12.0" stroke="#e878e8" stroke-width="0.6"/><path d="M13.5 24.2L15.4 24.1" stroke="#f050f0" stroke-width="1.4"/><path d="M19.5 24.7L22.1 23.9" stroke="#d838d8" stroke-width="1.0"/><path d="M27.3 21.5L29.7 21.3" stroke="#d838d8" stroke-width="0.8"/><path d="M20.0 19.6L22.0 19.4" stroke="#7a1890" stroke-width="1.1"/><path d="M34.1 19.3L36.1 19.5" stroke="#ffffff" stroke-width="0.7"/><path d="M7.6 10.7L11.0 10.1" stroke="#d838d8" stroke-width="0.8"/><path d="M22.8 21.6L24.3 21.6" stroke="#d838d8" stroke-width="1.0"/><path d="M5.4 15.7L8.0 15.7" stroke="#a018b0" stroke-width="0.6"/><path d="M31.8 15.4L34.5 13.9" stroke="#f050f0" stroke-width="1.3"/><path d="M38.5 13.1L40.3 10.8" stroke="#ddd" stroke-width="0.6"/><path d="M38.0 11.4L39.6 10.0" stroke="#888" stroke-width="0.8"/><path d="M46.0 3.2L49.2 2.0" stroke="#bbb" stroke-width="0.9"/><path d="M40.7 10.0L42.6 9.3" stroke="#bbb" stroke-width="1.1"/><path d="M30.9 12.9L32.6 11.2" stroke="#888" stroke-width="0.5"/><path d="M38.3 9.2L39.0 8.4" stroke="#fff" stroke-width="0.8"/><path d="M46.4 6.1L47.8 4.4" stroke="#bbb" stroke-width="1.0"/><path d="M50.9 6.9L52.7 5.3" stroke="#ddd" stroke-width="0.9"/><path d="M33.1 15.9L35.4 13.8" stroke="#ddd" stroke-width="0.9"/><path d="M44.1 6.7L46.6 5.7" stroke="#fff" stroke-width="0.8"/><path d="M35.4 9.0L36.4 8.4" stroke="#bbb" stroke-width="0.8"/><path d="M44.1 9.5L46.2 8.5" stroke="#888" stroke-width="0.5"/><path d="M32.8 12.1L34.3 11.0" stroke="#888" stroke-width="1.0"/><path d="M44.7 4.0L47.6 2.3" stroke="#ddd" stroke-width="0.7"/><path d="M38.5 13.2L39.9 12.6" stroke="#fff" stroke-width="0.9"/><path d="M35.4 12.0L36.3 10.9" stroke="#bbb" stroke-width="0.8"/><path d="M47.4 5.3L50.3 3.4" stroke="#ddd" stroke-width="0.9"/><path d="M46.2 9.3L47.9 7.6" stroke="#fff" stroke-width="0.6"/><path d="M41.4 7.4L42.7 5.9" stroke="#fff" stroke-width="0.7"/><path d="M36.8 6.1L38.5 4.9" stroke="#ddd" stroke-width="1.0"/><path d="M36.9 11.7L39.6 10.2" stroke="#ddd" stroke-width="0.9"/><path d="M35.8 12.8L37.8 10.9" stroke="#fff" stroke-width="0.9"/><path d="M45.9 9.9L47.5 8.3" stroke="#fff" stroke-width="0.6"/><path d="M40.3 5.6L42.4 3.8" stroke="#fff" stroke-width="1.1"/><path d="M40.2 5.1L42.1 3.6" stroke="#fff" stroke-width="0.5"/><path d="M28.7 13.1L31.1 11.8" stroke="#888" stroke-width="1.1"/><path d="M34.3 9.6L36.3 8.3" stroke="#888" stroke-width="1.1"/><path d="M36.0 14.5L37.8 12.1" stroke="#ddd" stroke-width="1.1"/><path d="M33.1 14.5L34.1 14.1" stroke="#bbb" stroke-width="0.9"/><path d="M38.1 12.2L39.6 11.5" stroke="#bbb" stroke-width="0.9"/><path d="M49.9 2.9L52.1 1.1" stroke="#fff" stroke-width="1.0"/><path d="M31.2 17.3L33.8 15.5" stroke="#fff" stroke-width="0.9"/><path d="M41.4 7.6L42.3 6.3" stroke="#ddd" stroke-width="0.9"/><path d="M35.5 10.7L37.7 8.7" stroke="#fff" stroke-width="0.9"/><path d="M38.1 13.1L40.8 12.0" stroke="#ddd" stroke-width="0.8"/><path d="M37.2 11.9L38.5 10.9" stroke="#bbb" stroke-width="1.1"/><path d="M51.0 5.5L52.9 4.3" stroke="#bbb" stroke-width="0.6"/><path d="M37.1 12.8L40.1 11.6" stroke="#ddd" stroke-width="0.9"/><path d="M43.1 8.5L45.1 7.6" stroke="#bbb" stroke-width="0.8"/><path d="M33.1 12.2L35.3 10.3" stroke="#ddd" stroke-width="0.7"/><path d="M33.3 13.4L36.2 11.6" stroke="#ddd" stroke-width="0.8"/><path d="M42.6 3.2L44.7 2.0" stroke="#bbb" stroke-width="0.6"/><path d="M45.8 4.7L47.4 2.2" stroke="#bbb" stroke-width="0.6"/><path d="M33.7 13.0L34.7 12.4" stroke="#fff" stroke-width="1.0"/><path d="M44.8 10.0L45.8 9.1" stroke="#bbb" stroke-width="0.8"/></g></svg>
<div class="lt" style="left:570px;top:210px;font-size:10.3px;color:#141414">Layer 4 co...</div>
<div class="a" style="left:501px;top:244px;width:130px;height:1px;background:#a8a8a8"></div>
<div class="a" style="left:454px;top:268px;width:16px;height:16px;background:#f2f2f2;border:1px solid #c4c4c4"></div>
<div class="a" style="left:505px;top:255px;width:56px;height:42px;border:1px solid #000;box-shadow:0 0 0 1px #fff;background:conic-gradient(#fff 0 25%,#cccccc 0 50%,#fff 0 75%,#cccccc 0) 0 0/8px 8px;"></div>
<svg class="a" style="left:506px;top:256px" width="54" height="40" viewBox="0 0 54 40"><g fill="none" stroke-linecap="round"><path d="M3.9 19.1 C3.9 11.5 12.4 9.6 18.1 15.3 C22.9 9.6 34.2 9.6 34.2 19.1 C34.2 25.8 24.8 31.4 20.0 35.2 C13.4 30.5 3.9 25.8 3.9 19.1Z" fill="#a8a8a8" opacity="0.85"/><path d="M28.3 17.7L29.9 17.4" stroke="#e0e0e0" stroke-width="1.0"/><path d="M19.9 23.9L23.3 23.4" stroke="#000" stroke-width="1.1"/><path d="M12.3 25.5L15.2 25.6" stroke="#111" stroke-width="1.1"/><path d="M19.6 31.2L21.9 31.3" stroke="#111" stroke-width="0.7"/><path d="M8.3 11.9L10.2 11.0" stroke="#fff" stroke-width="0.9"/><path d="M18.5 18.8L20.9 18.5" stroke="#555" stroke-width="0.7"/><path d="M12.4 25.0L15.1 25.1" stroke="#555" stroke-width="1.1"/><path d="M17.5 31.4L19.6 31.4" stroke="#555" stroke-width="1.4"/><path d="M16.5 29.7L19.9 29.4" stroke="#555" stroke-width="0.9"/><path d="M25.3 15.1L27.4 14.0" stroke="#fff" stroke-width="1.3"/><path d="M18.9 24.4L21.4 24.3" stroke="#000" stroke-width="1.2"/><path d="M28.2 22.0L30.9 21.4" stroke="#111" stroke-width="1.3"/><path d="M30.2 17.4L33.0 17.0" stroke="#000" stroke-width="1.0"/><path d="M19.0 30.5L22.6 29.9" stroke="#111" stroke-width="0.8"/><path d="M15.2 14.0L18.3 13.8" stroke="#e0e0e0" stroke-width="1.0"/><path d="M17.5 20.8L19.7 20.6" stroke="#fff" stroke-width="0.9"/><path d="M3.4 22.5L6.0 21.2" stroke="#000" stroke-width="1.2"/><path d="M31.5 18.9L34.3 18.5" stroke="#e0e0e0" stroke-width="0.8"/><path d="M24.6 21.8L28.3 22.0" stroke="#fff" stroke-width="1.0"/><path d="M25.5 27.5L27.9 26.7" stroke="#555" stroke-width="0.9"/><path d="M30.1 19.1L32.3 18.2" stroke="#000" stroke-width="1.4"/><path d="M16.5 30.8L18.4 30.5" stroke="#fff" stroke-width="1.2"/><path d="M15.5 17.1L17.1 17.1" stroke="#000" stroke-width="1.2"/><path d="M32.2 14.7L34.1 14.8" stroke="#fff" stroke-width="1.1"/><path d="M20.6 22.3L23.6 21.5" stroke="#fff" stroke-width="0.6"/><path d="M15.2 26.4L18.8 26.3" stroke="#e0e0e0" stroke-width="1.2"/><path d="M13.7 28.4L16.3 27.5" stroke="#000" stroke-width="0.9"/><path d="M24.1 27.3L28.0 27.6" stroke="#fff" stroke-width="1.3"/><path d="M16.8 21.9L19.8 21.9" stroke="#000" stroke-width="1.2"/><path d="M4.7 15.6L8.2 14.2" stroke="#555" stroke-width="1.4"/><path d="M15.1 20.7L17.1 19.8" stroke="#fff" stroke-width="0.7"/><path d="M5.6 20.6L7.1 20.6" stroke="#e0e0e0" stroke-width="0.6"/><path d="M8.9 21.7L10.7 20.9" stroke="#555" stroke-width="0.9"/><path d="M28.0 21.0L30.3 20.4" stroke="#fff" stroke-width="1.1"/><path d="M12.1 26.7L15.9 26.8" stroke="#111" stroke-width="0.9"/><path d="M32.5 16.4L34.2 16.3" stroke="#e0e0e0" stroke-width="1.1"/><path d="M18.1 15.3L21.9 14.8" stroke="#e0e0e0" stroke-width="1.4"/><path d="M11.3 27.3L14.1 26.4" stroke="#fff" stroke-width="0.9"/><path d="M32.4 22.1L35.5 20.8" stroke="#000" stroke-width="1.4"/><path d="M12.0 23.6L13.7 23.0" stroke="#fff" stroke-width="0.7"/><path d="M17.6 21.5L20.4 21.4" stroke="#e0e0e0" stroke-width="1.0"/><path d="M7.2 18.0L9.3 16.9" stroke="#111" stroke-width="0.9"/><path d="M17.9 27.9L20.5 27.8" stroke="#000" stroke-width="1.2"/><path d="M14.5 28.7L18.2 28.2" stroke="#111" stroke-width="1.2"/><path d="M15.6 28.9L18.8 28.2" stroke="#555" stroke-width="0.9"/><path d="M18.4 24.6L21.8 24.5" stroke="#555" stroke-width="1.3"/><path d="M18.3 28.2L20.1 27.9" stroke="#fff" stroke-width="1.3"/><path d="M22.3 30.3L25.5 30.1" stroke="#555" stroke-width="0.9"/><path d="M9.3 26.1L11.9 25.4" stroke="#e0e0e0" stroke-width="1.2"/><path d="M20.6 13.9L23.9 12.8" stroke="#111" stroke-width="0.8"/><path d="M7.9 16.8L10.9 16.1" stroke="#555" stroke-width="0.7"/><path d="M18.2 20.7L20.6 19.6" stroke="#e0e0e0" stroke-width="1.4"/><path d="M26.5 16.8L28.2 15.9" stroke="#555" stroke-width="0.9"/><path d="M11.2 17.9L14.2 16.4" stroke="#111" stroke-width="1.0"/><path d="M19.4 19.2L23.0 18.0" stroke="#fff" stroke-width="1.3"/><path d="M16.4 28.2L18.8 26.9" stroke="#555" stroke-width="1.0"/><path d="M30.0 14.2L33.3 13.1" stroke="#fff" stroke-width="0.9"/><path d="M30.4 23.3L33.6 22.6" stroke="#111" stroke-width="1.4"/><path d="M18.6 19.2L21.5 19.2" stroke="#fff" stroke-width="1.2"/><path d="M15.2 12.6L17.9 11.2" stroke="#fff" stroke-width="1.1"/><path d="M12.5 25.9L14.1 25.1" stroke="#fff" stroke-width="0.6"/><path d="M13.0 12.4L14.9 11.5" stroke="#555" stroke-width="0.8"/><path d="M24.4 15.6L27.7 15.3" stroke="#e0e0e0" stroke-width="1.3"/><path d="M24.1 26.3L26.1 25.7" stroke="#000" stroke-width="0.8"/><path d="M14.0 13.1L16.6 13.0" stroke="#555" stroke-width="1.0"/><path d="M29.8 17.1L32.1 16.7" stroke="#555" stroke-width="0.6"/><path d="M16.8 30.1L19.5 29.8" stroke="#fff" stroke-width="1.0"/><path d="M30.4 23.6L32.5 23.1" stroke="#000" stroke-width="0.7"/><path d="M14.7 23.0L16.5 22.9" stroke="#111" stroke-width="1.0"/><path d="M26.4 17.3L28.1 16.6" stroke="#111" stroke-width="0.8"/><path d="M23.0 10.9L25.2 10.6" stroke="#fff" stroke-width="1.0"/><path d="M21.6 27.5L25.4 27.2" stroke="#e0e0e0" stroke-width="1.1"/><path d="M9.1 23.6L12.5 22.4" stroke="#111" stroke-width="1.2"/><path d="M23.2 31.0L24.8 30.8" stroke="#e0e0e0" stroke-width="1.1"/><path d="M15.9 12.4L19.0 11.3" stroke="#e0e0e0" stroke-width="1.0"/><path d="M23.2 29.1L26.2 29.0" stroke="#fff" stroke-width="1.1"/><path d="M13.7 17.7L17.2 17.3" stroke="#000" stroke-width="1.2"/><path d="M19.3 21.9L20.9 21.8" stroke="#111" stroke-width="0.9"/><path d="M31.0 23.9L32.9 23.6" stroke="#fff" stroke-width="1.3"/><path d="M24.8 15.4L28.6 15.6" stroke="#555" stroke-width="0.6"/><path d="M32.0 16.1L33.5 15.8" stroke="#111" stroke-width="1.2"/><path d="M7.3 22.1L9.8 21.2" stroke="#e0e0e0" stroke-width="0.9"/><path d="M20.5 23.6L23.3 23.1" stroke="#fff" stroke-width="1.2"/><path d="M28.1 17.6L30.7 17.5" stroke="#fff" stroke-width="1.0"/><path d="M21.2 23.2L24.7 22.3" stroke="#111" stroke-width="1.1"/><path d="M14.8 12.1L16.3 11.4" stroke="#111" stroke-width="1.1"/><path d="M3.1 21.0L6.5 19.8" stroke="#fff" stroke-width="0.8"/><path d="M10.7 12.0L12.3 12.0" stroke="#555" stroke-width="1.0"/><path d="M2.0 17.5L4.7 16.5" stroke="#fff" stroke-width="0.7"/><path d="M26.8 25.2L29.4 25.2" stroke="#111" stroke-width="1.3"/><path d="M10.1 15.8L11.6 15.2" stroke="#fff" stroke-width="0.9"/><path d="M19.3 13.6L21.0 13.0" stroke="#111" stroke-width="0.6"/><path d="M14.7 21.1L18.5 20.5" stroke="#e0e0e0" stroke-width="1.0"/><path d="M27.7 17.8L29.4 17.4" stroke="#fff" stroke-width="1.1"/><path d="M24.5 20.3L26.9 19.7" stroke="#000" stroke-width="0.6"/><path d="M3.8 20.8L6.4 20.1" stroke="#111" stroke-width="0.9"/><path d="M19.9 13.8L23.3 13.5" stroke="#000" stroke-width="0.7"/><path d="M4.4 22.6L8.0 22.1" stroke="#fff" stroke-width="0.8"/><path d="M32.9 22.0L34.5 21.5" stroke="#fff" stroke-width="1.2"/><path d="M31.4 23.3L34.5 22.3" stroke="#555" stroke-width="1.3"/><path d="M26.0 21.3L29.0 20.7" stroke="#555" stroke-width="0.9"/><path d="M27.9 19.4L31.6 19.2" stroke="#fff" stroke-width="1.1"/><path d="M30.7 24.1L33.3 22.6" stroke="#555" stroke-width="0.6"/><path d="M10.0 15.7L13.5 15.7" stroke="#000" stroke-width="1.2"/><path d="M32.3 21.8L34.2 21.3" stroke="#fff" stroke-width="0.9"/><path d="M18.9 12.7L20.4 12.2" stroke="#fff" stroke-width="0.8"/><path d="M6.1 16.7L9.7 16.4" stroke="#111" stroke-width="1.0"/><path d="M15.4 24.1L18.6 23.3" stroke="#111" stroke-width="1.2"/><path d="M19.1 17.1L20.6 17.1" stroke="#111" stroke-width="0.7"/><path d="M21.1 11.5L23.0 11.2" stroke="#e0e0e0" stroke-width="1.1"/><path d="M32.8 21.8L34.6 21.9" stroke="#fff" stroke-width="1.2"/><path d="M20.4 16.5L22.8 16.4" stroke="#e0e0e0" stroke-width="1.3"/><path d="M27.4 25.7L29.1 25.1" stroke="#fff" stroke-width="1.1"/><path d="M15.6 27.9L18.9 28.0" stroke="#e0e0e0" stroke-width="0.7"/><path d="M26.0 11.4L28.9 10.5" stroke="#555" stroke-width="0.8"/><path d="M20.1 22.0L23.5 21.2" stroke="#e0e0e0" stroke-width="1.0"/><path d="M11.5 15.0L14.2 14.7" stroke="#111" stroke-width="0.8"/><path d="M22.3 26.3L25.0 25.7" stroke="#fff" stroke-width="1.3"/><path d="M19.4 24.5L21.8 24.0" stroke="#fff" stroke-width="0.7"/><path d="M24.2 16.5L27.0 16.1" stroke="#fff" stroke-width="1.0"/><path d="M26.8 24.9L29.8 24.5" stroke="#fff" stroke-width="1.0"/><path d="M7.2 15.3L9.4 15.1" stroke="#000" stroke-width="0.7"/><path d="M20.1 16.8L22.0 15.7" stroke="#e0e0e0" stroke-width="1.2"/><path d="M4.3 16.2L6.9 15.0" stroke="#fff" stroke-width="1.2"/><path d="M16.7 17.5L18.6 17.3" stroke="#000" stroke-width="0.8"/><path d="M30.6 18.2L33.2 17.1" stroke="#e0e0e0" stroke-width="1.0"/><path d="M16.7 23.7L20.2 22.6" stroke="#000" stroke-width="1.4"/><path d="M19.5 24.7L21.2 24.1" stroke="#fff" stroke-width="0.7"/><path d="M16.3 27.7L18.5 26.9" stroke="#000" stroke-width="1.1"/><path d="M16.7 26.9L18.3 26.6" stroke="#fff" stroke-width="1.1"/><path d="M21.9 17.8L25.5 18.0" stroke="#555" stroke-width="0.8"/><path d="M21.7 13.2L23.7 12.3" stroke="#fff" stroke-width="1.1"/><path d="M8.8 21.3L11.0 20.1" stroke="#555" stroke-width="0.7"/><path d="M3.1 17.6L5.2 16.4" stroke="#e0e0e0" stroke-width="1.0"/><path d="M3.7 21.9L6.9 22.0" stroke="#fff" stroke-width="1.2"/><path d="M17.1 21.1L19.7 20.1" stroke="#555" stroke-width="0.8"/><path d="M29.0 24.4L30.6 24.4" stroke="#000" stroke-width="1.1"/><path d="M21.5 30.8L24.3 29.8" stroke="#111" stroke-width="1.3"/><path d="M6.3 23.1L9.4 22.9" stroke="#555" stroke-width="1.2"/><path d="M9.9 18.2L13.4 17.0" stroke="#e0e0e0" stroke-width="0.8"/><path d="M20.0 25.7L22.9 25.5" stroke="#000" stroke-width="1.3"/><path d="M12.2 16.7L16.1 16.5" stroke="#fff" stroke-width="0.9"/><path d="M15.5 13.9L17.3 13.7" stroke="#555" stroke-width="0.6"/><path d="M18.2 34.0L20.6 32.6" stroke="#e0e0e0" stroke-width="1.1"/><path d="M9.9 13.2L11.4 12.4" stroke="#fff" stroke-width="1.2"/><path d="M25.0 14.7L26.8 14.4" stroke="#e0e0e0" stroke-width="1.0"/><path d="M28.3 12.0L30.4 12.1" stroke="#fff" stroke-width="1.0"/><path d="M28.3 18.1L30.1 18.1" stroke="#000" stroke-width="0.8"/><path d="M15.8 14.1L18.7 13.4" stroke="#e0e0e0" stroke-width="1.4"/><path d="M33.5 10.3L34.5 9.0" stroke="#222" stroke-width="0.9"/><path d="M36.9 6.4L38.7 5.7" stroke="#fff" stroke-width="0.9"/><path d="M39.8 5.3L40.7 4.7" stroke="#ccc" stroke-width="0.6"/><path d="M32.4 8.8L34.5 7.6" stroke="#555" stroke-width="0.5"/><path d="M35.2 10.5L37.4 8.2" stroke="#888" stroke-width="0.6"/><path d="M38.3 6.5L40.0 5.5" stroke="#fff" stroke-width="0.7"/><path d="M43.0 6.7L43.7 5.5" stroke="#222" stroke-width="1.1"/><path d="M34.2 13.6L35.8 12.8" stroke="#ccc" stroke-width="0.6"/><path d="M25.8 16.6L28.0 14.7" stroke="#ccc" stroke-width="0.8"/><path d="M34.6 10.7L35.5 9.6" stroke="#888" stroke-width="0.6"/><path d="M47.1 0.4L47.9 -0.6" stroke="#222" stroke-width="0.9"/><path d="M52.2 4.4L53.9 3.1" stroke="#fff" stroke-width="0.7"/><path d="M40.5 5.7L42.5 4.8" stroke="#ccc" stroke-width="0.8"/><path d="M49.6 6.7L52.0 4.4" stroke="#555" stroke-width="0.6"/><path d="M30.6 15.8L31.6 14.8" stroke="#555" stroke-width="0.9"/><path d="M27.9 18.0L30.0 16.6" stroke="#ccc" stroke-width="1.0"/><path d="M39.8 7.2L41.2 5.9" stroke="#222" stroke-width="0.5"/><path d="M34.1 15.6L35.5 14.4" stroke="#888" stroke-width="1.1"/><path d="M28.4 15.6L31.5 14.1" stroke="#888" stroke-width="0.6"/><path d="M44.9 7.1L46.0 5.7" stroke="#888" stroke-width="0.8"/><path d="M43.0 12.2L44.4 10.2" stroke="#555" stroke-width="1.0"/><path d="M27.4 16.2L28.8 14.0" stroke="#fff" stroke-width="0.6"/><path d="M42.6 13.4L44.1 12.1" stroke="#555" stroke-width="0.6"/><path d="M38.7 7.0L40.4 6.0" stroke="#222" stroke-width="0.8"/><path d="M30.1 12.8L33.0 11.6" stroke="#222" stroke-width="0.7"/><path d="M27.4 17.3L28.6 16.6" stroke="#222" stroke-width="0.8"/><path d="M52.6 0.4L53.6 -0.2" stroke="#555" stroke-width="0.9"/><path d="M30.5 15.9L31.7 15.2" stroke="#222" stroke-width="0.7"/><path d="M31.8 16.3L34.3 15.0" stroke="#ccc" stroke-width="1.1"/><path d="M38.0 7.2L39.2 6.5" stroke="#fff" stroke-width="0.7"/><path d="M51.6 0.8L54.4 -0.7" stroke="#222" stroke-width="0.6"/><path d="M40.0 7.1L42.2 5.2" stroke="#555" stroke-width="0.6"/><path d="M36.9 13.2L38.9 11.2" stroke="#555" stroke-width="0.5"/><path d="M27.7 15.6L28.5 14.7" stroke="#555" stroke-width="1.0"/><path d="M38.1 9.0L40.8 7.4" stroke="#888" stroke-width="1.0"/><path d="M28.3 13.5L30.1 11.6" stroke="#ccc" stroke-width="0.7"/><path d="M44.2 7.0L45.4 5.9" stroke="#fff" stroke-width="0.9"/><path d="M34.9 13.2L35.7 12.2" stroke="#ccc" stroke-width="0.6"/><path d="M36.1 14.7L38.4 12.7" stroke="#555" stroke-width="0.6"/><path d="M34.8 8.4L36.2 7.5" stroke="#222" stroke-width="0.6"/><path d="M36.9 12.7L39.2 10.7" stroke="#ccc" stroke-width="0.9"/><path d="M37.9 4.9L38.8 4.3" stroke="#fff" stroke-width="0.6"/><path d="M44.1 9.9L46.3 8.7" stroke="#fff" stroke-width="0.6"/><path d="M37.9 12.9L39.2 11.9" stroke="#222" stroke-width="0.6"/><path d="M43.9 4.3L44.7 3.5" stroke="#fff" stroke-width="0.6"/></g></svg>
<div class="lt" style="left:569px;top:273px;font-size:10.3px;color:#141414">Vector ...</div>
<div class="lt" style="left:614px;top:271px;font-size:13px;font-family:'Liberation Serif';font-style:italic;font-weight:bold;color:#333">fx</div>
<div class="a" style="left:631px;top:244px;width:10px;height:64px;background:linear-gradient(90deg,#c4c4c4,#e2e2e2);border-left:1px solid #b0b0b0"></div>
<svg class="a" style="left:633px;top:273px" width="8" height="6" viewBox="0 0 8 6"><path d="M0.5 1 L7 1 L3.75 5Z" fill="#444"/></svg>
<div class="a" style="left:474px;top:308px;width:170px;height:63px;background:#3d97f2"></div>
<div class="a" style="left:631px;top:308px;width:10px;height:63px;background:linear-gradient(90deg,#a8c6ea,#5fa6f2);border-left:1px solid #8cb4e4"></div>
<svg class="a" style="left:633px;top:337px" width="8" height="6" viewBox="0 0 8 6"><path d="M0.5 5 L7 5 L3.75 1Z" fill="#333"/></svg>
<div class="a" style="left:454px;top:331px;width:16px;height:16px;background:#f4f4f4;border:1px solid #d0d0d0"></div>
<svg class="a" style="left:455px;top:334px" width="14" height="11" viewBox="0 0 14 11"><path d="M1.3 4.2 Q6 -0.6 12 3.6" fill="none" stroke="#1a1a1a" stroke-width="1.5"/><path d="M2.3 4.4 Q6 1.6 10.8 3.8" fill="none" stroke="#999" stroke-width="0.6"/><circle cx="6.2" cy="5.3" r="3.1" fill="#000"/><circle cx="5.2" cy="4.9" r="0.8" fill="#fff"/><path d="M2.3 7.2 Q6.5 10.8 11.3 6.4" fill="none" stroke="#1a1a1a" stroke-width="1.3"/></svg>
<div class="a" style="left:505px;top:318px;width:56px;height:42px;border:1px solid #000;box-shadow:0 0 0 1px #fff;background:conic-gradient(#fff 0 25%,#cccccc 0 50%,#fff 0 75%,#cccccc 0) 0 0/8px 8px;"></div>
<svg class="a" style="left:503px;top:316px" width="60" height="46" viewBox="0 0 60 46" fill="none" stroke="#000" stroke-width="1"><path d="M0.5 15 L0.5 0.5 L20 0.5 M40 0.5 L59.5 0.5 L59.5 15 M59.5 31 L59.5 45.5 L40 45.5 M20 45.5 L0.5 45.5 L0.5 31"/></svg>
<svg class="a" style="left:506px;top:319px" width="55" height="41" viewBox="0 0 55 41"><g fill="none" stroke-linecap="round"><path d="M3.9 20.1 C3.9 12.5 12.4 10.6 18.1 16.3 C22.9 10.6 34.2 10.6 34.2 20.1 C34.2 26.8 24.8 32.5 20.0 36.2 C13.4 31.5 3.9 26.8 3.9 20.1Z" fill="#a8a8a8" opacity="0.85"/><path d="M12.1 13.0L13.9 12.4" stroke="#fff" stroke-width="1.0"/><path d="M17.4 23.0L20.4 23.3" stroke="#fff" stroke-width="1.2"/><path d="M29.1 14.9L31.8 14.8" stroke="#fff" stroke-width="1.1"/><path d="M13.2 28.7L15.1 28.7" stroke="#fff" stroke-width="1.0"/><path d="M19.6 25.1L22.5 24.1" stroke="#555" stroke-width="0.7"/><path d="M17.2 19.2L20.9 18.8" stroke="#555" stroke-width="1.1"/><path d="M23.4 23.9L25.1 23.1" stroke="#fff" stroke-width="1.0"/><path d="M7.4 21.2L9.7 20.9" stroke="#fff" stroke-width="1.4"/><path d="M22.3 16.4L24.5 15.4" stroke="#111" stroke-width="1.3"/><path d="M15.8 32.9L17.7 32.3" stroke="#fff" stroke-width="1.3"/><path d="M2.9 21.7L5.1 20.8" stroke="#fff" stroke-width="1.4"/><path d="M5.1 22.2L6.7 21.9" stroke="#fff" stroke-width="1.2"/><path d="M26.5 23.5L28.2 22.9" stroke="#fff" stroke-width="1.4"/><path d="M27.1 17.7L29.1 17.6" stroke="#000" stroke-width="1.2"/><path d="M27.8 18.5L30.6 17.7" stroke="#555" stroke-width="1.1"/><path d="M10.7 26.8L13.7 25.3" stroke="#fff" stroke-width="1.3"/><path d="M14.8 30.9L17.2 29.7" stroke="#fff" stroke-width="1.4"/><path d="M23.0 27.1L25.3 26.5" stroke="#555" stroke-width="0.8"/><path d="M18.8 17.3L20.7 16.3" stroke="#fff" stroke-width="1.3"/><path d="M9.4 18.3L11.0 18.2" stroke="#fff" stroke-width="1.3"/><path d="M8.3 19.1L11.4 18.3" stroke="#fff" stroke-width="0.8"/><path d="M2.6 21.5L4.4 20.8" stroke="#000" stroke-width="1.2"/><path d="M6.6 19.5L8.6 19.1" stroke="#000" stroke-width="1.3"/><path d="M26.7 23.7L30.3 24.0" stroke="#000" stroke-width="1.0"/><path d="M3.6 17.1L6.9 17.0" stroke="#555" stroke-width="0.7"/><path d="M16.4 22.8L19.2 22.9" stroke="#e0e0e0" stroke-width="0.9"/><path d="M3.4 21.6L4.9 21.3" stroke="#e0e0e0" stroke-width="0.7"/><path d="M9.3 16.0L11.7 16.0" stroke="#000" stroke-width="0.9"/><path d="M12.1 24.8L13.7 24.5" stroke="#fff" stroke-width="1.3"/><path d="M25.1 16.9L28.3 16.2" stroke="#fff" stroke-width="1.4"/><path d="M19.9 27.8L21.7 27.4" stroke="#fff" stroke-width="1.1"/><path d="M26.4 17.4L29.2 16.5" stroke="#fff" stroke-width="1.2"/><path d="M10.6 26.9L13.1 27.0" stroke="#fff" stroke-width="1.3"/><path d="M18.6 23.2L20.2 23.1" stroke="#000" stroke-width="1.0"/><path d="M7.7 20.3L9.6 20.1" stroke="#111" stroke-width="1.0"/><path d="M22.4 20.3L25.7 20.2" stroke="#e0e0e0" stroke-width="1.3"/><path d="M17.7 25.4L20.0 24.2" stroke="#555" stroke-width="0.8"/><path d="M24.7 24.6L26.3 24.0" stroke="#555" stroke-width="0.6"/><path d="M3.3 23.6L6.7 21.8" stroke="#e0e0e0" stroke-width="1.0"/><path d="M18.9 23.3L21.4 22.3" stroke="#000" stroke-width="1.0"/><path d="M32.3 19.3L35.1 19.0" stroke="#fff" stroke-width="1.4"/><path d="M18.6 24.0L21.0 23.4" stroke="#e0e0e0" stroke-width="1.2"/><path d="M13.8 27.6L17.0 26.5" stroke="#555" stroke-width="0.6"/><path d="M4.8 17.8L6.9 16.9" stroke="#fff" stroke-width="0.9"/><path d="M29.9 23.9L32.8 23.2" stroke="#fff" stroke-width="0.9"/><path d="M27.3 22.7L28.9 21.9" stroke="#111" stroke-width="1.1"/><path d="M6.3 25.3L9.8 25.0" stroke="#555" stroke-width="0.9"/><path d="M4.8 16.7L7.6 15.7" stroke="#000" stroke-width="1.0"/><path d="M11.3 23.1L13.2 22.8" stroke="#000" stroke-width="0.6"/><path d="M2.2 16.7L5.4 16.8" stroke="#fff" stroke-width="0.8"/><path d="M24.1 22.5L26.9 21.4" stroke="#555" stroke-width="1.4"/><path d="M7.6 17.3L11.1 16.4" stroke="#111" stroke-width="1.0"/><path d="M29.3 20.6L32.3 20.4" stroke="#fff" stroke-width="1.2"/><path d="M25.8 17.5L28.2 16.2" stroke="#555" stroke-width="1.2"/><path d="M11.1 24.5L12.8 23.6" stroke="#111" stroke-width="0.8"/><path d="M8.9 22.1L11.6 21.1" stroke="#000" stroke-width="1.1"/><path d="M23.5 17.1L26.2 16.7" stroke="#fff" stroke-width="0.6"/><path d="M7.9 25.3L9.9 25.1" stroke="#000" stroke-width="1.3"/><path d="M19.1 34.6L21.6 33.9" stroke="#111" stroke-width="1.3"/><path d="M14.9 25.5L17.5 25.0" stroke="#fff" stroke-width="1.0"/><path d="M9.4 15.1L11.5 14.0" stroke="#555" stroke-width="1.0"/><path d="M27.5 21.6L31.3 20.6" stroke="#fff" stroke-width="0.7"/><path d="M21.8 13.1L25.0 11.6" stroke="#555" stroke-width="1.3"/><path d="M8.3 12.7L11.5 12.9" stroke="#555" stroke-width="1.1"/><path d="M4.3 23.4L8.0 22.4" stroke="#555" stroke-width="0.8"/><path d="M8.9 23.0L11.7 22.0" stroke="#e0e0e0" stroke-width="1.3"/><path d="M21.5 29.7L23.2 29.7" stroke="#555" stroke-width="1.4"/><path d="M34.4 20.2L37.3 18.8" stroke="#000" stroke-width="1.3"/><path d="M18.9 19.8L21.2 19.7" stroke="#555" stroke-width="0.8"/><path d="M25.0 30.0L27.3 29.7" stroke="#e0e0e0" stroke-width="1.2"/><path d="M16.4 15.5L19.6 15.2" stroke="#e0e0e0" stroke-width="1.3"/><path d="M25.5 25.8L28.7 24.9" stroke="#e0e0e0" stroke-width="0.8"/><path d="M24.5 17.4L28.1 16.9" stroke="#fff" stroke-width="1.1"/><path d="M14.2 23.4L17.9 22.5" stroke="#fff" stroke-width="1.3"/><path d="M7.4 21.4L10.5 21.1" stroke="#555" stroke-width="1.3"/><path d="M21.9 15.5L23.8 14.7" stroke="#555" stroke-width="1.4"/><path d="M20.0 21.0L21.6 20.9" stroke="#555" stroke-width="0.7"/><path d="M20.6 16.4L23.3 14.9" stroke="#555" stroke-width="0.6"/><path d="M10.0 13.2L13.6 13.4" stroke="#e0e0e0" stroke-width="1.3"/><path d="M19.1 13.7L21.6 12.7" stroke="#111" stroke-width="1.3"/><path d="M17.5 19.5L19.9 18.5" stroke="#555" stroke-width="0.8"/><path d="M4.9 22.8L8.5 22.5" stroke="#555" stroke-width="1.4"/><path d="M29.9 17.7L33.0 16.5" stroke="#fff" stroke-width="0.7"/><path d="M7.9 20.9L9.9 20.6" stroke="#000" stroke-width="1.3"/><path d="M30.6 24.1L33.1 24.1" stroke="#fff" stroke-width="1.2"/><path d="M26.8 24.2L30.0 23.1" stroke="#111" stroke-width="0.7"/><path d="M25.5 23.3L27.2 23.2" stroke="#555" stroke-width="1.0"/><path d="M7.8 23.0L10.5 22.4" stroke="#e0e0e0" stroke-width="1.0"/><path d="M7.3 21.3L10.0 20.2" stroke="#fff" stroke-width="1.1"/><path d="M16.7 24.8L18.4 24.6" stroke="#fff" stroke-width="0.9"/><path d="M19.8 20.0L22.2 19.3" stroke="#fff" stroke-width="1.2"/><path d="M28.3 18.1L30.5 17.7" stroke="#fff" stroke-width="0.9"/><path d="M29.5 19.3L32.4 19.3" stroke="#fff" stroke-width="0.9"/><path d="M33.0 19.4L36.6 19.5" stroke="#000" stroke-width="1.0"/><path d="M11.3 21.5L13.9 21.2" stroke="#555" stroke-width="1.2"/><path d="M18.2 24.1L20.4 24.1" stroke="#111" stroke-width="0.6"/><path d="M14.7 13.4L17.3 13.4" stroke="#111" stroke-width="1.1"/><path d="M28.1 14.1L31.0 14.2" stroke="#fff" stroke-width="0.8"/><path d="M23.2 30.4L25.3 29.8" stroke="#fff" stroke-width="0.7"/><path d="M5.4 21.4L7.6 20.7" stroke="#111" stroke-width="0.9"/><path d="M30.7 21.6L34.1 19.7" stroke="#fff" stroke-width="1.0"/><path d="M17.6 16.5L20.1 15.6" stroke="#111" stroke-width="0.9"/><path d="M15.6 16.3L17.5 15.5" stroke="#fff" stroke-width="1.0"/><path d="M21.3 29.0L24.1 27.8" stroke="#fff" stroke-width="0.9"/><path d="M31.3 19.6L33.5 19.3" stroke="#111" stroke-width="0.9"/><path d="M20.5 31.4L24.2 30.0" stroke="#111" stroke-width="1.4"/><path d="M8.6 18.7L10.2 18.0" stroke="#fff" stroke-width="0.7"/><path d="M18.6 20.5L22.1 19.2" stroke="#fff" stroke-width="1.3"/><path d="M14.3 28.0L17.3 28.3" stroke="#111" stroke-width="1.4"/><path d="M19.2 13.3L21.1 12.6" stroke="#555" stroke-width="0.7"/><path d="M11.7 22.6L14.7 20.9" stroke="#111" stroke-width="0.8"/><path d="M12.2 22.8L14.4 22.9" stroke="#555" stroke-width="0.8"/><path d="M14.9 19.7L17.7 19.7" stroke="#fff" stroke-width="0.7"/><path d="M18.5 19.7L22.3 19.9" stroke="#111" stroke-width="0.9"/><path d="M19.0 14.4L20.8 14.2" stroke="#fff" stroke-width="0.7"/><path d="M28.8 24.0L30.4 23.5" stroke="#111" stroke-width="0.8"/><path d="M15.9 21.3L18.7 20.8" stroke="#e0e0e0" stroke-width="0.7"/><path d="M17.7 21.9L21.3 22.0" stroke="#fff" stroke-width="1.3"/><path d="M21.5 13.9L25.3 13.6" stroke="#555" stroke-width="1.0"/><path d="M29.6 19.8L32.1 18.6" stroke="#e0e0e0" stroke-width="1.4"/><path d="M14.8 30.3L18.4 30.0" stroke="#fff" stroke-width="1.3"/><path d="M15.8 14.6L19.3 13.2" stroke="#fff" stroke-width="1.0"/><path d="M30.2 14.8L31.9 14.9" stroke="#000" stroke-width="1.1"/><path d="M12.4 14.7L15.2 13.7" stroke="#e0e0e0" stroke-width="1.1"/><path d="M22.8 21.3L24.8 20.5" stroke="#000" stroke-width="0.8"/><path d="M22.9 12.2L25.4 12.3" stroke="#fff" stroke-width="1.2"/><path d="M20.2 23.5L22.9 23.6" stroke="#000" stroke-width="0.7"/><path d="M23.4 24.4L26.7 24.2" stroke="#fff" stroke-width="0.7"/><path d="M13.2 29.3L15.5 28.0" stroke="#fff" stroke-width="0.8"/><path d="M18.8 25.8L20.8 25.4" stroke="#fff" stroke-width="0.8"/><path d="M2.6 20.5L6.6 20.7" stroke="#000" stroke-width="0.8"/><path d="M18.7 21.4L22.1 21.3" stroke="#e0e0e0" stroke-width="0.8"/><path d="M10.0 20.2L12.4 19.9" stroke="#111" stroke-width="0.6"/><path d="M5.2 18.9L8.0 17.6" stroke="#111" stroke-width="1.2"/><path d="M14.4 21.1L16.8 20.0" stroke="#111" stroke-width="1.4"/><path d="M13.4 30.6L15.7 30.0" stroke="#000" stroke-width="0.9"/><path d="M21.3 20.4L23.8 19.7" stroke="#000" stroke-width="1.1"/><path d="M7.4 24.7L9.8 24.4" stroke="#111" stroke-width="1.1"/><path d="M35.0 15.1L35.7 14.4" stroke="#222" stroke-width="1.0"/><path d="M42.9 3.6L45.5 2.0" stroke="#ccc" stroke-width="0.8"/><path d="M32.6 17.0L34.3 16.3" stroke="#222" stroke-width="0.6"/><path d="M42.3 7.5L43.2 6.5" stroke="#fff" stroke-width="1.1"/><path d="M35.9 16.0L38.2 13.6" stroke="#ccc" stroke-width="0.8"/><path d="M39.8 13.7L42.7 12.3" stroke="#ccc" stroke-width="0.5"/><path d="M36.4 13.7L38.2 13.1" stroke="#ccc" stroke-width="0.9"/><path d="M35.4 11.0L36.8 10.0" stroke="#222" stroke-width="1.0"/><path d="M42.0 14.7L42.7 13.8" stroke="#ccc" stroke-width="0.5"/><path d="M28.8 15.2L31.0 12.9" stroke="#555" stroke-width="0.6"/><path d="M35.8 10.7L37.3 9.8" stroke="#fff" stroke-width="0.9"/><path d="M38.4 10.7L40.0 9.7" stroke="#888" stroke-width="0.7"/><path d="M41.7 3.2L44.3 1.5" stroke="#555" stroke-width="0.7"/><path d="M34.1 11.6L34.7 10.8" stroke="#fff" stroke-width="0.5"/><path d="M30.5 17.8L31.6 17.0" stroke="#888" stroke-width="0.6"/><path d="M54.2 -0.1L55.3 -1.1" stroke="#555" stroke-width="0.5"/><path d="M40.5 16.0L41.7 14.8" stroke="#888" stroke-width="0.8"/><path d="M52.3 -0.2L53.9 -0.9" stroke="#888" stroke-width="0.9"/><path d="M33.3 17.3L35.1 15.6" stroke="#ccc" stroke-width="1.0"/><path d="M38.9 12.2L41.5 10.9" stroke="#ccc" stroke-width="1.0"/><path d="M44.9 8.0L46.5 7.3" stroke="#ccc" stroke-width="0.9"/><path d="M30.1 15.1L31.7 13.7" stroke="#ccc" stroke-width="1.0"/><path d="M37.4 12.4L38.7 11.3" stroke="#ccc" stroke-width="0.8"/><path d="M48.2 4.3L50.7 3.3" stroke="#888" stroke-width="0.8"/><path d="M25.6 16.7L27.3 13.8" stroke="#222" stroke-width="0.9"/><path d="M40.7 6.0L42.8 3.9" stroke="#fff" stroke-width="0.6"/><path d="M52.9 -0.2L54.2 -1.9" stroke="#fff" stroke-width="0.7"/><path d="M38.4 6.0L39.9 4.7" stroke="#888" stroke-width="0.8"/><path d="M48.7 -1.0L49.8 -1.5" stroke="#222" stroke-width="1.1"/><path d="M51.5 5.7L53.6 3.6" stroke="#222" stroke-width="0.7"/><path d="M28.5 15.4L30.4 14.4" stroke="#555" stroke-width="0.8"/><path d="M53.3 3.5L54.2 2.4" stroke="#555" stroke-width="0.9"/><path d="M42.8 6.4L46.0 5.0" stroke="#222" stroke-width="1.0"/><path d="M51.9 0.6L52.7 -0.4" stroke="#fff" stroke-width="0.7"/><path d="M43.2 6.3L44.5 5.0" stroke="#ccc" stroke-width="1.0"/><path d="M47.4 3.9L49.2 1.2" stroke="#555" stroke-width="0.8"/><path d="M46.2 6.4L47.2 5.8" stroke="#555" stroke-width="0.5"/><path d="M47.3 8.3L49.3 6.4" stroke="#ccc" stroke-width="0.8"/><path d="M35.9 12.7L37.4 11.1" stroke="#fff" stroke-width="0.7"/><path d="M38.9 6.1L40.4 5.1" stroke="#222" stroke-width="1.1"/><path d="M41.8 7.9L43.2 6.4" stroke="#fff" stroke-width="1.0"/><path d="M49.8 9.0L51.2 7.2" stroke="#fff" stroke-width="1.0"/><path d="M52.1 1.2L53.6 -0.4" stroke="#888" stroke-width="0.7"/><path d="M34.8 15.2L37.2 14.3" stroke="#222" stroke-width="1.1"/><path d="M31.0 19.9L31.6 18.8" stroke="#fff" stroke-width="0.9"/></g></svg>
<div class="lt" style="left:569px;top:336px;font-size:10.8px;font-weight:bold;color:#fff">Vecto...</div>
<div class="lt" style="left:614px;top:334px;font-size:13px;font-family:'Liberation Serif';font-style:italic;font-weight:bold;color:#222">fx</div>
<svg class="a" style="left:521px;top:375px" width="14" height="11" viewBox="0 0 14 11"><path d="M1.3 4.2 Q6 -0.6 12 3.6" fill="none" stroke="#1a1a1a" stroke-width="1.5"/><path d="M2.3 4.4 Q6 1.6 10.8 3.8" fill="none" stroke="#999" stroke-width="0.6"/><circle cx="6.2" cy="5.3" r="3.1" fill="#000"/><circle cx="5.2" cy="4.9" r="0.8" fill="#fff"/><path d="M2.3 7.2 Q6.5 10.8 11.3 6.4" fill="none" stroke="#1a1a1a" stroke-width="1.3"/></svg>
<div class="lt" style="left:539px;top:376px;font-size:10px;color:#141414">Effects</div>
<div class="a" style="left:535px;top:390px;width:107px;height:1px;background:#a8a8a8"></div>
<svg class="a" style="left:539px;top:394px" width="14" height="11" viewBox="0 0 14 11"><path d="M1.3 4.2 Q6 -0.6 12 3.6" fill="none" stroke="#1a1a1a" stroke-width="1.5"/><path d="M2.3 4.4 Q6 1.6 10.8 3.8" fill="none" stroke="#999" stroke-width="0.6"/><circle cx="6.2" cy="5.3" r="3.1" fill="#000"/><circle cx="5.2" cy="4.9" r="0.8" fill="#fff"/><path d="M2.3 7.2 Q6.5 10.8 11.3 6.4" fill="none" stroke="#1a1a1a" stroke-width="1.3"/></svg>
<div class="lt" style="left:557px;top:394px;font-size:10.3px;color:#141414">Drop Shadow</div>
<div class="a" style="left:553px;top:409px;width:89px;height:1px;background:#a8a8a8"></div>
<svg class="a" style="left:539px;top:413px" width="14" height="11" viewBox="0 0 14 11"><path d="M1.3 4.2 Q6 -0.6 12 3.6" fill="none" stroke="#1a1a1a" stroke-width="1.5"/><path d="M2.3 4.4 Q6 1.6 10.8 3.8" fill="none" stroke="#999" stroke-width="0.6"/><circle cx="6.2" cy="5.3" r="3.1" fill="#000"/><circle cx="5.2" cy="4.9" r="0.8" fill="#fff"/><path d="M2.3 7.2 Q6.5 10.8 11.3 6.4" fill="none" stroke="#1a1a1a" stroke-width="1.3"/></svg>
<div class="lt" style="left:557px;top:413px;font-size:10.3px;color:#141414">Inner Shadow</div>
<div class="a" style="left:553px;top:428px;width:89px;height:1px;background:#a8a8a8"></div>
<svg class="a" style="left:539px;top:432px" width="14" height="11" viewBox="0 0 14 11"><path d="M1.3 4.2 Q6 -0.6 12 3.6" fill="none" stroke="#1a1a1a" stroke-width="1.5"/><path d="M2.3 4.4 Q6 1.6 10.8 3.8" fill="none" stroke="#999" stroke-width="0.6"/><circle cx="6.2" cy="5.3" r="3.1" fill="#000"/><circle cx="5.2" cy="4.9" r="0.8" fill="#fff"/><path d="M2.3 7.2 Q6.5 10.8 11.3 6.4" fill="none" stroke="#1a1a1a" stroke-width="1.3"/></svg>
<div class="lt" style="left:557px;top:432px;font-size:10.3px;letter-spacing:-0.3px;color:#141414">Bevel and Emboss</div>
<div class="a" style="left:553px;top:447px;width:89px;height:1px;background:#a8a8a8"></div>
<svg class="a" style="left:539px;top:451px" width="14" height="11" viewBox="0 0 14 11"><path d="M1.3 4.2 Q6 -0.6 12 3.6" fill="none" stroke="#1a1a1a" stroke-width="1.5"/><path d="M2.3 4.4 Q6 1.6 10.8 3.8" fill="none" stroke="#999" stroke-width="0.6"/><circle cx="6.2" cy="5.3" r="3.1" fill="#000"/><circle cx="5.2" cy="4.9" r="0.8" fill="#fff"/><path d="M2.3 7.2 Q6.5 10.8 11.3 6.4" fill="none" stroke="#1a1a1a" stroke-width="1.3"/></svg>
<div class="lt" style="left:557px;top:451px;font-size:10.3px;color:#141414">Gradient Overlay</div>
<div class="a" style="left:553px;top:466px;width:89px;height:1px;background:#a8a8a8"></div>
<svg class="a" style="left:539px;top:470px" width="14" height="11" viewBox="0 0 14 11"><path d="M1.3 4.2 Q6 -0.6 12 3.6" fill="none" stroke="#1a1a1a" stroke-width="1.5"/><path d="M2.3 4.4 Q6 1.6 10.8 3.8" fill="none" stroke="#999" stroke-width="0.6"/><circle cx="6.2" cy="5.3" r="3.1" fill="#000"/><circle cx="5.2" cy="4.9" r="0.8" fill="#fff"/><path d="M2.3 7.2 Q6.5 10.8 11.3 6.4" fill="none" stroke="#1a1a1a" stroke-width="1.3"/></svg>
<div class="lt" style="left:557px;top:470px;font-size:10.3px;color:#141414">Satin</div>
<div class="a" style="left:501px;top:484px;width:141px;height:1px;background:#a8a8a8"></div>
<div class="a" style="left:449px;top:493px;width:195px;height:17px;background:linear-gradient(#ececec 0,#ececec 15px,#6a6a6a 15px)"></div>
<svg class="a" style="left:449px;top:493px" width="195" height="17" viewBox="0 0 195 17"><g fill="none" stroke="#444" stroke-width="2.6"><rect x="9.5" y="3.5" width="7.5" height="6" rx="3"/><rect x="17" y="3.5" width="7.5" height="6" rx="3"/></g><g fill="none" stroke="#f4f4f4" stroke-width="1"><rect x="9.5" y="3.5" width="7.5" height="6" rx="3"/><rect x="17" y="3.5" width="7.5" height="6" rx="3"/></g><path d="M12 6.5 L22 6.5" stroke="#777" stroke-width="1.2"/><text x="38" y="12" font-family="Liberation Serif" font-style="italic" font-weight="bold" font-size="13" fill="#333">fx</text><path d="M53 11 L56 11 L54.5 13Z" fill="#000"/><rect x="65.5" y="1.5" width="12" height="11" fill="#a8a8a8" stroke="#444"/><circle cx="71.5" cy="7" r="3.6" fill="#fff"/><circle cx="99.5" cy="7" r="5" fill="#fff" stroke="#333" stroke-width="1"/><path d="M95.96 10.54 A5 5 0 0 1 103.04 3.46Z" fill="#222"/><path d="M107 11 L110 11 L108.5 13Z" fill="#000"/><rect x="121.5" y="4.5" width="10" height="6" fill="#ddd" stroke="#555"/><rect x="121.5" y="3" width="4" height="2" fill="#aaa"/><rect x="149.5" y="2.5" width="8" height="9" fill="#eee" stroke="#333"/><rect x="151" y="7" width="3" height="3" fill="#555"/><rect x="176" y="4" width="8" height="8" fill="#ccc" stroke="#333"/><rect x="175" y="2.5" width="10" height="1.5" fill="#333"/><path d="M178 6 L178 11 M180 6 L180 11 M182 6 L182 11" stroke="#333"/></svg>
<div class="pink" style="left:559px;top:138px;width:100px;height:30px;border-radius:2px"></div>
<div class="pink" style="left:436px;top:302px;width:220px;height:191px"></div>

</body></html>
